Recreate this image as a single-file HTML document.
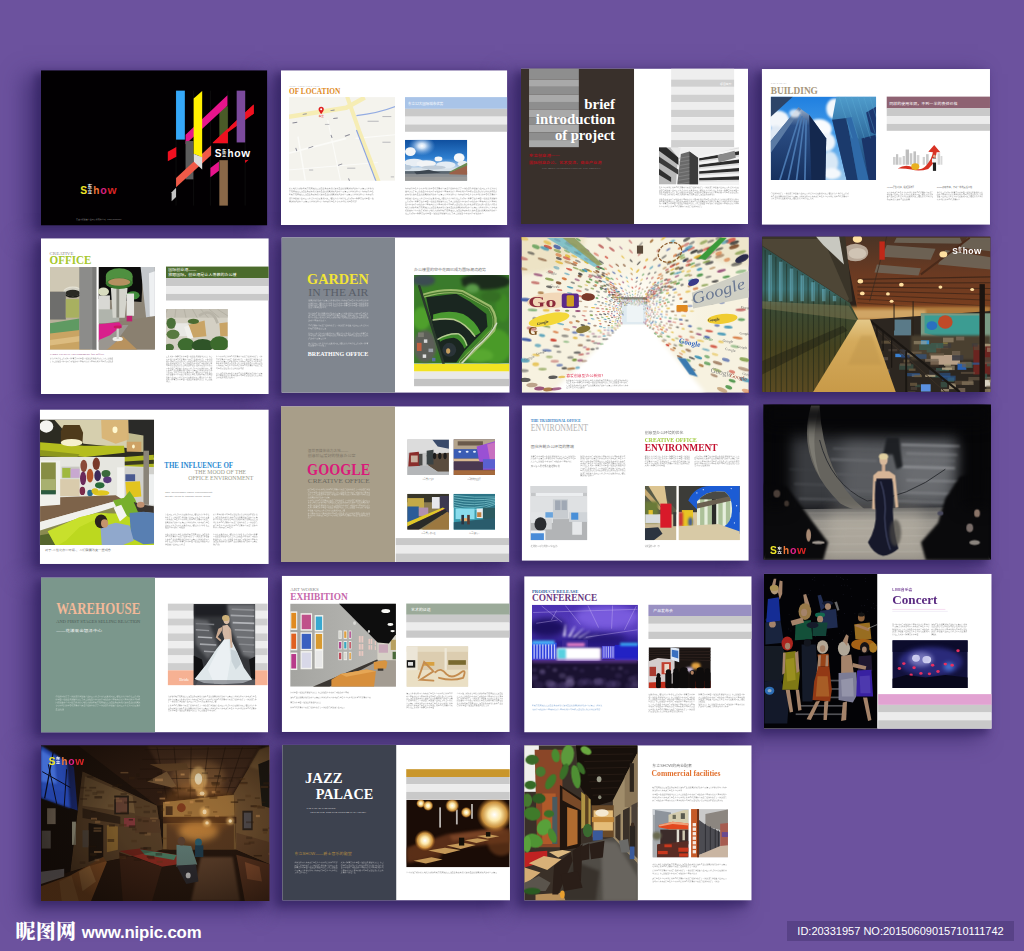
<!DOCTYPE html>
<html lang="zh"><head><meta charset="utf-8"><title>Show brochure</title>
<style>
html,body{margin:0;padding:0}
body{width:1024px;height:951px;overflow:hidden;background:#6c529e;position:relative;font-family:"Liberation Sans","Noto Sans CJK SC",sans-serif}
.sh{position:absolute;background:#3f2f6e;box-shadow:-15px 8px 20px 4px rgba(48,32,96,.55),-5px 4px 8px 2px rgba(40,24,84,.55)}
svg.t{position:absolute;display:block}
svg text{white-space:pre}
.s{font-family:"Liberation Serif","Noto Serif CJK SC",serif}
.b{font-weight:bold}
.c{font-family:"Liberation Sans","Noto Sans CJK SC",sans-serif}
#wm{position:absolute;left:15.5px;top:915.5px;color:#fff;font-weight:bold;white-space:nowrap}
#id{position:absolute;left:787px;top:921px;width:227px;height:20px;background:#584287;color:#fff;font-size:11px;line-height:20px;text-align:center;white-space:nowrap}
</style></head><body>
<div class="sh" style="left:42.0px;top:71.3px;width:224.3px;height:153.3px"></div>
<div class="sh" style="left:282.0px;top:71.3px;width:224.3px;height:152.8px"></div>
<div class="sh" style="left:522.0px;top:69.5px;width:225.1px;height:153.5px"></div>
<div class="sh" style="left:762.7px;top:70.0px;width:226.3px;height:153.8px"></div>
<div class="sh" style="left:42.0px;top:239.3px;width:225.8px;height:153.8px"></div>
<div class="sh" style="left:282.5px;top:238.3px;width:226.3px;height:153.5px"></div>
<div class="sh" style="left:522.7px;top:238.3px;width:225.1px;height:153.5px"></div>
<div class="sh" style="left:763.2px;top:237.5px;width:226.3px;height:153.5px"></div>
<div class="sh" style="left:40.8px;top:410.4px;width:227.0px;height:152.5px"></div>
<div class="sh" style="left:282.0px;top:407.3px;width:226.3px;height:153.8px"></div>
<div class="sh" style="left:522.7px;top:406.3px;width:225.1px;height:153.5px"></div>
<div class="sh" style="left:764.4px;top:405.5px;width:225.5px;height:153.0px"></div>
<div class="sh" style="left:42.0px;top:578.4px;width:225.1px;height:153.0px"></div>
<div class="sh" style="left:282.7px;top:576.7px;width:226.0px;height:154.2px"></div>
<div class="sh" style="left:525.2px;top:577.2px;width:225.5px;height:154.2px"></div>
<div class="sh" style="left:764.9px;top:574.8px;width:225.8px;height:153.0px"></div>
<div class="sh" style="left:42.0px;top:746.3px;width:226.3px;height:153.8px"></div>
<div class="sh" style="left:283.2px;top:745.8px;width:225.8px;height:153.8px"></div>
<div class="sh" style="left:525.2px;top:746.3px;width:225.5px;height:153.3px"></div>
<svg class="t" style="left:30px;top:60px" width="250" height="175" viewBox="0 0 1024 716.8">
<defs><clipPath id="clip1"><rect x="45" y="42" width="927" height="636"/></clipPath></defs>
<g clip-path="url(#clip1)">
<rect x="45" y="42" width="927" height="636" fill="#020002" /><g transform="translate(532.5,81.9) scale(0.5814)"><line x1="113" y1="75" x2="113" y2="885" stroke="#2c2c2c" stroke-width="2" /><line x1="237" y1="75" x2="237" y2="885" stroke="#2c2c2c" stroke-width="2" /><line x1="355" y1="75" x2="355" y2="885" stroke="#2c2c2c" stroke-width="2" /><line x1="478" y1="75" x2="478" y2="885" stroke="#2c2c2c" stroke-width="2" /><line x1="600" y1="75" x2="600" y2="885" stroke="#2c2c2c" stroke-width="2" /><rect x="418" y="185" width="60" height="260" fill="#4a5a28" /><polygon points="55,505 115,472 115,540 55,572" fill="#f01020" /><polygon points="370,447 660,172 660,238 370,448 370,447" fill="#f01020" /><polygon points="372,440 660,172 660,238 478,340 478,445 372,445" fill="#f01020" /><rect x="540" y="75" width="60" height="365" fill="#7b4a9c" /><polygon points="180,385 475,108 475,180 180,452" fill="#e8148c" /><rect x="180" y="430" width="55" height="270" fill="#5c5c5c" /><polygon points="113,690 360,462 360,530 113,755" fill="#f05a48" /><rect x="113" y="75" width="62" height="345" fill="#35a8f8" /><polygon points="237,130 297,78 297,545 237,520" fill="#fff000" /><polygon points="237,520 297,545 297,630 237,575" fill="#dcdcdc" /><polygon points="82,790 113,760 113,825 82,855" fill="#c4c4c4" /><rect x="418" y="565" width="60" height="320" fill="#8a6848" /><polygon points="355,620 415,575 415,640 355,685" fill="#e8148c" /><polygon points="598,565 625,562 600,585" fill="#e01020" /></g><text x="756.339" y="398.763" font-size="44.4125" class="c b" fill="#fff" textLength="27.6165" lengthAdjust="spacingAndGlyphs">S</text><text x="785.409" y="378.937" font-size="16.628" class="c b" fill="#fff" textLength="18.8955" lengthAdjust="spacingAndGlyphs">东</text><text x="785.409" y="397.164" font-size="16.628" class="c b" fill="#fff" textLength="18.8955" lengthAdjust="spacingAndGlyphs">立</text><text x="808.665" y="398.763" font-size="44.4125" class="c b" fill="#fff" textLength="24.7095" lengthAdjust="spacingAndGlyphs">h</text><text x="836.282" y="398.763" font-size="44.4125" class="c b" fill="#fff" textLength="26.163" lengthAdjust="spacingAndGlyphs">o</text><text x="865.351" y="398.763" font-size="44.4125" class="c b" fill="#fff" textLength="36.3375" lengthAdjust="spacingAndGlyphs">w</text><text x="206" y="547" font-size="46.3889" class="c b" fill="#f0e628" textLength="28.12" lengthAdjust="spacingAndGlyphs">S</text><text x="235.6" y="526.292" font-size="17.368" class="c b" fill="#fff" textLength="19.24" lengthAdjust="spacingAndGlyphs">东</text><text x="235.6" y="545.33" font-size="17.368" class="c b" fill="#fff" textLength="19.24" lengthAdjust="spacingAndGlyphs">立</text><text x="259.28" y="547" font-size="46.3889" class="c b" fill="#f07838" textLength="25.16" lengthAdjust="spacingAndGlyphs">h</text><text x="287.4" y="547" font-size="46.3889" class="c b" fill="#d42080" textLength="26.64" lengthAdjust="spacingAndGlyphs">o</text><text x="317" y="547" font-size="46.3889" class="c b" fill="#d82424" textLength="37" lengthAdjust="spacingAndGlyphs">w</text><text x="188" y="656" font-size="7" fill="#9a9a9a" class="c" text-anchor="start" textLength="186" lengthAdjust="spacingAndGlyphs" >东立国际创意产业园开发有限公司   0086-00000000</text>
</g></svg>
<svg class="t" style="left:270px;top:60px" width="250" height="175" viewBox="0 0 1024 716.8">
<defs><clipPath id="clip2"><rect x="45" y="42" width="927" height="634"/></clipPath></defs>
<g clip-path="url(#clip2)">
<rect x="45" y="42" width="927" height="634" fill="#ffffff" /><text x="78" y="112" font-size="11" fill="#9a9a9a" class="s" text-anchor="start" textLength="127" lengthAdjust="spacingAndGlyphs" >THE ADVANTAGE</text><text x="78" y="141" font-size="33.3333" fill="#e08a1e" class="s b" text-anchor="start" textLength="210" lengthAdjust="spacingAndGlyphs" >OF LOCATION</text><defs><clipPath id="cp1"><rect x="78" y="152" width="434" height="343"/></clipPath></defs><g clip-path="url(#cp1)"><rect x="78" y="152" width="434" height="343" fill="#f4f3ed" /><g transform="translate(61.4,131.1) scale(0.76)"><line x1="20" y1="330" x2="330" y2="250" stroke="#fbfbf8" stroke-width="10" /><line x1="70" y1="240" x2="110" y2="480" stroke="#fbfbf8" stroke-width="8" /><line x1="230" y1="150" x2="300" y2="480" stroke="#fbfbf8" stroke-width="6" /><line x1="380" y1="250" x2="600" y2="230" stroke="#fbfbf8" stroke-width="6" /><line x1="20" y1="420" x2="500" y2="380" stroke="#fbfbf8" stroke-width="5" /><path d="M15,135 L330,85 L430,30" stroke="#f6edb4" stroke-width="24" fill="none" stroke-linejoin="round"/><path d="M335,25 L400,210 L505,485" stroke="#f6edb4" stroke-width="22" fill="none" stroke-linejoin="round"/><path d="M385,127 Q500,115 595,78" stroke="#94ace2" stroke-width="7" fill="none"/><path d="M385,205 L492,485" stroke="#8aa2e0" stroke-width="6" fill="none"/><rect x="40" y="165" width="26" height="5" fill="#8a8a96" transform="rotate(-10 40 165)"/><rect x="125" y="300" width="28" height="5" fill="#8a8a96" transform="rotate(-20 125 300)"/><rect x="285" y="393" width="24" height="5" fill="#8a8a96" transform="rotate(-20 285 393)"/><rect x="322" y="236" width="28" height="5" fill="#8a8a96" transform="rotate(-20 322 236)"/><rect x="60" y="300" width="18" height="5" fill="#8a8a96" transform="rotate(70 60 300)"/><rect x="250" y="230" width="18" height="5" fill="#8a8a96" transform="rotate(70 250 230)"/><rect x="345" y="465" width="16" height="5" fill="#8a8a96" transform="rotate(70 345 465)"/><rect x="260" y="140" width="24" height="5" fill="#8a8a96" transform="rotate(-5 260 140)"/><rect x="95" y="118" width="22" height="5" fill="#8a8a96" transform="rotate(-8 95 118)"/><rect x="245" y="98" width="22" height="5" fill="#8a8a96" transform="rotate(-8 245 98)"/><rect x="525" y="130" width="48" height="5" fill="#b4b4b8"/><rect x="445" y="155" width="60" height="5" fill="#b4b4b8"/><rect x="525" y="268" width="44" height="5" fill="#b4b4b8"/><rect x="335" y="408" width="44" height="5" fill="#b4b4b8"/><rect x="130" y="418" width="22" height="5" fill="#b4b4b8"/><rect x="215" y="172" width="24" height="5" fill="#b4b4b8"/><rect x="570" y="455" width="18" height="5" fill="#b4b4b8"/><path d="M195,120 C183,104 181,98 181,93 a14,14 0 1 1 28,0 C209,98 207,104 195,120 Z" fill="#e02020"/><circle cx="195" cy="93" r="5.5" fill="#fff"/><text x="182" y="136" font-size="11" fill="#e02020" class="c" text-anchor="start" textLength="28" lengthAdjust="spacingAndGlyphs" >东立</text></g></g><rect x="553" y="152" width="419" height="48" fill="#a9c4e8" /><rect x="553" y="200" width="419" height="32" fill="#c9c9c9" /><rect x="553" y="232" width="419" height="32" fill="#ececec" /><rect x="553" y="264" width="419" height="30" fill="#c9c9c9" /><text x="565" y="184" font-size="14" fill="#ffffff" class="c" text-anchor="start" textLength="145" lengthAdjust="spacingAndGlyphs" >东立12大国际城市优势</text><defs><clipPath id="cp2"><rect x="553" y="327" width="255" height="168"/></clipPath><linearGradient id="lg3" x1="0" y1="0" x2="0" y2="1"><stop offset="0" stop-color="#0f4f9e"/><stop offset="0.45" stop-color="#2f7fd0"/><stop offset="0.62" stop-color="#9cc0e4"/><stop offset="0.7" stop-color="#d8e2ea"/></linearGradient><radialGradient id="rg4" cx="0.5" cy="0.5" r="0.5"><stop offset="0" stop-color="#ffffff"/><stop offset="0.25" stop-color="#eaf4ff" stop-opacity="0.9"/><stop offset="1" stop-color="#7ab0e8" stop-opacity="0"/></radialGradient><filter id="bl5" x="-100%" y="-100%" width="300%" height="300%" color-interpolation-filters="sRGB"><feGaussianBlur stdDeviation="3"/></filter></defs><g clip-path="url(#cp2)"><rect x="553" y="327" width="255" height="168" fill="url(#lg3)" /><ellipse cx="622" cy="352" rx="55" ry="40" fill="url(#rg4)" /><g filter="url(#bl5)"><ellipse cx="575" cy="375" rx="22" ry="18" fill="#f4f6f8" /><ellipse cx="590" cy="420" rx="40" ry="16" fill="#e8eef4" /><ellipse cx="640" cy="425" rx="40" ry="14" fill="#f2f4f6" /><ellipse cx="690" cy="405" rx="16" ry="10" fill="#f4f6f8" /><ellipse cx="720" cy="430" rx="40" ry="14" fill="#e4ecf4" /><ellipse cx="775" cy="400" rx="22" ry="18" fill="#f6f8fa" /><ellipse cx="790" cy="425" rx="22" ry="12" fill="#e8eef2" /><ellipse cx="560" cy="440" rx="20" ry="10" fill="#b8c8d8" /><ellipse cx="670" cy="440" rx="50" ry="8" fill="#c0ccd8" /></g><rect x="553" y="462" width="255" height="33" fill="#8b8f92" /><rect x="553" y="455" width="255" height="11" fill="#5a6670" /><polygon points="735,462 808,425 808,470 735,468" fill="#9a6048" /><polygon points="735,458 808,420 808,432 735,462" fill="#6a8a50" /><polygon points="590,458 650,450 700,462 600,468" fill="#3c4650" /><rect x="553" y="478" width="255" height="17" fill="#9a9a98" /></g><text x="78" y="529.848" font-size="6.88" fill="#5c5c5c" class="c" textLength="347" lengthAdjust="spacingAndGlyphs" opacity="0.72">核心地段交通便利配套完善周边汇聚商业金融文化资源为企业提供高效舒适的办公环境项目整体规</text><text x="78" y="542.348" font-size="6.88" fill="#5c5c5c" class="c" textLength="347" lengthAdjust="spacingAndGlyphs" opacity="0.72">套完善周边汇聚商业金融文化资源为企业提供高效舒适的办公环境项目整体规划以人为本融合绿色</text><text x="78" y="554.848" font-size="6.88" fill="#5c5c5c" class="c" textLength="347" lengthAdjust="spacingAndGlyphs" opacity="0.72">利配套完善周边汇聚商业金融文化资源为企业提供高效舒适的办公环境项目整体规划以人为本融合</text><text x="78" y="567.348" font-size="6.88" fill="#5c5c5c" class="c" textLength="347" lengthAdjust="spacingAndGlyphs" opacity="0.72">综合性创意产业园区开放式空间布局激发团队灵感促进交流协作让工作成为一种享受在这里每一位</text><text x="78" y="579.848" font-size="6.88" fill="#5c5c5c" class="c" textLength="277.6" lengthAdjust="spacingAndGlyphs" opacity="0.72">高效舒适的办公环境项目整体规划以人为本融合绿色生态与现代设计理念打造</text><text x="553" y="529.848" font-size="6.88" fill="#5c5c5c" class="c" textLength="378" lengthAdjust="spacingAndGlyphs" opacity="0.72">为本融合绿色生态与现代设计理念打造集办公展览会议休闲娱乐于一体的综合性创意产业园区开放式空间布</text><text x="553" y="542.348" font-size="6.88" fill="#5c5c5c" class="c" textLength="378" lengthAdjust="spacingAndGlyphs" opacity="0.72">能找到属于自己的舞台空中花园会呼吸的办公室将自然引入室内阳光空气绿植环绕让身心得到放松效率随之</text><text x="553" y="554.848" font-size="6.88" fill="#5c5c5c" class="c" textLength="378" lengthAdjust="spacingAndGlyphs" opacity="0.72">融文化资源为企业提供高效舒适的办公环境项目整体规划以人为本融合绿色生态与现代设计理念打造集办公</text><text x="553" y="567.348" font-size="6.88" fill="#5c5c5c" class="c" textLength="378" lengthAdjust="spacingAndGlyphs" opacity="0.72">性创意产业园区开放式空间布局激发团队灵感促进交流协作让工作成为一种享受在这里每一位创业者都能找</text><text x="553" y="579.848" font-size="6.88" fill="#5c5c5c" class="c" textLength="378" lengthAdjust="spacingAndGlyphs" opacity="0.72">工作成为一种享受在这里每一位创业者都能找到属于自己的舞台空中花园会呼吸的办公室将自然引入室内阳</text><text x="553" y="592.348" font-size="6.88" fill="#5c5c5c" class="c" textLength="378" lengthAdjust="spacingAndGlyphs" opacity="0.72">台空中花园会呼吸的办公室将自然引入室内阳光空气绿植环绕让身心得到放松效率随之提升国际潮流趋势引</text><text x="553" y="604.848" font-size="6.88" fill="#5c5c5c" class="c" textLength="378" lengthAdjust="spacingAndGlyphs" opacity="0.72">地段交通便利配套完善周边汇聚商业金融文化资源为企业提供高效舒适的办公环境项目整体规划以人为本融</text><text x="553" y="617.348" font-size="6.88" fill="#5c5c5c" class="c" textLength="378" lengthAdjust="spacingAndGlyphs" opacity="0.72">际创意办公空间位于城市核心地段交通便利配套完善周边汇聚商业金融文化资源为企业提供高效舒适的办公</text><text x="553" y="629.848" font-size="6.88" fill="#5c5c5c" class="c" textLength="321.3" lengthAdjust="spacingAndGlyphs" opacity="0.72">让工作成为一种享受在这里每一位创业者都能找到属于自己的舞台空中花园会呼吸的办公</text>
</g></svg>
<svg class="t" style="left:510px;top:60px" width="250" height="175" viewBox="0 0 1024 716.8">
<defs><clipPath id="clip3"><rect x="45" y="35" width="930" height="637"/></clipPath></defs>
<g clip-path="url(#clip3)">
<rect x="45" y="35" width="930" height="637" fill="#ffffff" /><rect x="45" y="35" width="463" height="637" fill="#39302b" /><rect x="78" y="35" width="204" height="45" fill="#8e8e8e" /><rect x="78" y="80" width="204" height="30" fill="#a9a9a9" /><rect x="78" y="110" width="204" height="32" fill="#8e8e8e" /><rect x="78" y="142" width="204" height="30" fill="#a9a9a9" /><rect x="78" y="172" width="204" height="32" fill="#8e8e8e" /><rect x="78" y="204" width="204" height="30" fill="#a9a9a9" /><rect x="78" y="234" width="204" height="32" fill="#8e8e8e" /><rect x="78" y="266" width="204" height="30" fill="#a9a9a9" /><rect x="78" y="296" width="204" height="32" fill="#8e8e8e" /><rect x="78" y="328" width="204" height="29" fill="#a9a9a9" /><text x="430" y="199" font-size="61" fill="#ffffff" class="s b" text-anchor="end" textLength="126" lengthAdjust="spacingAndGlyphs" >brief</text><text x="430" y="264" font-size="61" fill="#ffffff" class="s b" text-anchor="end" textLength="324" lengthAdjust="spacingAndGlyphs" >introduction</text><text x="430" y="329" font-size="61" fill="#ffffff" class="s b" text-anchor="end" textLength="246" lengthAdjust="spacingAndGlyphs" >of project</text><text x="78" y="399" font-size="15" fill="#a8141e" class="c b" text-anchor="start" textLength="125" lengthAdjust="spacingAndGlyphs" >东立创意港——</text><text x="78" y="424" font-size="15" fill="#a8141e" class="c b" text-anchor="start" textLength="297" lengthAdjust="spacingAndGlyphs" >国际创意办公、艺术交流、商业产业港</text><text x="130" y="446" font-size="7.5" fill="#8a8a8a" class="s" text-anchor="start" textLength="242" lengthAdjust="spacingAndGlyphs" >THE BRIEF INTRODUCTION OF THE PROJECT</text><rect x="660" y="35" width="258" height="45" fill="#eeeeee" /><rect x="660" y="80" width="258" height="30" fill="#d0d0d0" /><rect x="660" y="110" width="258" height="32" fill="#eeeeee" /><rect x="660" y="142" width="258" height="30" fill="#d0d0d0" /><rect x="660" y="172" width="258" height="32" fill="#eeeeee" /><rect x="660" y="204" width="258" height="30" fill="#d0d0d0" /><rect x="660" y="234" width="258" height="32" fill="#eeeeee" /><rect x="660" y="266" width="258" height="30" fill="#d0d0d0" /><rect x="660" y="296" width="258" height="32" fill="#eeeeee" /><rect x="660" y="328" width="258" height="29" fill="#d0d0d0" /><text x="860" y="101" font-size="10" fill="#ffffff" class="c" text-anchor="start" textLength="48" lengthAdjust="spacingAndGlyphs" >项目简介</text><defs><clipPath id="cp6"><rect x="610" y="357" width="328" height="153"/></clipPath></defs><g clip-path="url(#cp6)"><rect x="610" y="357" width="328" height="153" fill="#f0f0f0" /><polygon points="610,357 690,357 680,510 610,510" fill="#b8b8b8" /><polygon points="610,357 640,357 690,400 690,430 610,372" fill="#2a2a2a" /><polygon points="610,395 690,450 690,470 610,420" fill="#3a3a3a" /><polygon points="610,445 660,480 660,500 610,470" fill="#303030" /><polygon points="655,357 700,357 690,400" fill="#e8e8e8" /><polygon points="700,385 735,375 770,400 770,510 685,510" fill="#6a6a6a" /><polygon points="735,375 770,400 770,510 735,510" fill="#3c3c3c" /><line x1="690" y1="403" x2="735" y2="395" stroke="#9a9a9a" stroke-width="2" /><line x1="690" y1="418" x2="735" y2="410" stroke="#9a9a9a" stroke-width="2" /><line x1="690" y1="433" x2="735" y2="425" stroke="#9a9a9a" stroke-width="2" /><line x1="690" y1="448" x2="735" y2="440" stroke="#9a9a9a" stroke-width="2" /><line x1="690" y1="463" x2="735" y2="455" stroke="#9a9a9a" stroke-width="2" /><line x1="690" y1="478" x2="735" y2="470" stroke="#9a9a9a" stroke-width="2" /><line x1="690" y1="493" x2="735" y2="485" stroke="#9a9a9a" stroke-width="2" /><line x1="690" y1="508" x2="735" y2="500" stroke="#9a9a9a" stroke-width="2" /><polygon points="770,400 938,357 938,510 770,510" fill="#dcdcdc" /><polygon points="775,402 938,374 938,388 775,412" fill="#2c2c2c" /><polygon points="775,392 938,362 938,372 775,401" fill="#f4f4f4" /><polygon points="775,429 938,408 938,422 775,439" fill="#2c2c2c" /><polygon points="775,419 938,396 938,406 775,428" fill="#f4f4f4" /><polygon points="775,456 938,442 938,456 775,466" fill="#2c2c2c" /><polygon points="775,446 938,430 938,440 775,455" fill="#f4f4f4" /><polygon points="775,483 938,476 938,490 775,493" fill="#2c2c2c" /><polygon points="775,473 938,464 938,474 775,482" fill="#f4f4f4" /><polygon points="775,510 938,510 938,524 775,520" fill="#2c2c2c" /><polygon points="775,500 938,498 938,508 775,509" fill="#f4f4f4" /><polygon points="850,390 920,372 925,400 855,420" fill="#8a8a8a" /></g><text x="610" y="525.482" font-size="6.45" fill="#5c5c5c" class="c" textLength="328" lengthAdjust="spacingAndGlyphs" opacity="0.72">色生态与现代设计理念打造集办公展览会议休闲娱乐于一体的综合性创意产业园区开放式空间布局</text><text x="610" y="535.082" font-size="6.45" fill="#5c5c5c" class="c" textLength="328" lengthAdjust="spacingAndGlyphs" opacity="0.72">的综合性创意产业园区开放式空间布局激发团队灵感促进交流协作让工作成为一种享受在这里每一</text><text x="610" y="544.683" font-size="6.45" fill="#5c5c5c" class="c" textLength="328" lengthAdjust="spacingAndGlyphs" opacity="0.72">创业者都能找到属于自己的舞台空中花园会呼吸的办公室将自然引入室内阳光空气绿植环绕让身心</text><text x="610" y="554.282" font-size="6.45" fill="#5c5c5c" class="c" textLength="229.6" lengthAdjust="spacingAndGlyphs" opacity="0.72">公空间位于城市核心地段交通便利配套完善周边汇聚商业金融文化资</text><text x="610" y="571.482" font-size="6.45" fill="#5c5c5c" class="c" textLength="328" lengthAdjust="spacingAndGlyphs" opacity="0.72">的舞台空中花园会呼吸的办公室将自然引入室内阳光空气绿植环绕让身心得到放松效率随之提升国</text><text x="610" y="581.082" font-size="6.45" fill="#5c5c5c" class="c" textLength="328" lengthAdjust="spacingAndGlyphs" opacity="0.72">便利配套完善周边汇聚商业金融文化资源为企业提供高效舒适的办公环境项目整体规划以人为本融</text><text x="610" y="590.683" font-size="6.45" fill="#5c5c5c" class="c" textLength="328" lengthAdjust="spacingAndGlyphs" opacity="0.72">为一种享受在这里每一位创业者都能找到属于自己的舞台空中花园会呼吸的办公室将自然引入室内</text><text x="610" y="600.282" font-size="6.45" fill="#5c5c5c" class="c" textLength="180.4" lengthAdjust="spacingAndGlyphs" opacity="0.72">生态与现代设计理念打造集办公展览会议休闲娱乐于</text>
</g></svg>
<svg class="t" style="left:750px;top:60px" width="250" height="175" viewBox="0 0 1024 716.8">
<defs><clipPath id="clip4"><rect x="48" y="37" width="935" height="638"/></clipPath></defs>
<g clip-path="url(#clip4)">
<rect x="48" y="37" width="935" height="638" fill="#ffffff" /><text x="85" y="100" font-size="11" fill="#b0b0b0" class="s" text-anchor="start" textLength="66" lengthAdjust="spacingAndGlyphs" >OFFICE</text><text x="85" y="139" font-size="43.9394" fill="#a5957a" class="s b" text-anchor="start" textLength="193" lengthAdjust="spacingAndGlyphs" >BUILDING</text><defs><clipPath id="cp7"><rect x="85" y="150" width="432" height="342"/></clipPath><linearGradient id="lg8" x1="0" y1="0" x2="0" y2="1"><stop offset="0" stop-color="#1f7fe0"/><stop offset="0.5" stop-color="#4aa0ea"/><stop offset="1" stop-color="#9ccaf0"/></linearGradient><filter id="bl9" x="-100%" y="-100%" width="300%" height="300%" color-interpolation-filters="sRGB"><feGaussianBlur stdDeviation="5"/></filter><linearGradient id="lg10" x1="0" y1="0" x2="0" y2="1"><stop offset="0" stop-color="#9fb4cc"/><stop offset="0.25" stop-color="#2c4f86"/><stop offset="1" stop-color="#16305e"/></linearGradient><linearGradient id="lg11" x1="0" y1="0" x2="0" y2="1"><stop offset="0" stop-color="#4f9ccc"/><stop offset="0.5" stop-color="#2f6a9c"/><stop offset="1" stop-color="#1c3f74"/></linearGradient></defs><g clip-path="url(#cp7)"><rect x="85" y="150" width="432" height="342" fill="url(#lg8)" /><g transform="translate(61.4,131.1) scale(0.76)"><g filter="url(#bl9)"><ellipse cx="70" cy="150" rx="60" ry="50" fill="#f2f6fa" /><ellipse cx="290" cy="200" rx="70" ry="55" fill="#fafcfe" /><ellipse cx="330" cy="270" rx="50" ry="50" fill="#eef4fa" /><ellipse cx="375" cy="90" rx="45" ry="55" fill="#f4f8fc" /><ellipse cx="350" cy="380" rx="45" ry="60" fill="#d8e8f6" /><ellipse cx="360" cy="440" rx="50" ry="30" fill="#f4f8fc" /><ellipse cx="60" cy="230" rx="40" ry="50" fill="#dfe9f4" /></g><polygon points="30,25 150,25 30,135" fill="#2c4468" /><polygon points="180,82 238,122 330,250 325,475 30,475 30,265" fill="url(#lg10)" /><polygon points="238,122 330,250 325,475 250,475" fill="#14284e" /><line x1="80" y1="475" x2="190" y2="120" stroke="#4a78b0" stroke-width="9" /><line x1="125" y1="475" x2="200" y2="130" stroke="#4a78b0" stroke-width="9" /><line x1="170" y1="475" x2="212" y2="140" stroke="#4a78b0" stroke-width="9" /><line x1="215" y1="475" x2="222" y2="150" stroke="#4a78b0" stroke-width="9" /><polygon points="30,265 180,82 195,92 30,330" fill="#5a7aa4" /><ellipse cx="160" cy="115" rx="30" ry="22" fill="#ffffff" opacity="0.75" filter="url(#bl9)"/><polygon points="385,25 598,25 598,475 440,475 362,150" fill="url(#lg11)" /><polygon points="362,150 440,140 500,475 440,475" fill="#1b3a6c" /><polygon points="440,140 470,135 560,475 500,475" fill="#2f6aa8" /><polygon points="520,250 598,230 598,475 560,475" fill="#1a3468" /><polygon points="545,110 598,80 598,230 570,215" fill="#1d3870" /><line x1="400" y1="25" x2="470" y2="250" stroke="#5fb0d8" stroke-width="3" opacity="0.6"/><line x1="433" y1="25" x2="503" y2="250" stroke="#5fb0d8" stroke-width="3" opacity="0.6"/><line x1="466" y1="25" x2="536" y2="250" stroke="#5fb0d8" stroke-width="3" opacity="0.6"/><line x1="499" y1="25" x2="569" y2="250" stroke="#5fb0d8" stroke-width="3" opacity="0.6"/><line x1="532" y1="25" x2="602" y2="250" stroke="#5fb0d8" stroke-width="3" opacity="0.6"/><line x1="565" y1="25" x2="635" y2="250" stroke="#5fb0d8" stroke-width="3" opacity="0.6"/></g></g><rect x="560" y="150" width="423" height="48" fill="#8e6272" /><rect x="560" y="198" width="423" height="32" fill="#c9c9c9" /><rect x="560" y="230" width="423" height="32" fill="#ececec" /><rect x="560" y="262" width="423" height="28" fill="#c9c9c9" /><text x="570" y="183" font-size="14" fill="#ffffff" class="c" text-anchor="start" textLength="280" lengthAdjust="spacingAndGlyphs" >同样的使用年限，不到一半的责任价格</text><g transform="translate(61.4,131.1) scale(0.76)"><rect x="690" y="350" width="14" height="42" fill="#d0d0d0" /><rect x="706" y="335" width="12" height="57" fill="#c4c4c4" /><rect x="720" y="352" width="16" height="40" fill="#d8d8d8" /><rect x="742" y="345" width="12" height="47" fill="#cfcfcf" /><rect x="758" y="310" width="18" height="82" fill="#bdbdbd" /><rect x="780" y="330" width="14" height="62" fill="#c8c8c8" /><rect x="800" y="320" width="14" height="72" fill="#c0c0c0" /><rect x="818" y="340" width="14" height="52" fill="#d4d4d4" /><rect x="850" y="350" width="12" height="42" fill="#d0d0d0" /><rect x="868" y="335" width="14" height="57" fill="#c8c8c8" /><rect x="930" y="330" width="14" height="62" fill="#d0d0d0" /><rect x="946" y="345" width="10" height="47" fill="#d8d8d8" /><path d="M715,412 Q760,385 800,408 T870,395 Q900,360 905,325 L880,322 L912,285 L945,325 L925,325 Q920,380 880,415 Q830,430 790,418 Q750,410 715,412 Z" fill="#d83224"/><ellipse cx="810" cy="402" rx="22" ry="18" fill="#e8b020" /><rect x="905" y="355" width="17" height="70" fill="#1e1e1e" /><ellipse cx="913" cy="346" rx="7" ry="8" fill="#d8b090" /><rect x="900" y="358" width="27" height="22" fill="#f4f4f4" /></g><text x="85" y="550.482" font-size="6.45" fill="#5c5c5c" class="c" textLength="320" lengthAdjust="spacingAndGlyphs" opacity="0.72">会议休闲娱乐于一体的综合性创意产业园区开放式空间布局激发团队灵感促进交流协作让工作成</text><text x="85" y="560.482" font-size="6.45" fill="#5c5c5c" class="c" textLength="320" lengthAdjust="spacingAndGlyphs" opacity="0.72">为企业提供高效舒适的办公环境项目整体规划以人为本融合绿色生态与现代设计理念打造集办公</text><text x="85" y="570.482" font-size="6.45" fill="#5c5c5c" class="c" textLength="176" lengthAdjust="spacingAndGlyphs" opacity="0.72">开放式空间布局激发团队灵感促进交流协作让工作成</text><text x="560" y="524" font-size="8" fill="#666" class="c" text-anchor="start" textLength="112" lengthAdjust="spacingAndGlyphs" >401-801层性价比高，投资回报丰厚</text><text x="765" y="524" font-size="8" fill="#666" class="c" text-anchor="start" textLength="145" lengthAdjust="spacingAndGlyphs" >100%使用率高，不到一半的责任价格</text><text x="560" y="543.482" font-size="6.45" fill="#5c5c5c" class="c" textLength="190" lengthAdjust="spacingAndGlyphs" opacity="0.72">以人为本融合绿色生态与现代设计理念打造集办公展览会</text><text x="560" y="553.082" font-size="6.45" fill="#5c5c5c" class="c" textLength="190" lengthAdjust="spacingAndGlyphs" opacity="0.72">性创意产业园区开放式空间布局激发团队灵感促进交流协</text><text x="560" y="562.683" font-size="6.45" fill="#5c5c5c" class="c" textLength="190" lengthAdjust="spacingAndGlyphs" opacity="0.72">意产业园区开放式空间布局激发团队灵感促进交流协作让</text><text x="560" y="572.282" font-size="6.45" fill="#5c5c5c" class="c" textLength="95" lengthAdjust="spacingAndGlyphs" opacity="0.72">金融文化资源为企业提供高</text><text x="765" y="543.482" font-size="6.45" fill="#5c5c5c" class="c" textLength="190" lengthAdjust="spacingAndGlyphs" opacity="0.72">协作让工作成为一种享受在这里每一位创业者都能找到属</text><text x="765" y="553.082" font-size="6.45" fill="#5c5c5c" class="c" textLength="190" lengthAdjust="spacingAndGlyphs" opacity="0.72">的办公室将自然引入室内阳光空气绿植环绕让身心得到放</text><text x="765" y="562.683" font-size="6.45" fill="#5c5c5c" class="c" textLength="190" lengthAdjust="spacingAndGlyphs" opacity="0.72">创意产业园区开放式空间布局激发团队灵感促进交流协作</text><text x="765" y="572.282" font-size="6.45" fill="#5c5c5c" class="c" textLength="95" lengthAdjust="spacingAndGlyphs" opacity="0.72">与现代设计理念打造集办公</text>
</g></svg>
<svg class="t" style="left:30px;top:228px" width="250" height="175" viewBox="0 0 1024 716.8">
<defs><clipPath id="clip5"><rect x="45" y="42" width="933" height="638"/></clipPath></defs>
<g clip-path="url(#clip5)">
<rect x="45" y="42" width="933" height="638" fill="#ffffff" /><text x="80" y="109" font-size="14" fill="#8a8a8a" class="s" text-anchor="start" textLength="98" lengthAdjust="spacingAndGlyphs" >CREATIVE</text><text x="80" y="146" font-size="48.4848" fill="#a6c82c" class="s b" text-anchor="start" textLength="172" lengthAdjust="spacingAndGlyphs" >OFFICE</text><defs><clipPath id="cp12"><rect x="82" y="160" width="430" height="338"/></clipPath><filter id="bl13" x="-100%" y="-100%" width="300%" height="300%" color-interpolation-filters="sRGB"><feGaussianBlur stdDeviation="4"/></filter></defs><g clip-path="url(#cp12)"><g transform="translate(61.4,139.3) scale(0.76)"><rect x="25" y="25" width="255" height="450" fill="#b8b09a" /><rect x="25" y="25" width="160" height="135" fill="#cfc8b4" /><ellipse cx="150" cy="165" rx="50" ry="28" fill="#1a1a18" /><ellipse cx="150" cy="158" rx="50" ry="26" fill="#e8e6d8" opacity=".9"/><ellipse cx="150" cy="168" rx="40" ry="18" fill="#2a2a24" /><rect x="25" y="160" width="87" height="150" fill="#6e6e6c" /><rect x="112" y="200" width="73" height="100" fill="#a8b060" /><polygon points="25,330 185,305 185,380 25,400" fill="#5f9a62" /><polygon points="25,385 200,365 245,420 245,475 25,475" fill="#c9a463" /><polygon points="25,420 215,395 245,420 25,450" fill="#dcbc80" /><rect x="185" y="25" width="93" height="450" fill="#8c8c8a" /><rect x="255" y="25" width="23" height="450" fill="#7a7a78" /><rect x="278" y="25" width="12" height="450" fill="#ffffff" /><rect x="290" y="25" width="302" height="450" fill="#8c8476" /><polygon points="290,25 530,25 520,215 290,200" fill="#0c0c0c" /><polygon points="515,25 592,25 592,420 545,300" fill="#c4c8cc" /><polygon points="560,60 592,50 592,330 565,290" fill="#eef0f2" /><rect x="290" y="180" width="60" height="120" fill="#d8d8d4" /><rect x="290" y="255" width="110" height="75" fill="#b0b4ac" /><polygon points="355,140 445,140 430,300 365,300" fill="#d4d4cc" /><rect x="385" y="140" width="15" height="160" fill="#8a8a80" /><ellipse cx="400" cy="75" rx="72" ry="42" fill="#4f9040" /><rect x="328" y="75" width="144" height="40" fill="#4f9040" /><ellipse cx="400" cy="115" rx="72" ry="30" fill="#3c7a30" /><ellipse cx="400" cy="108" rx="60" ry="20" fill="#b49060" /><ellipse cx="475" cy="180" rx="35" ry="22" fill="#3f8a3a" /><ellipse cx="315" cy="160" rx="30" ry="22" fill="#d8dcc0" /><rect x="440" y="170" width="40" height="120" fill="#e4e4e0" /><polygon points="330,330 600,290 592,475 290,475" fill="#8a8070" /><polygon points="290,335 400,325 420,350 330,420 290,430" fill="#d81f8c" /><polygon points="290,420 350,395 420,340 450,340 350,475 290,475" fill="#9a9690" /><polygon points="330,475 420,400 500,475" fill="#b8925e" /><ellipse cx="392" cy="415" rx="28" ry="12" fill="#eeeeea" /><rect x="386" y="355" width="12" height="60" fill="#d0d0cc" /><ellipse cx="392" cy="350" rx="22" ry="8" fill="#c81860" /><rect x="440" y="290" width="30" height="30" fill="#c02070" /></g></g><rect x="557" y="158" width="421" height="47" fill="#4b6b2c" /><rect x="557" y="205" width="421" height="33" fill="#c9c9c9" /><rect x="557" y="238" width="421" height="32" fill="#ececec" /><rect x="557" y="270" width="421" height="27" fill="#c9c9c9" /><text x="566" y="177" font-size="13" fill="#fff" class="c" text-anchor="start" textLength="115" lengthAdjust="spacingAndGlyphs" >国际创业港——</text><text x="566" y="197" font-size="13" fill="#fff" class="c" text-anchor="start" textLength="280" lengthAdjust="spacingAndGlyphs" >放眼国际，创业港是让人羡慕的办公楼</text><defs><clipPath id="cp14"><rect x="557" y="332" width="253" height="168"/></clipPath></defs><g clip-path="url(#cp14)"><g transform="translate(61.4,139.3) scale(0.76)"><rect x="650" y="250" width="340" height="230" fill="#d4d0c4" /><rect x="650" y="250" width="340" height="50" fill="#c4c0b4" /><line x1="660" y1="255" x2="640" y2="300" stroke="#a8a498" stroke-width="3" /><line x1="705" y1="255" x2="700" y2="300" stroke="#a8a498" stroke-width="3" /><line x1="750" y1="255" x2="760" y2="300" stroke="#a8a498" stroke-width="3" /><line x1="795" y1="255" x2="820" y2="300" stroke="#a8a498" stroke-width="3" /><line x1="840" y1="255" x2="880" y2="300" stroke="#a8a498" stroke-width="3" /><line x1="885" y1="255" x2="940" y2="300" stroke="#a8a498" stroke-width="3" /><line x1="930" y1="255" x2="1000" y2="300" stroke="#a8a498" stroke-width="3" /><path d="M830,290 Q900,240 930,330" stroke="#b8b4a8" stroke-width="14" fill="none"/><polygon points="770,340 860,315 870,400 775,410" fill="#c9a466" /><polygon points="940,330 985,325 985,400 945,400" fill="#c9a466" /><rect x="700" y="330" width="70" height="70" fill="#e8e8e4" /><polygon points="750,350 775,340 800,410 770,415" fill="#f0f0ec" /><g filter="url(#bl13)"><ellipse cx="680" cy="330" rx="25" ry="30" fill="#4a7038" /><ellipse cx="690" cy="390" rx="35" ry="25" fill="#587a40" /><ellipse cx="800" cy="320" rx="30" ry="14" fill="#4a6a30" /><ellipse cx="760" cy="445" rx="45" ry="35" fill="#3e6c30" /><ellipse cx="850" cy="450" rx="60" ry="35" fill="#2f5428" /><ellipse cx="940" cy="440" rx="50" ry="40" fill="#3c6a2c" /><ellipse cx="670" cy="460" rx="25" ry="20" fill="#4a7038" /></g></g></g><text x="82" y="521" font-size="11" fill="#a05a8a" class="s" text-anchor="start" textLength="223" lengthAdjust="spacingAndGlyphs" >Good creative environment for office</text><text x="82" y="537.482" font-size="6.45" fill="#5c5c5c" class="c" textLength="260" lengthAdjust="spacingAndGlyphs" opacity="0.72">进交流协作让工作成为一种享受在这里每一位创业者都能找到属于自己的舞台</text><text x="82" y="548.482" font-size="6.45" fill="#5c5c5c" class="c" textLength="260" lengthAdjust="spacingAndGlyphs" opacity="0.72">于自己的舞台空中花园会呼吸的办公室将自然引入室内阳光空气绿植环绕让身</text><text x="557" y="529.482" font-size="6.45" fill="#5c5c5c" class="c" textLength="190" lengthAdjust="spacingAndGlyphs" opacity="0.72">工作成为一种享受在这里每一位创业者都能找到属于自己</text><text x="557" y="538.782" font-size="6.45" fill="#5c5c5c" class="c" textLength="190" lengthAdjust="spacingAndGlyphs" opacity="0.72">与现代设计理念打造集办公展览会议休闲娱乐于一体的综</text><text x="557" y="548.082" font-size="6.45" fill="#5c5c5c" class="c" textLength="190" lengthAdjust="spacingAndGlyphs" opacity="0.72">光空气绿植环绕让身心得到放松效率随之提升国际潮流趋</text><text x="557" y="557.382" font-size="6.45" fill="#5c5c5c" class="c" textLength="190" lengthAdjust="spacingAndGlyphs" opacity="0.72">创业者都能找到属于自己的舞台空中花园会呼吸的办公室</text><text x="557" y="566.683" font-size="6.45" fill="#5c5c5c" class="c" textLength="190" lengthAdjust="spacingAndGlyphs" opacity="0.72">气绿植环绕让身心得到放松效率随之提升国际潮流趋势引</text><text x="557" y="575.982" font-size="6.45" fill="#5c5c5c" class="c" textLength="190" lengthAdjust="spacingAndGlyphs" opacity="0.72">一体的综合性创意产业园区开放式空间布局激发团队灵感</text><text x="557" y="585.282" font-size="6.45" fill="#5c5c5c" class="c" textLength="190" lengthAdjust="spacingAndGlyphs" opacity="0.72">资源为企业提供高效舒适的办公环境项目整体规划以人为</text><text x="557" y="594.582" font-size="6.45" fill="#5c5c5c" class="c" textLength="190" lengthAdjust="spacingAndGlyphs" opacity="0.72">产业园区开放式空间布局激发团队灵感促进交流协作让工</text><text x="557" y="603.882" font-size="6.45" fill="#5c5c5c" class="c" textLength="190" lengthAdjust="spacingAndGlyphs" opacity="0.72">国际创意办公空间位于城市核心地段交通便利配套完善周</text><text x="557" y="613.183" font-size="6.45" fill="#5c5c5c" class="c" textLength="190" lengthAdjust="spacingAndGlyphs" opacity="0.72">创意产业园区开放式空间布局激发团队灵感促进交流协作</text><text x="557" y="622.482" font-size="6.45" fill="#5c5c5c" class="c" textLength="190" lengthAdjust="spacingAndGlyphs" opacity="0.72">成为一种享受在这里每一位创业者都能找到属于自己的舞</text><text x="557" y="631.782" font-size="6.45" fill="#5c5c5c" class="c" textLength="19" lengthAdjust="spacingAndGlyphs" opacity="0.72">代设</text><text x="762" y="529.482" font-size="6.45" fill="#5c5c5c" class="c" textLength="190" lengthAdjust="spacingAndGlyphs" opacity="0.72">生态与现代设计理念打造集办公展览会议休闲娱乐于一体</text><text x="762" y="538.782" font-size="6.45" fill="#5c5c5c" class="c" textLength="190" lengthAdjust="spacingAndGlyphs" opacity="0.72">念打造集办公展览会议休闲娱乐于一体的综合性创意产业</text><text x="762" y="548.082" font-size="6.45" fill="#5c5c5c" class="c" textLength="190" lengthAdjust="spacingAndGlyphs" opacity="0.72">的办公环境项目整体规划以人为本融合绿色生态与现代设</text><text x="762" y="557.382" font-size="6.45" fill="#5c5c5c" class="c" textLength="190" lengthAdjust="spacingAndGlyphs" opacity="0.72">内阳光空气绿植环绕让身心得到放松效率随之提升国际潮</text><text x="762" y="566.683" font-size="6.45" fill="#5c5c5c" class="c" textLength="190" lengthAdjust="spacingAndGlyphs" opacity="0.72">人为本融合绿色生态与现代设计理念打造集办公展览会议</text><text x="762" y="575.982" font-size="6.45" fill="#5c5c5c" class="c" textLength="114" lengthAdjust="spacingAndGlyphs" opacity="0.72">气绿植环绕让身心得到放松效率随</text><text x="762" y="597.482" font-size="6.45" fill="#5c5c5c" class="c" textLength="190" lengthAdjust="spacingAndGlyphs" opacity="0.72">边汇聚商业金融文化资源为企业提供高效舒适的办公环境</text><text x="762" y="606.782" font-size="6.45" fill="#5c5c5c" class="c" textLength="190" lengthAdjust="spacingAndGlyphs" opacity="0.72">办公室将自然引入室内阳光空气绿植环绕让身心得到放松</text><text x="762" y="616.082" font-size="6.45" fill="#5c5c5c" class="c" textLength="76" lengthAdjust="spacingAndGlyphs" opacity="0.72">到放松效率随之提升国</text>
</g></svg>
<svg class="t" style="left:270px;top:228px" width="250" height="175" viewBox="0 0 1024 716.8">
<defs><clipPath id="clip6"><rect x="47" y="38" width="935" height="637"/></clipPath></defs>
<g clip-path="url(#clip6)">
<rect x="47" y="38" width="935" height="637" fill="#ffffff" /><rect x="47" y="38" width="465" height="637" fill="#80868f" /><text x="152" y="230" font-size="60.6061" fill="#f2e436" class="s b" text-anchor="start" textLength="253" lengthAdjust="spacingAndGlyphs" >GARDEN</text><text x="157" y="277" font-size="40" fill="#595e68" class="s" text-anchor="start" textLength="246" lengthAdjust="spacingAndGlyphs" >IN THE AIR</text><text x="157" y="300.483" font-size="6.45" fill="#f0f0f0" class="c" textLength="246" lengthAdjust="spacingAndGlyphs" opacity="0.6">供高效舒适的办公环境项目整体规划以人为本融合绿色生态与现代设计理</text><text x="157" y="310.083" font-size="6.45" fill="#f0f0f0" class="c" textLength="246" lengthAdjust="spacingAndGlyphs" opacity="0.6">局激发团队灵感促进交流协作让工作成为一种享受在这里每一位创业者都</text><text x="157" y="319.683" font-size="6.45" fill="#f0f0f0" class="c" textLength="246" lengthAdjust="spacingAndGlyphs" opacity="0.6">局激发团队灵感促进交流协作让工作成为一种享受在这里每一位创业者都</text><text x="157" y="329.283" font-size="6.45" fill="#f0f0f0" class="c" textLength="73.8" lengthAdjust="spacingAndGlyphs" opacity="0.6">然引入室内阳光空气</text><text x="157" y="350.483" font-size="6.45" fill="#f0f0f0" class="c" textLength="246" lengthAdjust="spacingAndGlyphs" opacity="0.6">化资源为企业提供高效舒适的办公环境项目整体规划以人为本融合绿色生</text><text x="157" y="360.083" font-size="6.45" fill="#f0f0f0" class="c" textLength="246" lengthAdjust="spacingAndGlyphs" opacity="0.6">融合绿色生态与现代设计理念打造集办公展览会议休闲娱乐于一体的综合</text><text x="157" y="369.683" font-size="6.45" fill="#f0f0f0" class="c" textLength="246" lengthAdjust="spacingAndGlyphs" opacity="0.6">办公空间位于城市核心地段交通便利配套完善周边汇聚商业金融文化资源</text><text x="157" y="379.283" font-size="6.45" fill="#f0f0f0" class="c" textLength="73.8" lengthAdjust="spacingAndGlyphs" opacity="0.6">的办公室将自然引入</text><text x="157" y="402.483" font-size="6.45" fill="#f0f0f0" class="c" textLength="246" lengthAdjust="spacingAndGlyphs" opacity="0.6">念打造集办公展览会议休闲娱乐于一体的综合性创意产业园区开放式空间</text><text x="157" y="412.083" font-size="6.45" fill="#f0f0f0" class="c" textLength="73.8" lengthAdjust="spacingAndGlyphs" opacity="0.6">利配套完善周边汇聚</text><text x="157" y="433.483" font-size="6.45" fill="#f0f0f0" class="c" textLength="246" lengthAdjust="spacingAndGlyphs" opacity="0.6">业园区开放式空间布局激发团队灵感促进交流协作让工作成为一种享受在</text><text x="157" y="443.083" font-size="6.45" fill="#f0f0f0" class="c" textLength="246" lengthAdjust="spacingAndGlyphs" opacity="0.6">空中花园会呼吸的办公室将自然引入室内阳光空气绿植环绕让身心得到放</text><text x="157" y="452.683" font-size="6.45" fill="#f0f0f0" class="c" textLength="73.8" lengthAdjust="spacingAndGlyphs" opacity="0.6">适的办公环境项目整</text><text x="157" y="473.483" font-size="6.45" fill="#f0f0f0" class="c" textLength="246" lengthAdjust="spacingAndGlyphs" opacity="0.6">意产业园区开放式空间布局激发团队灵感促进交流协作让工作成为一种享</text><text x="157" y="483.083" font-size="6.45" fill="#f0f0f0" class="c" textLength="73.8" lengthAdjust="spacingAndGlyphs" opacity="0.6">际创意办公空间位于</text><text x="155" y="526" font-size="24.2424" fill="#ffffff" class="s b" text-anchor="start" textLength="248" lengthAdjust="spacingAndGlyphs" >BREATHING OFFICE</text><text x="590" y="177" font-size="15" fill="#777" class="c" text-anchor="start" textLength="295" lengthAdjust="spacingAndGlyphs" >办公楼里的空中花园已成为国际潮流趋势</text><defs><clipPath id="cp15"><rect x="590" y="192" width="390" height="364"/></clipPath><filter id="bl16" x="-100%" y="-100%" width="300%" height="300%" color-interpolation-filters="sRGB"><feGaussianBlur stdDeviation="14"/></filter><filter id="bl17" x="-100%" y="-100%" width="300%" height="300%" color-interpolation-filters="sRGB"><feGaussianBlur stdDeviation="5"/></filter></defs><g clip-path="url(#cp15)"><g transform="translate(573.4,172) scale(0.4737)"><rect x="30" y="40" width="830" height="770" fill="#3a7c28" /><g filter="url(#bl16)"><ellipse cx="120" cy="90" rx="100" ry="50" fill="#3c4c52" /><ellipse cx="650" cy="100" rx="220" ry="70" fill="#1c2c1c" /><ellipse cx="330" cy="110" rx="120" ry="60" fill="#3a7a2c" /><ellipse cx="540" cy="160" rx="60" ry="40" fill="#5a9a48" /><ellipse cx="100" cy="420" rx="80" ry="100" fill="#4fa02c" /><ellipse cx="740" cy="660" rx="140" ry="150" fill="#4a9a28" /><ellipse cx="800" cy="330" rx="60" ry="120" fill="#3f8a26" /><ellipse cx="130" cy="660" rx="100" ry="140" fill="#5c5e58" /><ellipse cx="600" cy="740" rx="120" ry="60" fill="#58a830" /><ellipse cx="700" cy="230" rx="90" ry="50" fill="#356e24" /></g><polygon points="140,235 400,205 520,275 660,380 670,490 590,575 470,700 400,800 290,800 200,500 160,330" fill="#1a2620" filter="url(#bl17)"/><path d="M200,385 Q330,340 460,380 Q560,430 610,540 Q560,580 540,560 Q480,460 380,425 Q280,410 200,430 Z" fill="#4a9a30" filter="url(#bl17)"/><path d="M250,590 Q330,540 420,550 Q480,580 500,650 L470,680 Q440,600 380,585 Q300,590 260,620 Z" fill="#3f8a2c" filter="url(#bl17)"/><ellipse cx="340" cy="690" rx="60" ry="60" fill="#2a3438" filter="url(#bl17)"/><ellipse cx="330" cy="700" rx="18" ry="24" fill="#c8a060" filter="url(#bl17)"/><g fill="none" stroke-linecap="round" filter="url(#bl17)"><path d="M120,220 Q300,165 450,190 Q560,250 690,320 Q760,420 720,520 Q620,630 440,800" stroke="#9cba6c" stroke-width="36"/><path d="M125,222 Q300,170 450,196 Q560,256 684,326 Q750,420 712,516 Q612,626 436,796" stroke="#4c7a30" stroke-width="12"/><path d="M750,460 Q700,560 560,680 L450,805" stroke="#d0d8c8" stroke-width="12"/><path d="M200,432 Q300,415 380,428 Q480,460 560,572" stroke="#b4c88c" stroke-width="14"/><path d="M240,600 Q330,545 420,552 Q470,580 490,650" stroke="#b8cc94" stroke-width="12"/><path d="M80,140 L290,810" stroke="#2a3a2c" stroke-width="22"/></g><rect x="60" y="630" width="40" height="70" fill="#c06040" filter="url(#bl17)"/><rect x="120" y="600" width="30" height="30" fill="#d8d8d8" filter="url(#bl17)"/><rect x="160" y="680" width="40" height="30" fill="#9aa0a8" filter="url(#bl17)"/><rect x="110" y="730" width="30" height="30" fill="#e0e0e0" filter="url(#bl17)"/><rect x="190" y="760" width="30" height="30" fill="#5a70a0" filter="url(#bl17)"/><rect x="70" y="540" width="50" height="40" fill="#7a7a70" filter="url(#bl17)"/></g></g><rect x="590" y="557" width="390" height="31" fill="#f2e322" /><rect x="590" y="588" width="390" height="30" fill="#e9e9e9" /><rect x="590" y="618" width="390" height="30" fill="#c3c3c3" />
</g></svg>
<svg class="t" style="left:510px;top:228px" width="250" height="175" viewBox="0 0 1024 716.8">
<defs><clipPath id="clip7"><rect x="48" y="38" width="930" height="637"/></clipPath></defs>
<g clip-path="url(#clip7)">
<rect x="48" y="38" width="930" height="637" fill="#f7f2e0" /><defs><radialGradient id="rg18" cx="0.5" cy="0.5" r="0.5"><stop offset="0" stop-color="#ffffff"/><stop offset="0.5" stop-color="#fffdf4" stop-opacity="0.8"/><stop offset="1" stop-color="#f7f2e0" stop-opacity="0"/></radialGradient><filter id="bl19" x="-100%" y="-100%" width="300%" height="300%" color-interpolation-filters="sRGB"><feGaussianBlur stdDeviation="1.2"/></filter><filter id="bl20" x="-100%" y="-100%" width="300%" height="300%" color-interpolation-filters="sRGB"><feGaussianBlur stdDeviation="8"/></filter></defs><ellipse cx="48" cy="38" rx="260" ry="150" fill="#eadfbe" filter="url(#bl20)" opacity=".8"/><ellipse cx="978" cy="38" rx="220" ry="120" fill="#ece3c6" filter="url(#bl20)" opacity=".8"/><ellipse cx="505" cy="345" rx="330" ry="250" fill="url(#rg18)" /><polygon points="455,395 560,395 800,675 170,675" fill="#ffffff" filter="url(#bl20)"/><rect x="458" y="290" width="97" height="105" fill="#dfeaf0" filter="url(#bl19)"/><rect x="478" y="300" width="67" height="85" fill="#eef4f6" /><rect x="455" y="283" width="105" height="10" fill="#8a8a80" filter="url(#bl19)"/><g filter="url(#bl19)"><ellipse cx="459" cy="281" rx="3.7" ry="1.9" fill="#2a4aa0" opacity="0.82" transform="rotate(30 459 281)"/><ellipse cx="452" cy="270" rx="5.7" ry="1.7" fill="#2a4aa0" opacity="0.65" transform="rotate(30 452 270)"/><ellipse cx="445" cy="260" rx="5.0" ry="2.4" fill="#2a4aa0" opacity="0.88" transform="rotate(30 445 260)"/><ellipse cx="435" cy="246" rx="4.6" ry="2.4" fill="#7a4a2a" opacity="0.89" transform="rotate(30 435 246)"/><ellipse cx="422" cy="228" rx="6.0" ry="2.2" fill="#2a4aa0" opacity="0.71" transform="rotate(30 422 228)"/><ellipse cx="407" cy="207" rx="6.0" ry="3.0" fill="#3a8a3a" opacity="0.62" transform="rotate(30 407 207)"/><ellipse cx="395" cy="190" rx="6.4" ry="2.8" fill="#d06020" opacity="0.69" transform="rotate(30 395 190)"/><ellipse cx="378" cy="166" rx="11.5" ry="3.4" fill="#3a8a3a" opacity="0.81" transform="rotate(30 378 166)"/><ellipse cx="360" cy="141" rx="10.9" ry="4.1" fill="#555" opacity="0.78" transform="rotate(30 360 141)"/><ellipse cx="451" cy="274" rx="4.7" ry="2.0" fill="#7a4a2a" opacity="0.78" transform="rotate(29 451 274)"/><ellipse cx="442" cy="262" rx="5.7" ry="2.1" fill="#6a8a2a" opacity="0.62" transform="rotate(29 442 262)"/><ellipse cx="434" cy="252" rx="5.6" ry="2.0" fill="#2a4aa0" opacity="0.67" transform="rotate(29 434 252)"/><ellipse cx="424" cy="238" rx="7.0" ry="2.4" fill="#b04040" opacity="0.67" transform="rotate(29 424 238)"/><ellipse cx="412" cy="222" rx="6.3" ry="2.3" fill="#8a3a6a" opacity="0.84" transform="rotate(29 412 222)"/><ellipse cx="398" cy="203" rx="7.3" ry="3.6" fill="#3a8a3a" opacity="0.52" transform="rotate(29 398 203)"/><ellipse cx="383" cy="184" rx="7.5" ry="3.4" fill="#333" opacity="0.53" transform="rotate(29 383 184)"/><ellipse cx="367" cy="162" rx="9.9" ry="3.9" fill="#555" opacity="0.88" transform="rotate(29 367 162)"/><ellipse cx="313" cy="91" rx="14.2" ry="5.0" fill="#8a3a6a" opacity="0.63" transform="rotate(29 313 91)"/><ellipse cx="280" cy="48" rx="11.2" ry="4.3" fill="#3a8a3a" opacity="0.65" transform="rotate(29 280 48)"/><ellipse cx="455" cy="284" rx="3.5" ry="1.6" fill="#8a3a6a" opacity="0.52" transform="rotate(28 455 284)"/><ellipse cx="439" cy="264" rx="4.8" ry="1.8" fill="#6a8a2a" opacity="0.60" transform="rotate(28 439 264)"/><ellipse cx="427" cy="249" rx="5.0" ry="1.9" fill="#a06a30" opacity="0.61" transform="rotate(28 427 249)"/><ellipse cx="412" cy="231" rx="7.7" ry="2.4" fill="#d06020" opacity="0.84" transform="rotate(28 412 231)"/><ellipse cx="399" cy="215" rx="7.0" ry="2.5" fill="#4a4a4a" opacity="0.55" transform="rotate(28 399 215)"/><ellipse cx="382" cy="194" rx="9.1" ry="3.5" fill="#4a4a4a" opacity="0.89" transform="rotate(28 382 194)"/><ellipse cx="359" cy="166" rx="11.5" ry="4.2" fill="#3a8a3a" opacity="0.54" transform="rotate(28 359 166)"/><ellipse cx="333" cy="134" rx="14.3" ry="4.9" fill="#2a8ab0" opacity="0.57" transform="rotate(28 333 134)"/><ellipse cx="299" cy="92" rx="12.8" ry="6.1" fill="#555" opacity="0.88" transform="rotate(28 299 92)"/><ellipse cx="452" cy="285" rx="3.7" ry="1.7" fill="#6a8a2a" opacity="0.79" transform="rotate(27 452 285)"/><ellipse cx="445" cy="277" rx="5.3" ry="1.8" fill="#4a4a4a" opacity="0.88" transform="rotate(27 445 277)"/><ellipse cx="436" cy="267" rx="5.8" ry="1.8" fill="#c83020" opacity="0.53" transform="rotate(27 436 267)"/><ellipse cx="427" cy="256" rx="6.8" ry="2.6" fill="#c83020" opacity="0.73" transform="rotate(27 427 256)"/><ellipse cx="415" cy="242" rx="7.8" ry="2.2" fill="#a06a30" opacity="0.51" transform="rotate(27 415 242)"/><ellipse cx="377" cy="199" rx="7.2" ry="2.9" fill="#e0b020" opacity="0.68" transform="rotate(27 377 199)"/><ellipse cx="358" cy="178" rx="9.7" ry="4.2" fill="#7a4a2a" opacity="0.86" transform="rotate(27 358 178)"/><ellipse cx="312" cy="127" rx="9.6" ry="4.6" fill="#b04040" opacity="0.65" transform="rotate(27 312 127)"/><ellipse cx="289" cy="100" rx="15.4" ry="4.2" fill="#2a8ab0" opacity="0.73" transform="rotate(27 289 100)"/><ellipse cx="262" cy="70" rx="16.2" ry="5.6" fill="#2a8ab0" opacity="0.80" transform="rotate(27 262 70)"/><ellipse cx="448" cy="286" rx="3.9" ry="1.7" fill="#a06a30" opacity="0.69" transform="rotate(25 448 286)"/><ellipse cx="428" cy="264" rx="5.4" ry="2.1" fill="#8a3a6a" opacity="0.65" transform="rotate(25 428 264)"/><ellipse cx="417" cy="253" rx="4.8" ry="2.6" fill="#4a4a4a" opacity="0.51" transform="rotate(25 417 253)"/><ellipse cx="385" cy="220" rx="9.5" ry="2.9" fill="#2a8ab0" opacity="0.52" transform="rotate(25 385 220)"/><ellipse cx="368" cy="203" rx="9.5" ry="4.1" fill="#8a3a6a" opacity="0.60" transform="rotate(25 368 203)"/><ellipse cx="349" cy="182" rx="10.7" ry="2.8" fill="#a06a30" opacity="0.66" transform="rotate(25 349 182)"/><ellipse cx="300" cy="132" rx="14.6" ry="3.6" fill="#e0b020" opacity="0.47" transform="rotate(25 300 132)"/><ellipse cx="271" cy="101" rx="10.8" ry="4.9" fill="#d06020" opacity="0.82" transform="rotate(25 271 101)"/><ellipse cx="240" cy="69" rx="18.9" ry="5.9" fill="#6a8a2a" opacity="0.60" transform="rotate(25 240 69)"/><ellipse cx="464" cy="306" rx="3.0" ry="1.4" fill="#333" opacity="0.84" transform="rotate(24 464 306)"/><ellipse cx="447" cy="290" rx="3.5" ry="1.9" fill="#2a4aa0" opacity="0.89" transform="rotate(24 447 290)"/><ellipse cx="440" cy="283" rx="5.6" ry="2.0" fill="#a06a30" opacity="0.79" transform="rotate(24 440 283)"/><ellipse cx="429" cy="273" rx="4.5" ry="2.0" fill="#7a4a2a" opacity="0.90" transform="rotate(24 429 273)"/><ellipse cx="390" cy="236" rx="6.5" ry="2.5" fill="#3a8a3a" opacity="0.60" transform="rotate(24 390 236)"/><ellipse cx="370" cy="217" rx="8.8" ry="3.0" fill="#555" opacity="0.89" transform="rotate(24 370 217)"/><ellipse cx="354" cy="201" rx="9.6" ry="4.1" fill="#8a3a6a" opacity="0.52" transform="rotate(24 354 201)"/><ellipse cx="325" cy="175" rx="12.5" ry="4.3" fill="#e0b020" opacity="0.72" transform="rotate(24 325 175)"/><ellipse cx="263" cy="116" rx="13.8" ry="4.4" fill="#e0b020" opacity="0.55" transform="rotate(24 263 116)"/><ellipse cx="228" cy="82" rx="11.6" ry="5.1" fill="#d06020" opacity="0.54" transform="rotate(24 228 82)"/><ellipse cx="194" cy="50" rx="14.6" ry="4.9" fill="#8a3a6a" opacity="0.71" transform="rotate(24 194 50)"/><ellipse cx="451" cy="299" rx="4.6" ry="1.5" fill="#6a8a2a" opacity="0.80" transform="rotate(22 451 299)"/><ellipse cx="441" cy="290" rx="4.9" ry="1.8" fill="#e0b020" opacity="0.78" transform="rotate(22 441 290)"/><ellipse cx="433" cy="283" rx="5.6" ry="2.3" fill="#d06020" opacity="0.64" transform="rotate(22 433 283)"/><ellipse cx="421" cy="273" rx="6.5" ry="2.4" fill="#333" opacity="0.83" transform="rotate(22 421 273)"/><ellipse cx="406" cy="260" rx="6.4" ry="2.8" fill="#d06020" opacity="0.88" transform="rotate(22 406 260)"/><ellipse cx="393" cy="249" rx="5.2" ry="2.8" fill="#2a4aa0" opacity="0.62" transform="rotate(22 393 249)"/><ellipse cx="379" cy="238" rx="5.6" ry="2.9" fill="#3a8a3a" opacity="0.67" transform="rotate(22 379 238)"/><ellipse cx="356" cy="218" rx="9.6" ry="3.3" fill="#a06a30" opacity="0.49" transform="rotate(22 356 218)"/><ellipse cx="330" cy="195" rx="9.6" ry="4.3" fill="#b04040" opacity="0.57" transform="rotate(22 330 195)"/><ellipse cx="306" cy="174" rx="12.3" ry="5.1" fill="#2a8ab0" opacity="0.83" transform="rotate(22 306 174)"/><ellipse cx="267" cy="142" rx="11.2" ry="3.7" fill="#d06020" opacity="0.74" transform="rotate(22 267 142)"/><ellipse cx="236" cy="115" rx="12.2" ry="6.0" fill="#e0b020" opacity="0.73" transform="rotate(22 236 115)"/><ellipse cx="193" cy="78" rx="16.1" ry="7.6" fill="#2a4aa0" opacity="0.76" transform="rotate(22 193 78)"/><ellipse cx="456" cy="308" rx="3.4" ry="1.4" fill="#3a8a3a" opacity="0.48" transform="rotate(21 456 308)"/><ellipse cx="447" cy="301" rx="3.7" ry="1.6" fill="#333" opacity="0.82" transform="rotate(21 447 301)"/><ellipse cx="436" cy="293" rx="5.0" ry="1.7" fill="#2a8ab0" opacity="0.63" transform="rotate(21 436 293)"/><ellipse cx="423" cy="282" rx="5.6" ry="2.0" fill="#6a8a2a" opacity="0.51" transform="rotate(21 423 282)"/><ellipse cx="411" cy="273" rx="6.7" ry="1.8" fill="#4a4a4a" opacity="0.60" transform="rotate(21 411 273)"/><ellipse cx="393" cy="259" rx="5.6" ry="2.1" fill="#6a8a2a" opacity="0.58" transform="rotate(21 393 259)"/><ellipse cx="375" cy="246" rx="9.2" ry="3.0" fill="#555" opacity="0.87" transform="rotate(21 375 246)"/><ellipse cx="330" cy="211" rx="8.2" ry="3.6" fill="#3a8a3a" opacity="0.80" transform="rotate(21 330 211)"/><ellipse cx="269" cy="165" rx="13.6" ry="3.6" fill="#6a8a2a" opacity="0.63" transform="rotate(21 269 165)"/><ellipse cx="238" cy="141" rx="16.4" ry="5.1" fill="#a06a30" opacity="0.51" transform="rotate(21 238 141)"/><ellipse cx="199" cy="111" rx="13.5" ry="6.5" fill="#d06020" opacity="0.57" transform="rotate(21 199 111)"/><ellipse cx="155" cy="78" rx="17.9" ry="6.1" fill="#c83020" opacity="0.74" transform="rotate(21 155 78)"/><ellipse cx="456" cy="312" rx="3.5" ry="1.4" fill="#4a4a4a" opacity="0.65" transform="rotate(19 456 312)"/><ellipse cx="450" cy="308" rx="3.3" ry="1.5" fill="#2a4aa0" opacity="0.59" transform="rotate(19 450 308)"/><ellipse cx="440" cy="301" rx="3.8" ry="1.5" fill="#b04040" opacity="0.64" transform="rotate(19 440 301)"/><ellipse cx="429" cy="294" rx="4.5" ry="1.8" fill="#7a4a2a" opacity="0.67" transform="rotate(19 429 294)"/><ellipse cx="418" cy="286" rx="5.7" ry="2.1" fill="#4a4a4a" opacity="0.84" transform="rotate(19 418 286)"/><ellipse cx="405" cy="278" rx="5.1" ry="2.2" fill="#2a8ab0" opacity="0.64" transform="rotate(19 405 278)"/><ellipse cx="346" cy="238" rx="8.2" ry="3.2" fill="#4a4a4a" opacity="0.50" transform="rotate(19 346 238)"/><ellipse cx="320" cy="221" rx="10.4" ry="4.4" fill="#6a8a2a" opacity="0.77" transform="rotate(19 320 221)"/><ellipse cx="285" cy="197" rx="8.5" ry="4.8" fill="#7a4a2a" opacity="0.80" transform="rotate(19 285 197)"/><ellipse cx="242" cy="169" rx="13.9" ry="4.4" fill="#c83020" opacity="0.73" transform="rotate(19 242 169)"/><ellipse cx="201" cy="141" rx="16.8" ry="4.4" fill="#e0b020" opacity="0.69" transform="rotate(19 201 141)"/><ellipse cx="106" cy="77" rx="16.7" ry="8.3" fill="#3a8a3a" opacity="0.66" transform="rotate(19 106 77)"/><ellipse cx="50" cy="40" rx="26.9" ry="8.7" fill="#e0b020" opacity="0.47" transform="rotate(19 50 40)"/><ellipse cx="455" cy="316" rx="3.0" ry="1.4" fill="#8a3a6a" opacity="0.87" transform="rotate(17 455 316)"/><ellipse cx="449" cy="313" rx="3.6" ry="1.6" fill="#d06020" opacity="0.63" transform="rotate(17 449 313)"/><ellipse cx="441" cy="308" rx="4.7" ry="1.5" fill="#2a8ab0" opacity="0.89" transform="rotate(17 441 308)"/><ellipse cx="429" cy="301" rx="4.1" ry="1.7" fill="#4a4a4a" opacity="0.85" transform="rotate(17 429 301)"/><ellipse cx="416" cy="294" rx="5.4" ry="2.4" fill="#2a8ab0" opacity="0.64" transform="rotate(17 416 294)"/><ellipse cx="399" cy="283" rx="4.9" ry="2.2" fill="#3a8a3a" opacity="0.46" transform="rotate(17 399 283)"/><ellipse cx="360" cy="261" rx="9.4" ry="3.5" fill="#555" opacity="0.54" transform="rotate(17 360 261)"/><ellipse cx="337" cy="248" rx="8.3" ry="3.0" fill="#6a8a2a" opacity="0.62" transform="rotate(17 337 248)"/><ellipse cx="312" cy="234" rx="7.8" ry="2.8" fill="#e0b020" opacity="0.49" transform="rotate(17 312 234)"/><ellipse cx="275" cy="212" rx="11.4" ry="4.7" fill="#8a3a6a" opacity="0.61" transform="rotate(17 275 212)"/><ellipse cx="233" cy="188" rx="12.3" ry="3.7" fill="#2a8ab0" opacity="0.54" transform="rotate(17 233 188)"/><ellipse cx="190" cy="163" rx="13.1" ry="6.1" fill="#2a8ab0" opacity="0.46" transform="rotate(17 190 163)"/><ellipse cx="132" cy="129" rx="19.6" ry="4.8" fill="#7a4a2a" opacity="0.66" transform="rotate(17 132 129)"/><ellipse cx="86" cy="103" rx="15.5" ry="5.4" fill="#333" opacity="0.60" transform="rotate(17 86 103)"/><ellipse cx="455" cy="321" rx="3.2" ry="1.6" fill="#555" opacity="0.87" transform="rotate(14 455 321)"/><ellipse cx="447" cy="317" rx="4.0" ry="1.7" fill="#2a4aa0" opacity="0.46" transform="rotate(14 447 317)"/><ellipse cx="425" cy="306" rx="4.0" ry="1.9" fill="#7a4a2a" opacity="0.81" transform="rotate(14 425 306)"/><ellipse cx="410" cy="299" rx="5.9" ry="2.2" fill="#555" opacity="0.84" transform="rotate(14 410 299)"/><ellipse cx="393" cy="290" rx="6.3" ry="2.4" fill="#8a3a6a" opacity="0.79" transform="rotate(14 393 290)"/><ellipse cx="379" cy="284" rx="5.1" ry="2.6" fill="#555" opacity="0.52" transform="rotate(14 379 284)"/><ellipse cx="362" cy="276" rx="5.6" ry="3.0" fill="#3a8a3a" opacity="0.49" transform="rotate(14 362 276)"/><ellipse cx="314" cy="252" rx="9.3" ry="4.0" fill="#4a4a4a" opacity="0.50" transform="rotate(14 314 252)"/><ellipse cx="286" cy="239" rx="10.6" ry="3.7" fill="#6a8a2a" opacity="0.57" transform="rotate(14 286 239)"/><ellipse cx="257" cy="224" rx="9.7" ry="3.9" fill="#333" opacity="0.53" transform="rotate(14 257 224)"/><ellipse cx="222" cy="208" rx="11.0" ry="4.9" fill="#d06020" opacity="0.81" transform="rotate(14 222 208)"/><ellipse cx="166" cy="180" rx="11.6" ry="5.6" fill="#b04040" opacity="0.55" transform="rotate(14 166 180)"/><ellipse cx="50" cy="124" rx="24.6" ry="6.8" fill="#b04040" opacity="0.53" transform="rotate(14 50 124)"/><ellipse cx="455" cy="325" rx="2.8" ry="1.5" fill="#6a8a2a" opacity="0.73" transform="rotate(12 455 325)"/><ellipse cx="447" cy="322" rx="3.2" ry="1.4" fill="#e0b020" opacity="0.47" transform="rotate(12 447 322)"/><ellipse cx="436" cy="318" rx="4.7" ry="1.9" fill="#8a3a6a" opacity="0.76" transform="rotate(12 436 318)"/><ellipse cx="426" cy="314" rx="4.0" ry="2.0" fill="#a06a30" opacity="0.67" transform="rotate(12 426 314)"/><ellipse cx="412" cy="308" rx="5.5" ry="1.8" fill="#a06a30" opacity="0.49" transform="rotate(12 412 308)"/><ellipse cx="395" cy="302" rx="5.5" ry="2.1" fill="#e0b020" opacity="0.64" transform="rotate(12 395 302)"/><ellipse cx="356" cy="287" rx="6.1" ry="3.1" fill="#3a8a3a" opacity="0.87" transform="rotate(12 356 287)"/><ellipse cx="336" cy="279" rx="6.4" ry="2.5" fill="#333" opacity="0.85" transform="rotate(12 336 279)"/><ellipse cx="314" cy="270" rx="6.6" ry="3.5" fill="#d06020" opacity="0.81" transform="rotate(12 314 270)"/><ellipse cx="282" cy="257" rx="12.4" ry="4.3" fill="#c83020" opacity="0.52" transform="rotate(12 282 257)"/><ellipse cx="246" cy="243" rx="14.2" ry="3.5" fill="#2a8ab0" opacity="0.79" transform="rotate(12 246 243)"/><ellipse cx="199" cy="225" rx="11.8" ry="5.9" fill="#7a4a2a" opacity="0.89" transform="rotate(12 199 225)"/><ellipse cx="161" cy="210" rx="18.4" ry="5.2" fill="#6a8a2a" opacity="0.73" transform="rotate(12 161 210)"/><ellipse cx="115" cy="192" rx="19.3" ry="5.3" fill="#8a3a6a" opacity="0.73" transform="rotate(12 115 192)"/><ellipse cx="53" cy="167" rx="19.6" ry="5.3" fill="#a06a30" opacity="0.52" transform="rotate(12 53 167)"/><ellipse cx="451" cy="329" rx="3.9" ry="1.4" fill="#a06a30" opacity="0.83" transform="rotate(9 451 329)"/><ellipse cx="441" cy="326" rx="3.6" ry="1.6" fill="#2a8ab0" opacity="0.70" transform="rotate(9 441 326)"/><ellipse cx="432" cy="323" rx="4.1" ry="1.8" fill="#8a3a6a" opacity="0.63" transform="rotate(9 432 323)"/><ellipse cx="420" cy="320" rx="4.0" ry="1.6" fill="#2a8ab0" opacity="0.66" transform="rotate(9 420 320)"/><ellipse cx="406" cy="315" rx="6.0" ry="2.4" fill="#4a4a4a" opacity="0.66" transform="rotate(9 406 315)"/><ellipse cx="393" cy="311" rx="5.5" ry="1.9" fill="#2a8ab0" opacity="0.68" transform="rotate(9 393 311)"/><ellipse cx="379" cy="307" rx="5.1" ry="2.9" fill="#555" opacity="0.80" transform="rotate(9 379 307)"/><ellipse cx="363" cy="302" rx="6.8" ry="2.5" fill="#4a4a4a" opacity="0.51" transform="rotate(9 363 302)"/><ellipse cx="286" cy="279" rx="8.9" ry="4.2" fill="#c83020" opacity="0.60" transform="rotate(9 286 279)"/><ellipse cx="244" cy="267" rx="11.0" ry="3.8" fill="#2a8ab0" opacity="0.54" transform="rotate(9 244 267)"/><ellipse cx="203" cy="254" rx="11.5" ry="3.7" fill="#c83020" opacity="0.63" transform="rotate(9 203 254)"/><ellipse cx="160" cy="241" rx="13.0" ry="5.1" fill="#4a4a4a" opacity="0.80" transform="rotate(9 160 241)"/><ellipse cx="104" cy="224" rx="17.8" ry="5.7" fill="#b04040" opacity="0.65" transform="rotate(9 104 224)"/><ellipse cx="452" cy="334" rx="3.1" ry="1.5" fill="#b04040" opacity="0.63" transform="rotate(6 452 334)"/><ellipse cx="444" cy="332" rx="4.4" ry="1.6" fill="#555" opacity="0.60" transform="rotate(6 444 332)"/><ellipse cx="436" cy="331" rx="4.2" ry="1.9" fill="#e0b020" opacity="0.82" transform="rotate(6 436 331)"/><ellipse cx="424" cy="328" rx="5.4" ry="1.9" fill="#d06020" opacity="0.85" transform="rotate(6 424 328)"/><ellipse cx="409" cy="325" rx="4.4" ry="1.9" fill="#d06020" opacity="0.64" transform="rotate(6 409 325)"/><ellipse cx="391" cy="321" rx="4.7" ry="2.0" fill="#d06020" opacity="0.47" transform="rotate(6 391 321)"/><ellipse cx="372" cy="317" rx="5.8" ry="2.5" fill="#a06a30" opacity="0.55" transform="rotate(6 372 317)"/><ellipse cx="350" cy="313" rx="6.1" ry="3.0" fill="#2a8ab0" opacity="0.52" transform="rotate(6 350 313)"/><ellipse cx="287" cy="300" rx="9.0" ry="3.2" fill="#7a4a2a" opacity="0.48" transform="rotate(6 287 300)"/><ellipse cx="246" cy="291" rx="11.6" ry="4.4" fill="#333" opacity="0.87" transform="rotate(6 246 291)"/><ellipse cx="209" cy="284" rx="15.1" ry="3.6" fill="#a06a30" opacity="0.46" transform="rotate(6 209 284)"/><ellipse cx="126" cy="266" rx="12.7" ry="6.1" fill="#a06a30" opacity="0.74" transform="rotate(6 126 266)"/><ellipse cx="454" cy="339" rx="2.8" ry="1.6" fill="#6a8a2a" opacity="0.86" transform="rotate(4 454 339)"/><ellipse cx="445" cy="338" rx="3.2" ry="1.8" fill="#e0b020" opacity="0.55" transform="rotate(4 445 338)"/><ellipse cx="437" cy="337" rx="4.4" ry="1.8" fill="#b04040" opacity="0.57" transform="rotate(4 437 337)"/><ellipse cx="425" cy="336" rx="4.7" ry="1.9" fill="#a06a30" opacity="0.89" transform="rotate(4 425 336)"/><ellipse cx="409" cy="334" rx="5.8" ry="1.7" fill="#a06a30" opacity="0.46" transform="rotate(4 409 334)"/><ellipse cx="396" cy="332" rx="6.0" ry="2.6" fill="#6a8a2a" opacity="0.86" transform="rotate(4 396 332)"/><ellipse cx="379" cy="331" rx="6.3" ry="2.3" fill="#b04040" opacity="0.73" transform="rotate(4 379 331)"/><ellipse cx="358" cy="328" rx="8.4" ry="2.6" fill="#b04040" opacity="0.69" transform="rotate(4 358 328)"/><ellipse cx="340" cy="326" rx="9.2" ry="2.6" fill="#e0b020" opacity="0.81" transform="rotate(4 340 326)"/><ellipse cx="312" cy="323" rx="8.8" ry="2.8" fill="#7a4a2a" opacity="0.46" transform="rotate(4 312 323)"/><ellipse cx="275" cy="318" rx="9.0" ry="3.1" fill="#7a4a2a" opacity="0.46" transform="rotate(4 275 318)"/><ellipse cx="235" cy="314" rx="8.4" ry="3.4" fill="#7a4a2a" opacity="0.48" transform="rotate(4 235 314)"/><ellipse cx="135" cy="302" rx="18.6" ry="4.5" fill="#3a8a3a" opacity="0.54" transform="rotate(4 135 302)"/><ellipse cx="63" cy="294" rx="21.6" ry="7.4" fill="#2a4aa0" opacity="0.82" transform="rotate(4 63 294)"/><ellipse cx="463" cy="344" rx="2.6" ry="1.4" fill="#3a8a3a" opacity="0.58" transform="rotate(1 463 344)"/><ellipse cx="457" cy="344" rx="3.1" ry="1.5" fill="#7a4a2a" opacity="0.77" transform="rotate(1 457 344)"/><ellipse cx="449" cy="344" rx="4.1" ry="1.5" fill="#b04040" opacity="0.58" transform="rotate(1 449 344)"/><ellipse cx="439" cy="344" rx="3.2" ry="1.6" fill="#2a4aa0" opacity="0.61" transform="rotate(1 439 344)"/><ellipse cx="429" cy="343" rx="3.7" ry="2.0" fill="#2a4aa0" opacity="0.71" transform="rotate(1 429 343)"/><ellipse cx="417" cy="343" rx="4.7" ry="1.8" fill="#4a4a4a" opacity="0.89" transform="rotate(1 417 343)"/><ellipse cx="403" cy="343" rx="5.2" ry="2.3" fill="#c83020" opacity="0.89" transform="rotate(1 403 343)"/><ellipse cx="383" cy="342" rx="5.9" ry="2.4" fill="#c83020" opacity="0.58" transform="rotate(1 383 342)"/><ellipse cx="361" cy="342" rx="6.7" ry="2.2" fill="#d06020" opacity="0.80" transform="rotate(1 361 342)"/><ellipse cx="332" cy="341" rx="7.9" ry="2.5" fill="#555" opacity="0.61" transform="rotate(1 332 341)"/><ellipse cx="306" cy="340" rx="10.4" ry="2.7" fill="#d06020" opacity="0.46" transform="rotate(1 306 340)"/><ellipse cx="278" cy="340" rx="11.7" ry="3.7" fill="#8a3a6a" opacity="0.89" transform="rotate(1 278 340)"/><ellipse cx="234" cy="339" rx="8.9" ry="4.5" fill="#6a8a2a" opacity="0.79" transform="rotate(1 234 339)"/><ellipse cx="194" cy="338" rx="11.4" ry="4.0" fill="#b04040" opacity="0.65" transform="rotate(1 194 338)"/><ellipse cx="148" cy="337" rx="14.0" ry="5.9" fill="#e0b020" opacity="0.71" transform="rotate(1 148 337)"/><ellipse cx="92" cy="336" rx="19.9" ry="5.3" fill="#3a8a3a" opacity="0.57" transform="rotate(1 92 336)"/><ellipse cx="455" cy="348" rx="3.5" ry="1.6" fill="#6a8a2a" opacity="0.60" transform="rotate(196 455 348)"/><ellipse cx="449" cy="349" rx="3.3" ry="1.3" fill="#6a8a2a" opacity="0.90" transform="rotate(196 449 349)"/><ellipse cx="439" cy="350" rx="3.4" ry="1.4" fill="#c83020" opacity="0.81" transform="rotate(196 439 350)"/><ellipse cx="417" cy="351" rx="3.7" ry="2.1" fill="#8a3a6a" opacity="0.76" transform="rotate(196 417 351)"/><ellipse cx="402" cy="352" rx="5.1" ry="1.8" fill="#333" opacity="0.78" transform="rotate(196 402 352)"/><ellipse cx="388" cy="353" rx="6.7" ry="2.5" fill="#333" opacity="0.79" transform="rotate(196 388 353)"/><ellipse cx="371" cy="354" rx="7.0" ry="2.9" fill="#4a4a4a" opacity="0.74" transform="rotate(196 371 354)"/><ellipse cx="353" cy="356" rx="5.9" ry="2.3" fill="#8a3a6a" opacity="0.59" transform="rotate(196 353 356)"/><ellipse cx="333" cy="357" rx="7.4" ry="3.4" fill="#6a8a2a" opacity="0.77" transform="rotate(196 333 357)"/><ellipse cx="301" cy="359" rx="8.8" ry="2.6" fill="#b04040" opacity="0.63" transform="rotate(196 301 359)"/><ellipse cx="262" cy="362" rx="8.5" ry="4.2" fill="#4a4a4a" opacity="0.45" transform="rotate(196 262 362)"/><ellipse cx="215" cy="365" rx="9.3" ry="4.0" fill="#3a8a3a" opacity="0.52" transform="rotate(196 215 365)"/><ellipse cx="158" cy="369" rx="14.1" ry="4.2" fill="#333" opacity="0.66" transform="rotate(196 158 369)"/><ellipse cx="103" cy="373" rx="11.5" ry="6.9" fill="#555" opacity="0.68" transform="rotate(196 103 373)"/><ellipse cx="461" cy="352" rx="3.3" ry="1.3" fill="#4a4a4a" opacity="0.87" transform="rotate(193 461 352)"/><ellipse cx="454" cy="353" rx="3.5" ry="1.3" fill="#8a3a6a" opacity="0.63" transform="rotate(193 454 353)"/><ellipse cx="446" cy="355" rx="3.5" ry="1.6" fill="#555" opacity="0.71" transform="rotate(193 446 355)"/><ellipse cx="426" cy="358" rx="3.7" ry="2.1" fill="#2a4aa0" opacity="0.81" transform="rotate(193 426 358)"/><ellipse cx="414" cy="360" rx="4.9" ry="1.8" fill="#c83020" opacity="0.61" transform="rotate(193 414 360)"/><ellipse cx="397" cy="363" rx="6.2" ry="2.1" fill="#e0b020" opacity="0.79" transform="rotate(193 397 363)"/><ellipse cx="378" cy="366" rx="6.0" ry="2.7" fill="#3a8a3a" opacity="0.57" transform="rotate(193 378 366)"/><ellipse cx="360" cy="369" rx="6.5" ry="2.3" fill="#7a4a2a" opacity="0.81" transform="rotate(193 360 369)"/><ellipse cx="338" cy="372" rx="8.2" ry="2.7" fill="#2a8ab0" opacity="0.64" transform="rotate(193 338 372)"/><ellipse cx="309" cy="377" rx="8.0" ry="4.0" fill="#b04040" opacity="0.62" transform="rotate(193 309 377)"/><ellipse cx="277" cy="382" rx="8.9" ry="4.6" fill="#a06a30" opacity="0.82" transform="rotate(193 277 382)"/><ellipse cx="249" cy="387" rx="7.9" ry="5.0" fill="#d06020" opacity="0.58" transform="rotate(193 249 387)"/><ellipse cx="207" cy="393" rx="14.8" ry="3.9" fill="#2a8ab0" opacity="0.61" transform="rotate(193 207 393)"/><ellipse cx="149" cy="403" rx="16.8" ry="4.5" fill="#6a8a2a" opacity="0.72" transform="rotate(193 149 403)"/><ellipse cx="88" cy="413" rx="20.5" ry="7.2" fill="#b04040" opacity="0.58" transform="rotate(193 88 413)"/><ellipse cx="463" cy="356" rx="3.4" ry="1.4" fill="#2a4aa0" opacity="0.70" transform="rotate(190 463 356)"/><ellipse cx="448" cy="359" rx="3.3" ry="1.4" fill="#333" opacity="0.84" transform="rotate(190 448 359)"/><ellipse cx="438" cy="362" rx="3.9" ry="1.7" fill="#d06020" opacity="0.58" transform="rotate(190 438 362)"/><ellipse cx="428" cy="365" rx="5.3" ry="1.9" fill="#c83020" opacity="0.74" transform="rotate(190 428 365)"/><ellipse cx="418" cy="367" rx="4.9" ry="2.0" fill="#555" opacity="0.81" transform="rotate(190 418 367)"/><ellipse cx="404" cy="371" rx="5.8" ry="1.8" fill="#3a8a3a" opacity="0.77" transform="rotate(190 404 371)"/><ellipse cx="389" cy="374" rx="6.8" ry="2.2" fill="#2a8ab0" opacity="0.80" transform="rotate(190 389 374)"/><ellipse cx="367" cy="380" rx="5.9" ry="2.4" fill="#e0b020" opacity="0.70" transform="rotate(190 367 380)"/><ellipse cx="324" cy="391" rx="6.9" ry="3.2" fill="#2a4aa0" opacity="0.60" transform="rotate(190 324 391)"/><ellipse cx="298" cy="398" rx="9.6" ry="3.8" fill="#4a4a4a" opacity="0.90" transform="rotate(190 298 398)"/><ellipse cx="264" cy="406" rx="9.9" ry="4.1" fill="#8a3a6a" opacity="0.59" transform="rotate(190 264 406)"/><ellipse cx="232" cy="415" rx="14.3" ry="4.7" fill="#d06020" opacity="0.48" transform="rotate(190 232 415)"/><ellipse cx="187" cy="426" rx="12.4" ry="4.1" fill="#d06020" opacity="0.76" transform="rotate(190 187 426)"/><ellipse cx="131" cy="440" rx="12.8" ry="6.3" fill="#2a8ab0" opacity="0.73" transform="rotate(190 131 440)"/><ellipse cx="67" cy="457" rx="21.5" ry="6.4" fill="#2a4aa0" opacity="0.86" transform="rotate(190 67 457)"/><ellipse cx="453" cy="363" rx="3.9" ry="1.5" fill="#e0b020" opacity="0.84" transform="rotate(187 453 363)"/><ellipse cx="446" cy="365" rx="3.1" ry="1.6" fill="#333" opacity="0.87" transform="rotate(187 446 365)"/><ellipse cx="436" cy="369" rx="3.3" ry="1.5" fill="#4a4a4a" opacity="0.64" transform="rotate(187 436 369)"/><ellipse cx="410" cy="378" rx="5.0" ry="2.0" fill="#2a4aa0" opacity="0.49" transform="rotate(187 410 378)"/><ellipse cx="392" cy="384" rx="6.1" ry="2.2" fill="#7a4a2a" opacity="0.76" transform="rotate(187 392 384)"/><ellipse cx="370" cy="392" rx="5.3" ry="3.0" fill="#c83020" opacity="0.66" transform="rotate(187 370 392)"/><ellipse cx="348" cy="400" rx="7.3" ry="3.2" fill="#7a4a2a" opacity="0.61" transform="rotate(187 348 400)"/><ellipse cx="320" cy="409" rx="6.9" ry="3.7" fill="#e0b020" opacity="0.73" transform="rotate(187 320 409)"/><ellipse cx="291" cy="419" rx="11.9" ry="3.3" fill="#7a4a2a" opacity="0.77" transform="rotate(187 291 419)"/><ellipse cx="265" cy="428" rx="11.5" ry="4.7" fill="#2a4aa0" opacity="0.63" transform="rotate(187 265 428)"/><ellipse cx="225" cy="442" rx="15.2" ry="5.4" fill="#333" opacity="0.48" transform="rotate(187 225 442)"/><ellipse cx="178" cy="459" rx="13.4" ry="5.7" fill="#c83020" opacity="0.88" transform="rotate(187 178 459)"/><ellipse cx="114" cy="481" rx="13.2" ry="7.1" fill="#2a8ab0" opacity="0.62" transform="rotate(187 114 481)"/><ellipse cx="453" cy="368" rx="3.6" ry="1.4" fill="#7a4a2a" opacity="0.73" transform="rotate(185 453 368)"/><ellipse cx="444" cy="372" rx="4.1" ry="1.8" fill="#6a8a2a" opacity="0.89" transform="rotate(185 444 372)"/><ellipse cx="433" cy="377" rx="4.0" ry="1.7" fill="#3a8a3a" opacity="0.62" transform="rotate(185 433 377)"/><ellipse cx="421" cy="382" rx="5.6" ry="2.2" fill="#e0b020" opacity="0.76" transform="rotate(185 421 382)"/><ellipse cx="409" cy="387" rx="4.4" ry="2.5" fill="#4a4a4a" opacity="0.85" transform="rotate(185 409 387)"/><ellipse cx="371" cy="404" rx="6.9" ry="3.0" fill="#2a8ab0" opacity="0.61" transform="rotate(185 371 404)"/><ellipse cx="326" cy="424" rx="6.6" ry="3.1" fill="#6a8a2a" opacity="0.54" transform="rotate(185 326 424)"/><ellipse cx="294" cy="438" rx="11.3" ry="3.7" fill="#2a4aa0" opacity="0.69" transform="rotate(185 294 438)"/><ellipse cx="267" cy="450" rx="10.2" ry="4.2" fill="#e0b020" opacity="0.85" transform="rotate(185 267 450)"/><ellipse cx="230" cy="466" rx="12.9" ry="3.9" fill="#3a8a3a" opacity="0.49" transform="rotate(185 230 466)"/><ellipse cx="190" cy="484" rx="14.5" ry="4.8" fill="#4a4a4a" opacity="0.68" transform="rotate(185 190 484)"/><ellipse cx="151" cy="501" rx="19.7" ry="5.4" fill="#2a4aa0" opacity="0.62" transform="rotate(185 151 501)"/><ellipse cx="106" cy="520" rx="15.3" ry="4.8" fill="#e0b020" opacity="0.68" transform="rotate(185 106 520)"/><ellipse cx="57" cy="542" rx="24.5" ry="8.5" fill="#2a8ab0" opacity="0.71" transform="rotate(185 57 542)"/><ellipse cx="454" cy="372" rx="3.0" ry="1.4" fill="#c83020" opacity="0.62" transform="rotate(183 454 372)"/><ellipse cx="440" cy="380" rx="4.3" ry="1.6" fill="#2a4aa0" opacity="0.77" transform="rotate(183 440 380)"/><ellipse cx="431" cy="385" rx="4.0" ry="1.6" fill="#d06020" opacity="0.68" transform="rotate(183 431 385)"/><ellipse cx="417" cy="392" rx="4.8" ry="1.8" fill="#6a8a2a" opacity="0.55" transform="rotate(183 417 392)"/><ellipse cx="404" cy="399" rx="5.2" ry="2.6" fill="#7a4a2a" opacity="0.83" transform="rotate(183 404 399)"/><ellipse cx="386" cy="408" rx="7.0" ry="2.7" fill="#2a8ab0" opacity="0.48" transform="rotate(183 386 408)"/><ellipse cx="365" cy="420" rx="8.8" ry="3.0" fill="#e0b020" opacity="0.72" transform="rotate(183 365 420)"/><ellipse cx="340" cy="433" rx="8.1" ry="3.0" fill="#8a3a6a" opacity="0.51" transform="rotate(183 340 433)"/><ellipse cx="318" cy="444" rx="7.8" ry="2.9" fill="#d06020" opacity="0.85" transform="rotate(183 318 444)"/><ellipse cx="200" cy="507" rx="10.1" ry="4.1" fill="#555" opacity="0.60" transform="rotate(183 200 507)"/><ellipse cx="161" cy="528" rx="14.3" ry="5.3" fill="#6a8a2a" opacity="0.48" transform="rotate(183 161 528)"/><ellipse cx="105" cy="558" rx="14.1" ry="8.0" fill="#e0b020" opacity="0.64" transform="rotate(183 105 558)"/><ellipse cx="56" cy="584" rx="20.6" ry="6.6" fill="#4a4a4a" opacity="0.53" transform="rotate(183 56 584)"/><ellipse cx="451" cy="378" rx="3.2" ry="1.8" fill="#7a4a2a" opacity="0.73" transform="rotate(180 451 378)"/><ellipse cx="441" cy="385" rx="4.3" ry="1.9" fill="#2a4aa0" opacity="0.57" transform="rotate(180 441 385)"/><ellipse cx="432" cy="391" rx="5.6" ry="2.2" fill="#3a8a3a" opacity="0.49" transform="rotate(180 432 391)"/><ellipse cx="418" cy="400" rx="4.2" ry="2.3" fill="#e0b020" opacity="0.51" transform="rotate(180 418 400)"/><ellipse cx="404" cy="408" rx="5.8" ry="2.3" fill="#2a8ab0" opacity="0.45" transform="rotate(180 404 408)"/><ellipse cx="388" cy="418" rx="5.5" ry="2.5" fill="#8a3a6a" opacity="0.55" transform="rotate(180 388 418)"/><ellipse cx="372" cy="428" rx="6.0" ry="3.1" fill="#6a8a2a" opacity="0.53" transform="rotate(180 372 428)"/><ellipse cx="347" cy="444" rx="9.8" ry="3.5" fill="#4a4a4a" opacity="0.57" transform="rotate(180 347 444)"/><ellipse cx="321" cy="460" rx="10.3" ry="4.1" fill="#333" opacity="0.59" transform="rotate(180 321 460)"/><ellipse cx="288" cy="480" rx="10.8" ry="4.8" fill="#7a4a2a" opacity="0.68" transform="rotate(180 288 480)"/><ellipse cx="183" cy="546" rx="16.9" ry="5.9" fill="#b04040" opacity="0.45" transform="rotate(180 183 546)"/><ellipse cx="133" cy="578" rx="17.4" ry="5.2" fill="#6a8a2a" opacity="0.56" transform="rotate(180 133 578)"/><ellipse cx="61" cy="622" rx="23.6" ry="9.1" fill="#333" opacity="0.79" transform="rotate(180 61 622)"/><ellipse cx="451" cy="384" rx="3.9" ry="1.6" fill="#a06a30" opacity="0.81" transform="rotate(178 451 384)"/><ellipse cx="443" cy="389" rx="3.5" ry="1.8" fill="#c83020" opacity="0.50" transform="rotate(178 443 389)"/><ellipse cx="432" cy="398" rx="3.8" ry="1.6" fill="#6a8a2a" opacity="0.78" transform="rotate(178 432 398)"/><ellipse cx="418" cy="407" rx="5.7" ry="2.1" fill="#3a8a3a" opacity="0.77" transform="rotate(178 418 407)"/><ellipse cx="402" cy="419" rx="6.7" ry="2.0" fill="#2a4aa0" opacity="0.66" transform="rotate(178 402 419)"/><ellipse cx="383" cy="433" rx="5.6" ry="2.3" fill="#c83020" opacity="0.69" transform="rotate(178 383 433)"/><ellipse cx="366" cy="445" rx="8.3" ry="2.9" fill="#8a3a6a" opacity="0.52" transform="rotate(178 366 445)"/><ellipse cx="339" cy="464" rx="8.3" ry="3.3" fill="#b04040" opacity="0.72" transform="rotate(178 339 464)"/><ellipse cx="306" cy="488" rx="7.8" ry="3.7" fill="#8a3a6a" opacity="0.56" transform="rotate(178 306 488)"/><ellipse cx="275" cy="510" rx="14.7" ry="5.1" fill="#555" opacity="0.82" transform="rotate(178 275 510)"/><ellipse cx="247" cy="530" rx="13.0" ry="6.0" fill="#555" opacity="0.56" transform="rotate(178 247 530)"/><ellipse cx="203" cy="562" rx="13.7" ry="5.7" fill="#2a4aa0" opacity="0.60" transform="rotate(178 203 562)"/><ellipse cx="90" cy="643" rx="23.4" ry="8.9" fill="#7a4a2a" opacity="0.47" transform="rotate(178 90 643)"/><ellipse cx="455" cy="386" rx="3.5" ry="1.6" fill="#7a4a2a" opacity="0.73" transform="rotate(177 455 386)"/><ellipse cx="446" cy="392" rx="4.1" ry="2.0" fill="#e0b020" opacity="0.50" transform="rotate(177 446 392)"/><ellipse cx="439" cy="399" rx="3.7" ry="2.2" fill="#a06a30" opacity="0.86" transform="rotate(177 439 399)"/><ellipse cx="428" cy="408" rx="6.1" ry="2.0" fill="#a06a30" opacity="0.51" transform="rotate(177 428 408)"/><ellipse cx="416" cy="417" rx="5.1" ry="2.0" fill="#2a4aa0" opacity="0.78" transform="rotate(177 416 417)"/><ellipse cx="402" cy="429" rx="6.9" ry="2.2" fill="#8a3a6a" opacity="0.54" transform="rotate(177 402 429)"/><ellipse cx="386" cy="442" rx="7.2" ry="2.9" fill="#2a8ab0" opacity="0.82" transform="rotate(177 386 442)"/><ellipse cx="350" cy="471" rx="10.7" ry="3.1" fill="#555" opacity="0.67" transform="rotate(177 350 471)"/><ellipse cx="319" cy="496" rx="9.0" ry="4.4" fill="#c83020" opacity="0.70" transform="rotate(177 319 496)"/><ellipse cx="291" cy="518" rx="12.4" ry="4.4" fill="#b04040" opacity="0.65" transform="rotate(177 291 518)"/><ellipse cx="264" cy="540" rx="10.7" ry="5.9" fill="#6a8a2a" opacity="0.87" transform="rotate(177 264 540)"/><ellipse cx="222" cy="574" rx="11.6" ry="4.6" fill="#333" opacity="0.83" transform="rotate(177 222 574)"/><ellipse cx="176" cy="611" rx="19.0" ry="7.1" fill="#4a4a4a" opacity="0.90" transform="rotate(177 176 611)"/><ellipse cx="120" cy="657" rx="20.8" ry="8.0" fill="#8a3a6a" opacity="0.84" transform="rotate(177 120 657)"/><ellipse cx="457" cy="388" rx="4.5" ry="1.6" fill="#8a3a6a" opacity="0.83" transform="rotate(175 457 388)"/><ellipse cx="449" cy="396" rx="3.5" ry="1.9" fill="#6a8a2a" opacity="0.66" transform="rotate(175 449 396)"/><ellipse cx="441" cy="403" rx="4.4" ry="1.9" fill="#8a3a6a" opacity="0.74" transform="rotate(175 441 403)"/><ellipse cx="429" cy="413" rx="6.3" ry="2.0" fill="#e0b020" opacity="0.53" transform="rotate(175 429 413)"/><ellipse cx="419" cy="422" rx="5.8" ry="2.3" fill="#2a4aa0" opacity="0.82" transform="rotate(175 419 422)"/><ellipse cx="402" cy="438" rx="6.8" ry="2.3" fill="#555" opacity="0.54" transform="rotate(175 402 438)"/><ellipse cx="383" cy="455" rx="5.6" ry="2.3" fill="#333" opacity="0.85" transform="rotate(175 383 455)"/><ellipse cx="363" cy="473" rx="7.6" ry="3.4" fill="#8a3a6a" opacity="0.68" transform="rotate(175 363 473)"/><ellipse cx="338" cy="496" rx="9.0" ry="3.4" fill="#333" opacity="0.75" transform="rotate(175 338 496)"/><ellipse cx="318" cy="514" rx="8.1" ry="3.5" fill="#8a3a6a" opacity="0.62" transform="rotate(175 318 514)"/><ellipse cx="287" cy="542" rx="12.5" ry="5.4" fill="#8a3a6a" opacity="0.67" transform="rotate(175 287 542)"/><ellipse cx="250" cy="576" rx="17.7" ry="4.8" fill="#a06a30" opacity="0.79" transform="rotate(175 250 576)"/><ellipse cx="212" cy="610" rx="14.5" ry="4.6" fill="#e0b020" opacity="0.68" transform="rotate(175 212 610)"/><ellipse cx="156" cy="661" rx="20.4" ry="8.0" fill="#a06a30" opacity="0.85" transform="rotate(175 156 661)"/><ellipse cx="457" cy="393" rx="3.5" ry="1.5" fill="#d06020" opacity="0.70" transform="rotate(173 457 393)"/><ellipse cx="449" cy="401" rx="4.6" ry="1.9" fill="#6a8a2a" opacity="0.64" transform="rotate(173 449 401)"/><ellipse cx="441" cy="409" rx="5.1" ry="1.6" fill="#e0b020" opacity="0.63" transform="rotate(173 441 409)"/><ellipse cx="433" cy="417" rx="4.1" ry="1.8" fill="#4a4a4a" opacity="0.70" transform="rotate(173 433 417)"/><ellipse cx="421" cy="429" rx="5.8" ry="2.8" fill="#333" opacity="0.54" transform="rotate(173 421 429)"/><ellipse cx="410" cy="440" rx="6.4" ry="2.5" fill="#7a4a2a" opacity="0.50" transform="rotate(173 410 440)"/><ellipse cx="394" cy="455" rx="8.3" ry="2.9" fill="#4a4a4a" opacity="0.81" transform="rotate(173 394 455)"/><ellipse cx="375" cy="475" rx="8.4" ry="2.6" fill="#3a8a3a" opacity="0.61" transform="rotate(173 375 475)"/><ellipse cx="357" cy="493" rx="7.1" ry="4.1" fill="#333" opacity="0.48" transform="rotate(173 357 493)"/><ellipse cx="304" cy="545" rx="12.4" ry="3.9" fill="#7a4a2a" opacity="0.52" transform="rotate(173 304 545)"/><ellipse cx="277" cy="572" rx="9.4" ry="5.8" fill="#2a8ab0" opacity="0.59" transform="rotate(173 277 572)"/><ellipse cx="189" cy="659" rx="22.0" ry="5.6" fill="#8a3a6a" opacity="0.75" transform="rotate(173 189 659)"/><ellipse cx="548" cy="287" rx="4.7" ry="1.5" fill="#c83020" opacity="0.61" transform="rotate(-30 548 287)"/><ellipse cx="564" cy="265" rx="5.4" ry="2.4" fill="#8a3a6a" opacity="0.82" transform="rotate(-30 564 265)"/><ellipse cx="572" cy="253" rx="4.8" ry="2.0" fill="#3a8a3a" opacity="0.65" transform="rotate(-30 572 253)"/><ellipse cx="580" cy="242" rx="7.0" ry="2.1" fill="#c83020" opacity="0.49" transform="rotate(-30 580 242)"/><ellipse cx="594" cy="223" rx="5.6" ry="2.6" fill="#b04040" opacity="0.81" transform="rotate(-30 594 223)"/><ellipse cx="608" cy="205" rx="6.6" ry="2.9" fill="#d06020" opacity="0.88" transform="rotate(-30 608 205)"/><ellipse cx="652" cy="144" rx="11.0" ry="3.9" fill="#555" opacity="0.69" transform="rotate(-30 652 144)"/><ellipse cx="676" cy="112" rx="9.4" ry="5.1" fill="#d06020" opacity="0.68" transform="rotate(-30 676 112)"/><ellipse cx="700" cy="79" rx="15.4" ry="4.7" fill="#d06020" opacity="0.77" transform="rotate(-30 700 79)"/><ellipse cx="724" cy="46" rx="16.6" ry="6.1" fill="#4a4a4a" opacity="0.83" transform="rotate(-30 724 46)"/><ellipse cx="549" cy="290" rx="3.7" ry="1.5" fill="#c83020" opacity="0.82" transform="rotate(-29 549 290)"/><ellipse cx="561" cy="273" rx="4.3" ry="1.6" fill="#d06020" opacity="0.81" transform="rotate(-29 561 273)"/><ellipse cx="572" cy="259" rx="4.2" ry="2.3" fill="#2a8ab0" opacity="0.56" transform="rotate(-29 572 259)"/><ellipse cx="582" cy="247" rx="6.4" ry="2.1" fill="#2a4aa0" opacity="0.57" transform="rotate(-29 582 247)"/><ellipse cx="593" cy="233" rx="7.2" ry="2.5" fill="#333" opacity="0.52" transform="rotate(-29 593 233)"/><ellipse cx="622" cy="196" rx="7.1" ry="3.2" fill="#a06a30" opacity="0.56" transform="rotate(-29 622 196)"/><ellipse cx="643" cy="170" rx="8.7" ry="2.8" fill="#b04040" opacity="0.79" transform="rotate(-29 643 170)"/><ellipse cx="669" cy="136" rx="13.3" ry="4.4" fill="#6a8a2a" opacity="0.47" transform="rotate(-29 669 136)"/><ellipse cx="690" cy="109" rx="14.3" ry="4.0" fill="#555" opacity="0.79" transform="rotate(-29 690 109)"/><ellipse cx="723" cy="67" rx="13.3" ry="6.0" fill="#b04040" opacity="0.55" transform="rotate(-29 723 67)"/><ellipse cx="559" cy="280" rx="4.8" ry="1.9" fill="#d06020" opacity="0.76" transform="rotate(-27 559 280)"/><ellipse cx="580" cy="256" rx="5.8" ry="2.0" fill="#c83020" opacity="0.89" transform="rotate(-27 580 256)"/><ellipse cx="592" cy="242" rx="5.6" ry="2.0" fill="#555" opacity="0.61" transform="rotate(-27 592 242)"/><ellipse cx="607" cy="224" rx="5.9" ry="3.0" fill="#2a8ab0" opacity="0.75" transform="rotate(-27 607 224)"/><ellipse cx="621" cy="207" rx="8.0" ry="3.0" fill="#d06020" opacity="0.61" transform="rotate(-27 621 207)"/><ellipse cx="644" cy="181" rx="7.5" ry="3.7" fill="#555" opacity="0.73" transform="rotate(-27 644 181)"/><ellipse cx="665" cy="155" rx="12.9" ry="4.3" fill="#c83020" opacity="0.72" transform="rotate(-27 665 155)"/><ellipse cx="694" cy="121" rx="14.2" ry="3.7" fill="#e0b020" opacity="0.46" transform="rotate(-27 694 121)"/><ellipse cx="717" cy="93" rx="16.3" ry="4.5" fill="#2a4aa0" opacity="0.77" transform="rotate(-27 717 93)"/><ellipse cx="745" cy="61" rx="13.3" ry="5.5" fill="#555" opacity="0.58" transform="rotate(-27 745 61)"/><ellipse cx="552" cy="293" rx="4.4" ry="1.5" fill="#d06020" opacity="0.67" transform="rotate(-26 552 293)"/><ellipse cx="559" cy="286" rx="4.4" ry="1.5" fill="#2a4aa0" opacity="0.74" transform="rotate(-26 559 286)"/><ellipse cx="569" cy="275" rx="5.2" ry="1.8" fill="#3a8a3a" opacity="0.49" transform="rotate(-26 569 275)"/><ellipse cx="577" cy="266" rx="5.1" ry="1.8" fill="#555" opacity="0.53" transform="rotate(-26 577 266)"/><ellipse cx="590" cy="251" rx="7.3" ry="2.1" fill="#4a4a4a" opacity="0.77" transform="rotate(-26 590 251)"/><ellipse cx="605" cy="236" rx="6.4" ry="2.8" fill="#555" opacity="0.59" transform="rotate(-26 605 236)"/><ellipse cx="621" cy="218" rx="7.2" ry="3.4" fill="#3a8a3a" opacity="0.48" transform="rotate(-26 621 218)"/><ellipse cx="665" cy="170" rx="10.0" ry="3.2" fill="#e0b020" opacity="0.72" transform="rotate(-26 665 170)"/><ellipse cx="686" cy="147" rx="9.5" ry="3.5" fill="#d06020" opacity="0.89" transform="rotate(-26 686 147)"/><ellipse cx="708" cy="123" rx="11.9" ry="3.9" fill="#6a8a2a" opacity="0.62" transform="rotate(-26 708 123)"/><ellipse cx="742" cy="85" rx="16.8" ry="5.4" fill="#c83020" opacity="0.58" transform="rotate(-26 742 85)"/><ellipse cx="557" cy="293" rx="4.3" ry="1.7" fill="#a06a30" opacity="0.60" transform="rotate(-25 557 293)"/><ellipse cx="567" cy="282" rx="5.5" ry="2.2" fill="#8a3a6a" opacity="0.88" transform="rotate(-25 567 282)"/><ellipse cx="579" cy="271" rx="4.2" ry="2.3" fill="#333" opacity="0.75" transform="rotate(-25 579 271)"/><ellipse cx="590" cy="259" rx="5.5" ry="2.5" fill="#c83020" opacity="0.58" transform="rotate(-25 590 259)"/><ellipse cx="607" cy="243" rx="5.1" ry="2.3" fill="#d06020" opacity="0.78" transform="rotate(-25 607 243)"/><ellipse cx="620" cy="229" rx="7.6" ry="2.9" fill="#8a3a6a" opacity="0.61" transform="rotate(-25 620 229)"/><ellipse cx="638" cy="211" rx="7.2" ry="2.8" fill="#3a8a3a" opacity="0.70" transform="rotate(-25 638 211)"/><ellipse cx="663" cy="186" rx="8.3" ry="3.0" fill="#a06a30" opacity="0.75" transform="rotate(-25 663 186)"/><ellipse cx="685" cy="164" rx="10.4" ry="4.1" fill="#6a8a2a" opacity="0.50" transform="rotate(-25 685 164)"/><ellipse cx="715" cy="134" rx="9.3" ry="4.4" fill="#2a4aa0" opacity="0.81" transform="rotate(-25 715 134)"/><ellipse cx="563" cy="291" rx="5.1" ry="2.0" fill="#c83020" opacity="0.62" transform="rotate(-23 563 291)"/><ellipse cx="574" cy="282" rx="5.4" ry="1.6" fill="#e0b020" opacity="0.51" transform="rotate(-23 574 282)"/><ellipse cx="587" cy="270" rx="6.6" ry="2.4" fill="#7a4a2a" opacity="0.82" transform="rotate(-23 587 270)"/><ellipse cx="599" cy="259" rx="5.6" ry="2.5" fill="#7a4a2a" opacity="0.87" transform="rotate(-23 599 259)"/><ellipse cx="612" cy="247" rx="5.7" ry="2.6" fill="#b04040" opacity="0.89" transform="rotate(-23 612 247)"/><ellipse cx="632" cy="229" rx="7.6" ry="2.4" fill="#e0b020" opacity="0.53" transform="rotate(-23 632 229)"/><ellipse cx="650" cy="212" rx="9.4" ry="3.1" fill="#c83020" opacity="0.71" transform="rotate(-23 650 212)"/><ellipse cx="679" cy="186" rx="11.3" ry="3.4" fill="#2a8ab0" opacity="0.46" transform="rotate(-23 679 186)"/><ellipse cx="701" cy="165" rx="11.1" ry="5.0" fill="#4a4a4a" opacity="0.83" transform="rotate(-23 701 165)"/><ellipse cx="735" cy="134" rx="13.7" ry="5.0" fill="#b04040" opacity="0.66" transform="rotate(-23 735 134)"/><ellipse cx="778" cy="95" rx="13.9" ry="6.6" fill="#333" opacity="0.68" transform="rotate(-23 778 95)"/><ellipse cx="822" cy="54" rx="15.1" ry="5.1" fill="#333" opacity="0.47" transform="rotate(-23 822 54)"/><ellipse cx="553" cy="305" rx="3.5" ry="1.3" fill="#333" opacity="0.67" transform="rotate(-22 553 305)"/><ellipse cx="560" cy="300" rx="4.7" ry="1.7" fill="#d06020" opacity="0.52" transform="rotate(-22 560 300)"/><ellipse cx="568" cy="293" rx="4.0" ry="1.8" fill="#e0b020" opacity="0.61" transform="rotate(-22 568 293)"/><ellipse cx="578" cy="285" rx="4.1" ry="2.1" fill="#a06a30" opacity="0.86" transform="rotate(-22 578 285)"/><ellipse cx="588" cy="276" rx="5.2" ry="2.2" fill="#2a4aa0" opacity="0.61" transform="rotate(-22 588 276)"/><ellipse cx="618" cy="252" rx="6.3" ry="3.1" fill="#3a8a3a" opacity="0.61" transform="rotate(-22 618 252)"/><ellipse cx="635" cy="238" rx="5.9" ry="2.7" fill="#555" opacity="0.85" transform="rotate(-22 635 238)"/><ellipse cx="656" cy="220" rx="10.3" ry="3.8" fill="#555" opacity="0.52" transform="rotate(-22 656 220)"/><ellipse cx="684" cy="197" rx="10.8" ry="3.6" fill="#8a3a6a" opacity="0.71" transform="rotate(-22 684 197)"/><ellipse cx="708" cy="177" rx="8.4" ry="3.8" fill="#e0b020" opacity="0.56" transform="rotate(-22 708 177)"/><ellipse cx="743" cy="148" rx="15.9" ry="3.7" fill="#3a8a3a" opacity="0.71" transform="rotate(-22 743 148)"/><ellipse cx="775" cy="121" rx="14.7" ry="6.6" fill="#555" opacity="0.89" transform="rotate(-22 775 121)"/><ellipse cx="824" cy="82" rx="20.3" ry="7.2" fill="#555" opacity="0.85" transform="rotate(-22 824 82)"/><ellipse cx="868" cy="45" rx="13.3" ry="5.6" fill="#e0b020" opacity="0.56" transform="rotate(-22 868 45)"/><ellipse cx="559" cy="305" rx="3.3" ry="1.8" fill="#333" opacity="0.60" transform="rotate(-20 559 305)"/><ellipse cx="567" cy="299" rx="4.3" ry="2.0" fill="#d06020" opacity="0.60" transform="rotate(-20 567 299)"/><ellipse cx="576" cy="293" rx="5.4" ry="1.6" fill="#2a8ab0" opacity="0.63" transform="rotate(-20 576 293)"/><ellipse cx="586" cy="285" rx="4.1" ry="2.0" fill="#7a4a2a" opacity="0.49" transform="rotate(-20 586 285)"/><ellipse cx="601" cy="274" rx="7.1" ry="2.2" fill="#2a8ab0" opacity="0.84" transform="rotate(-20 601 274)"/><ellipse cx="615" cy="264" rx="6.9" ry="2.3" fill="#8a3a6a" opacity="0.73" transform="rotate(-20 615 264)"/><ellipse cx="631" cy="252" rx="5.7" ry="2.4" fill="#c83020" opacity="0.69" transform="rotate(-20 631 252)"/><ellipse cx="650" cy="238" rx="7.4" ry="2.9" fill="#d06020" opacity="0.71" transform="rotate(-20 650 238)"/><ellipse cx="675" cy="220" rx="9.5" ry="3.2" fill="#6a8a2a" opacity="0.73" transform="rotate(-20 675 220)"/><ellipse cx="732" cy="177" rx="10.2" ry="4.5" fill="#e0b020" opacity="0.51" transform="rotate(-20 732 177)"/><ellipse cx="768" cy="151" rx="14.4" ry="5.7" fill="#555" opacity="0.52" transform="rotate(-20 768 151)"/><ellipse cx="808" cy="121" rx="19.1" ry="6.9" fill="#333" opacity="0.51" transform="rotate(-20 808 121)"/><ellipse cx="857" cy="86" rx="17.7" ry="5.3" fill="#333" opacity="0.61" transform="rotate(-20 857 86)"/><ellipse cx="904" cy="51" rx="22.0" ry="8.8" fill="#c83020" opacity="0.69" transform="rotate(-20 904 51)"/><ellipse cx="560" cy="310" rx="3.4" ry="1.8" fill="#4a4a4a" opacity="0.63" transform="rotate(-18 560 310)"/><ellipse cx="570" cy="303" rx="3.4" ry="1.9" fill="#7a4a2a" opacity="0.48" transform="rotate(-18 570 303)"/><ellipse cx="591" cy="289" rx="5.5" ry="2.4" fill="#7a4a2a" opacity="0.56" transform="rotate(-18 591 289)"/><ellipse cx="604" cy="281" rx="5.0" ry="2.0" fill="#4a4a4a" opacity="0.64" transform="rotate(-18 604 281)"/><ellipse cx="645" cy="254" rx="6.6" ry="3.3" fill="#b04040" opacity="0.59" transform="rotate(-18 645 254)"/><ellipse cx="662" cy="243" rx="9.8" ry="2.8" fill="#555" opacity="0.76" transform="rotate(-18 662 243)"/><ellipse cx="687" cy="227" rx="9.7" ry="4.2" fill="#3a8a3a" opacity="0.83" transform="rotate(-18 687 227)"/><ellipse cx="739" cy="194" rx="8.5" ry="3.5" fill="#7a4a2a" opacity="0.51" transform="rotate(-18 739 194)"/><ellipse cx="776" cy="169" rx="12.0" ry="5.6" fill="#2a8ab0" opacity="0.76" transform="rotate(-18 776 169)"/><ellipse cx="816" cy="143" rx="18.3" ry="6.2" fill="#555" opacity="0.89" transform="rotate(-18 816 143)"/><ellipse cx="859" cy="115" rx="19.5" ry="6.9" fill="#7a4a2a" opacity="0.51" transform="rotate(-18 859 115)"/><ellipse cx="918" cy="77" rx="21.4" ry="8.0" fill="#7a4a2a" opacity="0.90" transform="rotate(-18 918 77)"/><ellipse cx="549" cy="320" rx="3.3" ry="1.3" fill="#8a3a6a" opacity="0.45" transform="rotate(-16 549 320)"/><ellipse cx="557" cy="316" rx="3.8" ry="1.5" fill="#2a4aa0" opacity="0.69" transform="rotate(-16 557 316)"/><ellipse cx="587" cy="299" rx="3.9" ry="2.2" fill="#555" opacity="0.57" transform="rotate(-16 587 299)"/><ellipse cx="615" cy="283" rx="6.7" ry="2.3" fill="#555" opacity="0.69" transform="rotate(-16 615 283)"/><ellipse cx="645" cy="267" rx="7.6" ry="3.4" fill="#e0b020" opacity="0.76" transform="rotate(-16 645 267)"/><ellipse cx="673" cy="251" rx="9.8" ry="3.5" fill="#2a4aa0" opacity="0.83" transform="rotate(-16 673 251)"/><ellipse cx="705" cy="233" rx="7.4" ry="4.1" fill="#555" opacity="0.76" transform="rotate(-16 705 233)"/><ellipse cx="740" cy="214" rx="10.9" ry="4.4" fill="#2a8ab0" opacity="0.79" transform="rotate(-16 740 214)"/><ellipse cx="778" cy="193" rx="13.4" ry="6.0" fill="#3a8a3a" opacity="0.82" transform="rotate(-16 778 193)"/><ellipse cx="829" cy="164" rx="13.6" ry="4.3" fill="#a06a30" opacity="0.57" transform="rotate(-16 829 164)"/><ellipse cx="889" cy="130" rx="13.0" ry="7.5" fill="#d06020" opacity="0.55" transform="rotate(-16 889 130)"/><ellipse cx="944" cy="100" rx="24.2" ry="7.2" fill="#6a8a2a" opacity="0.61" transform="rotate(-16 944 100)"/><ellipse cx="562" cy="318" rx="3.1" ry="1.7" fill="#555" opacity="0.69" transform="rotate(-14 562 318)"/><ellipse cx="572" cy="313" rx="3.7" ry="1.5" fill="#b04040" opacity="0.75" transform="rotate(-14 572 313)"/><ellipse cx="585" cy="307" rx="5.4" ry="2.0" fill="#7a4a2a" opacity="0.59" transform="rotate(-14 585 307)"/><ellipse cx="601" cy="300" rx="5.1" ry="2.0" fill="#6a8a2a" opacity="0.56" transform="rotate(-14 601 300)"/><ellipse cx="615" cy="293" rx="6.7" ry="2.3" fill="#2a8ab0" opacity="0.75" transform="rotate(-14 615 293)"/><ellipse cx="631" cy="286" rx="6.3" ry="2.1" fill="#d06020" opacity="0.67" transform="rotate(-14 631 286)"/><ellipse cx="653" cy="275" rx="6.1" ry="3.1" fill="#555" opacity="0.67" transform="rotate(-14 653 275)"/><ellipse cx="678" cy="264" rx="8.5" ry="3.7" fill="#e0b020" opacity="0.46" transform="rotate(-14 678 264)"/><ellipse cx="736" cy="237" rx="9.3" ry="3.9" fill="#a06a30" opacity="0.74" transform="rotate(-14 736 237)"/><ellipse cx="813" cy="200" rx="12.8" ry="4.0" fill="#4a4a4a" opacity="0.58" transform="rotate(-14 813 200)"/><ellipse cx="866" cy="175" rx="18.6" ry="5.5" fill="#8a3a6a" opacity="0.83" transform="rotate(-14 866 175)"/><ellipse cx="928" cy="147" rx="23.3" ry="8.1" fill="#333" opacity="0.62" transform="rotate(-14 928 147)"/><ellipse cx="556" cy="326" rx="3.8" ry="1.3" fill="#333" opacity="0.66" transform="rotate(-11 556 326)"/><ellipse cx="566" cy="322" rx="3.7" ry="1.6" fill="#2a4aa0" opacity="0.65" transform="rotate(-11 566 322)"/><ellipse cx="575" cy="318" rx="4.8" ry="1.8" fill="#6a8a2a" opacity="0.54" transform="rotate(-11 575 318)"/><ellipse cx="589" cy="313" rx="4.3" ry="1.8" fill="#8a3a6a" opacity="0.80" transform="rotate(-11 589 313)"/><ellipse cx="601" cy="309" rx="4.2" ry="2.3" fill="#2a4aa0" opacity="0.67" transform="rotate(-11 601 309)"/><ellipse cx="614" cy="304" rx="5.5" ry="2.6" fill="#3a8a3a" opacity="0.77" transform="rotate(-11 614 304)"/><ellipse cx="627" cy="299" rx="6.8" ry="2.4" fill="#333" opacity="0.51" transform="rotate(-11 627 299)"/><ellipse cx="642" cy="293" rx="7.2" ry="2.5" fill="#3a8a3a" opacity="0.68" transform="rotate(-11 642 293)"/><ellipse cx="670" cy="282" rx="6.9" ry="2.7" fill="#555" opacity="0.62" transform="rotate(-11 670 282)"/><ellipse cx="693" cy="273" rx="8.2" ry="4.0" fill="#d06020" opacity="0.47" transform="rotate(-11 693 273)"/><ellipse cx="729" cy="260" rx="11.7" ry="4.5" fill="#e0b020" opacity="0.59" transform="rotate(-11 729 260)"/><ellipse cx="760" cy="248" rx="12.2" ry="5.2" fill="#d06020" opacity="0.67" transform="rotate(-11 760 248)"/><ellipse cx="798" cy="234" rx="14.9" ry="4.1" fill="#6a8a2a" opacity="0.70" transform="rotate(-11 798 234)"/><ellipse cx="840" cy="218" rx="14.6" ry="5.2" fill="#333" opacity="0.82" transform="rotate(-11 840 218)"/><ellipse cx="886" cy="200" rx="15.6" ry="5.1" fill="#3a8a3a" opacity="0.81" transform="rotate(-11 886 200)"/><ellipse cx="946" cy="178" rx="23.1" ry="6.7" fill="#3a8a3a" opacity="0.48" transform="rotate(-11 946 178)"/><ellipse cx="548" cy="332" rx="3.5" ry="1.2" fill="#333" opacity="0.67" transform="rotate(-9 548 332)"/><ellipse cx="556" cy="330" rx="3.7" ry="1.3" fill="#3a8a3a" opacity="0.75" transform="rotate(-9 556 330)"/><ellipse cx="563" cy="328" rx="3.3" ry="1.7" fill="#c83020" opacity="0.80" transform="rotate(-9 563 328)"/><ellipse cx="573" cy="325" rx="4.0" ry="1.5" fill="#2a4aa0" opacity="0.88" transform="rotate(-9 573 325)"/><ellipse cx="600" cy="317" rx="4.2" ry="1.8" fill="#2a8ab0" opacity="0.58" transform="rotate(-9 600 317)"/><ellipse cx="616" cy="313" rx="5.2" ry="2.3" fill="#c83020" opacity="0.59" transform="rotate(-9 616 313)"/><ellipse cx="634" cy="308" rx="5.4" ry="3.0" fill="#d06020" opacity="0.89" transform="rotate(-9 634 308)"/><ellipse cx="649" cy="303" rx="6.5" ry="2.9" fill="#3a8a3a" opacity="0.74" transform="rotate(-9 649 303)"/><ellipse cx="669" cy="297" rx="6.3" ry="2.5" fill="#555" opacity="0.76" transform="rotate(-9 669 297)"/><ellipse cx="700" cy="289" rx="7.0" ry="4.1" fill="#d06020" opacity="0.87" transform="rotate(-9 700 289)"/><ellipse cx="758" cy="272" rx="9.6" ry="3.8" fill="#333" opacity="0.69" transform="rotate(-9 758 272)"/><ellipse cx="791" cy="262" rx="10.6" ry="5.5" fill="#b04040" opacity="0.86" transform="rotate(-9 791 262)"/><ellipse cx="888" cy="234" rx="11.7" ry="5.4" fill="#2a8ab0" opacity="0.67" transform="rotate(-9 888 234)"/><ellipse cx="946" cy="217" rx="13.9" ry="7.9" fill="#4a4a4a" opacity="0.48" transform="rotate(-9 946 217)"/><ellipse cx="555" cy="335" rx="3.7" ry="1.5" fill="#2a8ab0" opacity="0.47" transform="rotate(-6 555 335)"/><ellipse cx="564" cy="333" rx="3.5" ry="1.6" fill="#8a3a6a" opacity="0.71" transform="rotate(-6 564 333)"/><ellipse cx="573" cy="331" rx="4.2" ry="1.5" fill="#c83020" opacity="0.75" transform="rotate(-6 573 331)"/><ellipse cx="581" cy="330" rx="4.5" ry="2.0" fill="#e0b020" opacity="0.52" transform="rotate(-6 581 330)"/><ellipse cx="595" cy="327" rx="4.0" ry="1.9" fill="#a06a30" opacity="0.69" transform="rotate(-6 595 327)"/><ellipse cx="608" cy="324" rx="5.4" ry="1.7" fill="#e0b020" opacity="0.62" transform="rotate(-6 608 324)"/><ellipse cx="623" cy="321" rx="5.0" ry="2.0" fill="#3a8a3a" opacity="0.78" transform="rotate(-6 623 321)"/><ellipse cx="640" cy="318" rx="5.2" ry="2.1" fill="#7a4a2a" opacity="0.67" transform="rotate(-6 640 318)"/><ellipse cx="662" cy="313" rx="7.9" ry="2.5" fill="#4a4a4a" opacity="0.53" transform="rotate(-6 662 313)"/><ellipse cx="718" cy="302" rx="9.7" ry="3.1" fill="#333" opacity="0.80" transform="rotate(-6 718 302)"/><ellipse cx="757" cy="294" rx="12.6" ry="3.2" fill="#555" opacity="0.89" transform="rotate(-6 757 294)"/><ellipse cx="800" cy="286" rx="13.6" ry="5.4" fill="#555" opacity="0.49" transform="rotate(-6 800 286)"/><ellipse cx="849" cy="276" rx="11.6" ry="4.8" fill="#8a3a6a" opacity="0.80" transform="rotate(-6 849 276)"/><ellipse cx="912" cy="263" rx="13.1" ry="6.2" fill="#c83020" opacity="0.52" transform="rotate(-6 912 263)"/><ellipse cx="965" cy="253" rx="15.1" ry="5.8" fill="#555" opacity="0.77" transform="rotate(-6 965 253)"/><ellipse cx="560" cy="339" rx="2.9" ry="1.5" fill="#555" opacity="0.86" transform="rotate(-3 560 339)"/><ellipse cx="569" cy="338" rx="3.4" ry="1.7" fill="#b04040" opacity="0.61" transform="rotate(-3 569 338)"/><ellipse cx="581" cy="337" rx="5.0" ry="1.8" fill="#4a4a4a" opacity="0.88" transform="rotate(-3 581 337)"/><ellipse cx="594" cy="335" rx="4.0" ry="2.1" fill="#e0b020" opacity="0.86" transform="rotate(-3 594 335)"/><ellipse cx="611" cy="333" rx="6.1" ry="2.2" fill="#8a3a6a" opacity="0.62" transform="rotate(-3 611 333)"/><ellipse cx="648" cy="329" rx="8.2" ry="2.9" fill="#e0b020" opacity="0.79" transform="rotate(-3 648 329)"/><ellipse cx="699" cy="323" rx="6.5" ry="3.5" fill="#8a3a6a" opacity="0.81" transform="rotate(-3 699 323)"/><ellipse cx="737" cy="319" rx="11.6" ry="3.6" fill="#2a4aa0" opacity="0.55" transform="rotate(-3 737 319)"/><ellipse cx="779" cy="314" rx="12.4" ry="5.2" fill="#8a3a6a" opacity="0.81" transform="rotate(-3 779 314)"/><ellipse cx="823" cy="310" rx="9.4" ry="3.9" fill="#4a4a4a" opacity="0.66" transform="rotate(-3 823 310)"/><ellipse cx="868" cy="305" rx="11.7" ry="5.6" fill="#2a4aa0" opacity="0.61" transform="rotate(-3 868 305)"/><ellipse cx="555" cy="344" rx="3.0" ry="1.3" fill="#d06020" opacity="0.47" transform="rotate(-1 555 344)"/><ellipse cx="562" cy="344" rx="3.2" ry="1.7" fill="#555" opacity="0.53" transform="rotate(-1 562 344)"/><ellipse cx="583" cy="343" rx="5.2" ry="1.6" fill="#b04040" opacity="0.89" transform="rotate(-1 583 343)"/><ellipse cx="593" cy="343" rx="5.4" ry="1.6" fill="#3a8a3a" opacity="0.65" transform="rotate(-1 593 343)"/><ellipse cx="605" cy="343" rx="4.8" ry="1.7" fill="#a06a30" opacity="0.78" transform="rotate(-1 605 343)"/><ellipse cx="622" cy="342" rx="4.7" ry="2.5" fill="#e0b020" opacity="0.75" transform="rotate(-1 622 342)"/><ellipse cx="642" cy="342" rx="6.3" ry="3.0" fill="#555" opacity="0.59" transform="rotate(-1 642 342)"/><ellipse cx="666" cy="341" rx="8.9" ry="3.2" fill="#7a4a2a" opacity="0.86" transform="rotate(-1 666 341)"/><ellipse cx="691" cy="341" rx="10.2" ry="2.5" fill="#b04040" opacity="0.85" transform="rotate(-1 691 341)"/><ellipse cx="718" cy="340" rx="8.2" ry="3.5" fill="#c83020" opacity="0.78" transform="rotate(-1 718 340)"/><ellipse cx="745" cy="340" rx="9.1" ry="3.2" fill="#e0b020" opacity="0.52" transform="rotate(-1 745 340)"/><ellipse cx="945" cy="335" rx="21.3" ry="5.9" fill="#b04040" opacity="0.71" transform="rotate(-1 945 335)"/><ellipse cx="552" cy="348" rx="2.8" ry="1.4" fill="#7a4a2a" opacity="0.52" transform="rotate(2 552 348)"/><ellipse cx="559" cy="349" rx="3.2" ry="1.3" fill="#e0b020" opacity="0.89" transform="rotate(2 559 349)"/><ellipse cx="567" cy="349" rx="4.0" ry="1.4" fill="#2a8ab0" opacity="0.54" transform="rotate(2 567 349)"/><ellipse cx="576" cy="350" rx="3.4" ry="1.5" fill="#8a3a6a" opacity="0.59" transform="rotate(2 576 350)"/><ellipse cx="588" cy="351" rx="3.7" ry="2.1" fill="#333" opacity="0.65" transform="rotate(2 588 351)"/><ellipse cx="602" cy="352" rx="5.6" ry="1.9" fill="#c83020" opacity="0.58" transform="rotate(2 602 352)"/><ellipse cx="619" cy="353" rx="6.5" ry="2.2" fill="#2a4aa0" opacity="0.57" transform="rotate(2 619 353)"/><ellipse cx="641" cy="354" rx="6.5" ry="2.3" fill="#d06020" opacity="0.50" transform="rotate(2 641 354)"/><ellipse cx="678" cy="357" rx="6.7" ry="2.4" fill="#a06a30" opacity="0.49" transform="rotate(2 678 357)"/><ellipse cx="711" cy="359" rx="10.5" ry="3.8" fill="#e0b020" opacity="0.52" transform="rotate(2 711 359)"/><ellipse cx="885" cy="371" rx="13.8" ry="4.4" fill="#8a3a6a" opacity="0.48" transform="rotate(2 885 371)"/><ellipse cx="948" cy="375" rx="14.8" ry="6.3" fill="#3a8a3a" opacity="0.71" transform="rotate(2 948 375)"/><ellipse cx="559" cy="353" rx="3.9" ry="1.3" fill="#d06020" opacity="0.83" transform="rotate(5 559 353)"/><ellipse cx="566" cy="355" rx="3.4" ry="1.3" fill="#b04040" opacity="0.87" transform="rotate(5 566 355)"/><ellipse cx="574" cy="356" rx="4.3" ry="1.9" fill="#8a3a6a" opacity="0.73" transform="rotate(5 574 356)"/><ellipse cx="594" cy="359" rx="4.5" ry="2.0" fill="#4a4a4a" opacity="0.49" transform="rotate(5 594 359)"/><ellipse cx="609" cy="361" rx="4.4" ry="2.5" fill="#3a8a3a" opacity="0.45" transform="rotate(5 609 361)"/><ellipse cx="623" cy="363" rx="5.2" ry="1.9" fill="#2a8ab0" opacity="0.72" transform="rotate(5 623 363)"/><ellipse cx="637" cy="366" rx="6.4" ry="2.5" fill="#2a8ab0" opacity="0.55" transform="rotate(5 637 366)"/><ellipse cx="656" cy="369" rx="6.4" ry="2.8" fill="#3a8a3a" opacity="0.70" transform="rotate(5 656 369)"/><ellipse cx="678" cy="372" rx="9.7" ry="3.1" fill="#6a8a2a" opacity="0.46" transform="rotate(5 678 372)"/><ellipse cx="699" cy="375" rx="8.6" ry="3.2" fill="#2a4aa0" opacity="0.88" transform="rotate(5 699 375)"/><ellipse cx="724" cy="379" rx="7.5" ry="3.4" fill="#333" opacity="0.63" transform="rotate(5 724 379)"/><ellipse cx="848" cy="399" rx="11.5" ry="5.6" fill="#2a4aa0" opacity="0.63" transform="rotate(5 848 399)"/><ellipse cx="894" cy="406" rx="17.7" ry="5.9" fill="#2a8ab0" opacity="0.80" transform="rotate(5 894 406)"/><ellipse cx="561" cy="359" rx="4.1" ry="1.6" fill="#6a8a2a" opacity="0.46" transform="rotate(8 561 359)"/><ellipse cx="570" cy="361" rx="4.4" ry="1.7" fill="#6a8a2a" opacity="0.73" transform="rotate(8 570 361)"/><ellipse cx="579" cy="363" rx="3.7" ry="1.8" fill="#555" opacity="0.59" transform="rotate(8 579 363)"/><ellipse cx="589" cy="366" rx="4.3" ry="2.1" fill="#4a4a4a" opacity="0.77" transform="rotate(8 589 366)"/><ellipse cx="602" cy="369" rx="5.9" ry="1.9" fill="#2a8ab0" opacity="0.67" transform="rotate(8 602 369)"/><ellipse cx="616" cy="372" rx="5.1" ry="2.6" fill="#c83020" opacity="0.83" transform="rotate(8 616 372)"/><ellipse cx="654" cy="382" rx="8.5" ry="3.3" fill="#8a3a6a" opacity="0.80" transform="rotate(8 654 382)"/><ellipse cx="673" cy="386" rx="9.3" ry="2.9" fill="#c83020" opacity="0.46" transform="rotate(8 673 386)"/><ellipse cx="701" cy="393" rx="8.2" ry="2.6" fill="#b04040" opacity="0.89" transform="rotate(8 701 393)"/><ellipse cx="737" cy="402" rx="8.5" ry="4.0" fill="#2a4aa0" opacity="0.84" transform="rotate(8 737 402)"/><ellipse cx="776" cy="412" rx="11.3" ry="5.0" fill="#3a8a3a" opacity="0.45" transform="rotate(8 776 412)"/><ellipse cx="816" cy="422" rx="15.8" ry="3.9" fill="#c83020" opacity="0.88" transform="rotate(8 816 422)"/><ellipse cx="867" cy="434" rx="18.5" ry="6.1" fill="#2a8ab0" opacity="0.79" transform="rotate(8 867 434)"/><ellipse cx="932" cy="450" rx="20.9" ry="5.3" fill="#d06020" opacity="0.75" transform="rotate(8 932 450)"/><ellipse cx="557" cy="362" rx="3.7" ry="1.4" fill="#c83020" opacity="0.50" transform="rotate(10 557 362)"/><ellipse cx="565" cy="365" rx="4.0" ry="1.7" fill="#3a8a3a" opacity="0.45" transform="rotate(10 565 365)"/><ellipse cx="575" cy="369" rx="3.7" ry="1.9" fill="#d06020" opacity="0.47" transform="rotate(10 575 369)"/><ellipse cx="620" cy="384" rx="4.9" ry="1.9" fill="#4a4a4a" opacity="0.88" transform="rotate(10 620 384)"/><ellipse cx="642" cy="391" rx="5.4" ry="2.2" fill="#a06a30" opacity="0.52" transform="rotate(10 642 391)"/><ellipse cx="659" cy="397" rx="8.4" ry="3.4" fill="#7a4a2a" opacity="0.48" transform="rotate(10 659 397)"/><ellipse cx="686" cy="406" rx="6.6" ry="3.3" fill="#333" opacity="0.72" transform="rotate(10 686 406)"/><ellipse cx="709" cy="413" rx="7.0" ry="3.6" fill="#e0b020" opacity="0.66" transform="rotate(10 709 413)"/><ellipse cx="742" cy="425" rx="8.8" ry="3.4" fill="#a06a30" opacity="0.82" transform="rotate(10 742 425)"/><ellipse cx="773" cy="435" rx="12.6" ry="3.8" fill="#8a3a6a" opacity="0.89" transform="rotate(10 773 435)"/><ellipse cx="807" cy="447" rx="13.1" ry="5.3" fill="#2a4aa0" opacity="0.78" transform="rotate(10 807 447)"/><ellipse cx="864" cy="466" rx="11.7" ry="5.3" fill="#e0b020" opacity="0.59" transform="rotate(10 864 466)"/><ellipse cx="921" cy="485" rx="18.0" ry="5.9" fill="#3a8a3a" opacity="0.45" transform="rotate(10 921 485)"/><ellipse cx="576" cy="375" rx="3.5" ry="1.8" fill="#e0b020" opacity="0.65" transform="rotate(13 576 375)"/><ellipse cx="586" cy="380" rx="4.3" ry="1.8" fill="#555" opacity="0.62" transform="rotate(13 586 380)"/><ellipse cx="597" cy="384" rx="6.1" ry="2.2" fill="#2a8ab0" opacity="0.79" transform="rotate(13 597 384)"/><ellipse cx="615" cy="392" rx="6.5" ry="2.1" fill="#3a8a3a" opacity="0.46" transform="rotate(13 615 392)"/><ellipse cx="632" cy="399" rx="6.6" ry="2.4" fill="#b04040" opacity="0.60" transform="rotate(13 632 399)"/><ellipse cx="655" cy="409" rx="8.8" ry="3.2" fill="#a06a30" opacity="0.52" transform="rotate(13 655 409)"/><ellipse cx="746" cy="447" rx="11.0" ry="4.7" fill="#d06020" opacity="0.49" transform="rotate(13 746 447)"/><ellipse cx="780" cy="462" rx="15.0" ry="3.5" fill="#e0b020" opacity="0.64" transform="rotate(13 780 462)"/><ellipse cx="834" cy="485" rx="15.2" ry="5.7" fill="#c83020" opacity="0.76" transform="rotate(13 834 485)"/><ellipse cx="960" cy="539" rx="20.6" ry="7.8" fill="#6a8a2a" opacity="0.72" transform="rotate(13 960 539)"/><ellipse cx="557" cy="372" rx="3.4" ry="1.3" fill="#2a4aa0" opacity="0.69" transform="rotate(15 557 372)"/><ellipse cx="564" cy="375" rx="4.0" ry="1.7" fill="#d06020" opacity="0.89" transform="rotate(15 564 375)"/><ellipse cx="572" cy="380" rx="4.7" ry="1.5" fill="#2a4aa0" opacity="0.56" transform="rotate(15 572 380)"/><ellipse cx="584" cy="386" rx="4.0" ry="2.2" fill="#2a4aa0" opacity="0.84" transform="rotate(15 584 386)"/><ellipse cx="596" cy="392" rx="4.5" ry="2.0" fill="#4a4a4a" opacity="0.55" transform="rotate(15 596 392)"/><ellipse cx="613" cy="400" rx="6.3" ry="2.1" fill="#7a4a2a" opacity="0.83" transform="rotate(15 613 400)"/><ellipse cx="626" cy="407" rx="7.3" ry="2.7" fill="#e0b020" opacity="0.75" transform="rotate(15 626 407)"/><ellipse cx="642" cy="416" rx="5.6" ry="3.3" fill="#8a3a6a" opacity="0.56" transform="rotate(15 642 416)"/><ellipse cx="665" cy="427" rx="6.2" ry="2.8" fill="#e0b020" opacity="0.83" transform="rotate(15 665 427)"/><ellipse cx="697" cy="444" rx="8.6" ry="3.9" fill="#c83020" opacity="0.62" transform="rotate(15 697 444)"/><ellipse cx="725" cy="458" rx="8.5" ry="4.3" fill="#b04040" opacity="0.56" transform="rotate(15 725 458)"/><ellipse cx="802" cy="498" rx="16.2" ry="4.4" fill="#2a8ab0" opacity="0.57" transform="rotate(15 802 498)"/><ellipse cx="840" cy="518" rx="14.0" ry="5.3" fill="#e0b020" opacity="0.46" transform="rotate(15 840 518)"/><ellipse cx="884" cy="540" rx="16.4" ry="7.0" fill="#2a4aa0" opacity="0.63" transform="rotate(15 884 540)"/><ellipse cx="957" cy="578" rx="24.5" ry="7.1" fill="#7a4a2a" opacity="0.50" transform="rotate(15 957 578)"/><ellipse cx="554" cy="375" rx="4.1" ry="1.5" fill="#2a4aa0" opacity="0.68" transform="rotate(17 554 375)"/><ellipse cx="561" cy="379" rx="4.0" ry="1.9" fill="#b04040" opacity="0.62" transform="rotate(17 561 379)"/><ellipse cx="570" cy="384" rx="3.4" ry="1.7" fill="#a06a30" opacity="0.84" transform="rotate(17 570 384)"/><ellipse cx="578" cy="389" rx="4.1" ry="2.1" fill="#2a8ab0" opacity="0.80" transform="rotate(17 578 389)"/><ellipse cx="591" cy="397" rx="5.4" ry="1.7" fill="#e0b020" opacity="0.75" transform="rotate(17 591 397)"/><ellipse cx="602" cy="404" rx="6.8" ry="2.2" fill="#c83020" opacity="0.68" transform="rotate(17 602 404)"/><ellipse cx="620" cy="415" rx="7.6" ry="2.7" fill="#d06020" opacity="0.78" transform="rotate(17 620 415)"/><ellipse cx="636" cy="424" rx="7.0" ry="2.9" fill="#d06020" opacity="0.61" transform="rotate(17 636 424)"/><ellipse cx="683" cy="452" rx="7.7" ry="3.6" fill="#6a8a2a" opacity="0.49" transform="rotate(17 683 452)"/><ellipse cx="704" cy="466" rx="9.5" ry="3.1" fill="#3a8a3a" opacity="0.59" transform="rotate(17 704 466)"/><ellipse cx="807" cy="527" rx="11.9" ry="6.3" fill="#3a8a3a" opacity="0.59" transform="rotate(17 807 527)"/><ellipse cx="850" cy="553" rx="20.3" ry="6.8" fill="#7a4a2a" opacity="0.63" transform="rotate(17 850 553)"/><ellipse cx="909" cy="589" rx="13.3" ry="6.4" fill="#c83020" opacity="0.56" transform="rotate(17 909 589)"/><ellipse cx="963" cy="622" rx="24.5" ry="8.1" fill="#2a8ab0" opacity="0.70" transform="rotate(17 963 622)"/><ellipse cx="557" cy="381" rx="3.5" ry="1.7" fill="#c83020" opacity="0.56" transform="rotate(19 557 381)"/><ellipse cx="578" cy="395" rx="4.2" ry="2.2" fill="#8a3a6a" opacity="0.49" transform="rotate(19 578 395)"/><ellipse cx="607" cy="416" rx="5.7" ry="2.4" fill="#b04040" opacity="0.59" transform="rotate(19 607 416)"/><ellipse cx="625" cy="429" rx="7.0" ry="2.6" fill="#2a8ab0" opacity="0.75" transform="rotate(19 625 429)"/><ellipse cx="648" cy="444" rx="9.3" ry="3.6" fill="#3a8a3a" opacity="0.65" transform="rotate(19 648 444)"/><ellipse cx="668" cy="458" rx="8.1" ry="3.9" fill="#e0b020" opacity="0.74" transform="rotate(19 668 458)"/><ellipse cx="700" cy="480" rx="8.7" ry="4.4" fill="#6a8a2a" opacity="0.78" transform="rotate(19 700 480)"/><ellipse cx="730" cy="501" rx="12.4" ry="5.0" fill="#7a4a2a" opacity="0.65" transform="rotate(19 730 501)"/><ellipse cx="771" cy="530" rx="16.5" ry="5.9" fill="#2a8ab0" opacity="0.88" transform="rotate(19 771 530)"/><ellipse cx="808" cy="555" rx="14.1" ry="6.9" fill="#3a8a3a" opacity="0.69" transform="rotate(19 808 555)"/><ellipse cx="848" cy="583" rx="18.8" ry="5.7" fill="#6a8a2a" opacity="0.61" transform="rotate(19 848 583)"/><ellipse cx="910" cy="626" rx="15.0" ry="6.1" fill="#3a8a3a" opacity="0.85" transform="rotate(19 910 626)"/><ellipse cx="975" cy="671" rx="27.0" ry="8.7" fill="#d06020" opacity="0.49" transform="rotate(19 975 671)"/><ellipse cx="556" cy="385" rx="3.6" ry="1.7" fill="#8a3a6a" opacity="0.59" transform="rotate(21 556 385)"/><ellipse cx="575" cy="400" rx="5.4" ry="2.0" fill="#d06020" opacity="0.56" transform="rotate(21 575 400)"/><ellipse cx="588" cy="410" rx="5.0" ry="2.4" fill="#d06020" opacity="0.57" transform="rotate(21 588 410)"/><ellipse cx="619" cy="434" rx="6.4" ry="2.7" fill="#7a4a2a" opacity="0.48" transform="rotate(21 619 434)"/><ellipse cx="677" cy="480" rx="8.5" ry="3.6" fill="#555" opacity="0.58" transform="rotate(21 677 480)"/><ellipse cx="710" cy="506" rx="9.9" ry="5.0" fill="#e0b020" opacity="0.52" transform="rotate(21 710 506)"/><ellipse cx="745" cy="533" rx="13.8" ry="4.1" fill="#4a4a4a" opacity="0.84" transform="rotate(21 745 533)"/><ellipse cx="783" cy="563" rx="11.3" ry="5.6" fill="#a06a30" opacity="0.81" transform="rotate(21 783 563)"/><ellipse cx="836" cy="604" rx="15.8" ry="5.5" fill="#7a4a2a" opacity="0.55" transform="rotate(21 836 604)"/><ellipse cx="896" cy="652" rx="14.7" ry="7.5" fill="#3a8a3a" opacity="0.81" transform="rotate(21 896 652)"/><ellipse cx="556" cy="390" rx="4.5" ry="1.6" fill="#8a3a6a" opacity="0.51" transform="rotate(23 556 390)"/><ellipse cx="565" cy="397" rx="3.6" ry="1.9" fill="#3a8a3a" opacity="0.79" transform="rotate(23 565 397)"/><ellipse cx="575" cy="406" rx="4.5" ry="1.6" fill="#3a8a3a" opacity="0.78" transform="rotate(23 575 406)"/><ellipse cx="585" cy="414" rx="5.6" ry="2.3" fill="#333" opacity="0.54" transform="rotate(23 585 414)"/><ellipse cx="600" cy="428" rx="7.5" ry="2.8" fill="#c83020" opacity="0.52" transform="rotate(23 600 428)"/><ellipse cx="618" cy="443" rx="8.0" ry="2.9" fill="#6a8a2a" opacity="0.81" transform="rotate(23 618 443)"/><ellipse cx="634" cy="458" rx="8.5" ry="2.4" fill="#333" opacity="0.59" transform="rotate(23 634 458)"/><ellipse cx="653" cy="474" rx="7.4" ry="2.8" fill="#d06020" opacity="0.84" transform="rotate(23 653 474)"/><ellipse cx="673" cy="492" rx="7.6" ry="3.7" fill="#a06a30" opacity="0.84" transform="rotate(23 673 492)"/><ellipse cx="700" cy="515" rx="9.7" ry="3.3" fill="#d06020" opacity="0.48" transform="rotate(23 700 515)"/><ellipse cx="731" cy="542" rx="10.6" ry="5.0" fill="#3a8a3a" opacity="0.65" transform="rotate(23 731 542)"/><ellipse cx="869" cy="663" rx="22.8" ry="8.7" fill="#a06a30" opacity="0.51" transform="rotate(23 869 663)"/><ellipse cx="549" cy="387" rx="4.0" ry="1.7" fill="#8a3a6a" opacity="0.68" transform="rotate(24 549 387)"/><ellipse cx="556" cy="394" rx="4.4" ry="1.8" fill="#7a4a2a" opacity="0.58" transform="rotate(24 556 394)"/><ellipse cx="563" cy="401" rx="3.7" ry="1.5" fill="#c83020" opacity="0.82" transform="rotate(24 563 401)"/><ellipse cx="572" cy="409" rx="4.3" ry="1.9" fill="#4a4a4a" opacity="0.64" transform="rotate(24 572 409)"/><ellipse cx="595" cy="432" rx="6.6" ry="2.3" fill="#3a8a3a" opacity="0.88" transform="rotate(24 595 432)"/><ellipse cx="608" cy="444" rx="6.5" ry="2.8" fill="#6a8a2a" opacity="0.80" transform="rotate(24 608 444)"/><ellipse cx="628" cy="463" rx="7.6" ry="3.5" fill="#a06a30" opacity="0.60" transform="rotate(24 628 463)"/><ellipse cx="645" cy="480" rx="8.3" ry="4.0" fill="#c83020" opacity="0.89" transform="rotate(24 645 480)"/><ellipse cx="665" cy="499" rx="10.7" ry="4.3" fill="#d06020" opacity="0.53" transform="rotate(24 665 499)"/><ellipse cx="695" cy="528" rx="13.2" ry="4.3" fill="#7a4a2a" opacity="0.80" transform="rotate(24 695 528)"/><ellipse cx="719" cy="551" rx="9.0" ry="5.8" fill="#3a8a3a" opacity="0.83" transform="rotate(24 719 551)"/><ellipse cx="749" cy="580" rx="12.6" ry="4.8" fill="#555" opacity="0.63" transform="rotate(24 749 580)"/><ellipse cx="454" cy="308" rx="4.1" ry="1.7" fill="#b04040" opacity="0.59" transform="rotate(20 454 308)"/><ellipse cx="447" cy="303" rx="4.0" ry="1.6" fill="#3a8a3a" opacity="0.69" transform="rotate(20 447 303)"/><ellipse cx="436" cy="295" rx="4.3" ry="2.1" fill="#b04040" opacity="0.59" transform="rotate(20 436 295)"/><ellipse cx="423" cy="286" rx="6.2" ry="2.4" fill="#a06a30" opacity="0.74" transform="rotate(20 423 286)"/><ellipse cx="407" cy="274" rx="6.0" ry="2.3" fill="#555" opacity="0.66" transform="rotate(20 407 274)"/><ellipse cx="389" cy="262" rx="7.7" ry="2.9" fill="#555" opacity="0.56" transform="rotate(20 389 262)"/><ellipse cx="373" cy="250" rx="5.6" ry="3.3" fill="#3a8a3a" opacity="0.62" transform="rotate(20 373 250)"/><ellipse cx="351" cy="234" rx="6.4" ry="3.7" fill="#d06020" opacity="0.63" transform="rotate(20 351 234)"/><ellipse cx="288" cy="189" rx="9.9" ry="5.0" fill="#333" opacity="0.86" transform="rotate(20 288 189)"/><ellipse cx="200" cy="125" rx="12.5" ry="5.2" fill="#555" opacity="0.87" transform="rotate(20 200 125)"/><ellipse cx="142" cy="84" rx="19.1" ry="6.8" fill="#2a8ab0" opacity="0.72" transform="rotate(20 142 84)"/><ellipse cx="470" cy="317" rx="3.1" ry="1.5" fill="#4a4a4a" opacity="0.79" transform="rotate(21 470 317)"/><ellipse cx="457" cy="306" rx="3.6" ry="1.7" fill="#8a3a6a" opacity="0.54" transform="rotate(21 457 306)"/><ellipse cx="450" cy="300" rx="4.4" ry="1.5" fill="#a06a30" opacity="0.79" transform="rotate(21 450 300)"/><ellipse cx="439" cy="292" rx="4.7" ry="1.8" fill="#b04040" opacity="0.70" transform="rotate(21 439 292)"/><ellipse cx="430" cy="285" rx="5.8" ry="2.0" fill="#4a4a4a" opacity="0.50" transform="rotate(21 430 285)"/><ellipse cx="421" cy="277" rx="4.3" ry="2.2" fill="#a06a30" opacity="0.83" transform="rotate(21 421 277)"/><ellipse cx="406" cy="265" rx="5.2" ry="2.4" fill="#c83020" opacity="0.70" transform="rotate(21 406 265)"/><ellipse cx="390" cy="252" rx="7.8" ry="2.6" fill="#333" opacity="0.76" transform="rotate(21 390 252)"/><ellipse cx="374" cy="239" rx="6.5" ry="3.1" fill="#7a4a2a" opacity="0.49" transform="rotate(21 374 239)"/><ellipse cx="354" cy="223" rx="9.4" ry="3.6" fill="#3a8a3a" opacity="0.69" transform="rotate(21 354 223)"/><ellipse cx="326" cy="201" rx="8.3" ry="3.2" fill="#b04040" opacity="0.54" transform="rotate(21 326 201)"/><ellipse cx="294" cy="175" rx="12.7" ry="4.7" fill="#6a8a2a" opacity="0.55" transform="rotate(21 294 175)"/><ellipse cx="262" cy="149" rx="12.8" ry="4.8" fill="#7a4a2a" opacity="0.65" transform="rotate(21 262 149)"/><ellipse cx="232" cy="124" rx="16.5" ry="5.8" fill="#c83020" opacity="0.59" transform="rotate(21 232 124)"/><ellipse cx="194" cy="94" rx="16.2" ry="5.7" fill="#6a8a2a" opacity="0.56" transform="rotate(21 194 94)"/><ellipse cx="153" cy="60" rx="16.8" ry="7.1" fill="#e0b020" opacity="0.59" transform="rotate(21 153 60)"/><ellipse cx="474" cy="316" rx="3.1" ry="1.2" fill="#e0b020" opacity="0.53" transform="rotate(23 474 316)"/><ellipse cx="469" cy="312" rx="3.8" ry="1.4" fill="#e0b020" opacity="0.66" transform="rotate(23 469 312)"/><ellipse cx="463" cy="306" rx="3.1" ry="1.4" fill="#2a4aa0" opacity="0.61" transform="rotate(23 463 306)"/><ellipse cx="457" cy="301" rx="3.2" ry="1.7" fill="#555" opacity="0.61" transform="rotate(23 457 301)"/><ellipse cx="450" cy="294" rx="3.6" ry="1.9" fill="#333" opacity="0.70" transform="rotate(23 450 294)"/><ellipse cx="440" cy="285" rx="4.6" ry="1.9" fill="#6a8a2a" opacity="0.86" transform="rotate(23 440 285)"/><ellipse cx="430" cy="276" rx="4.7" ry="2.1" fill="#d06020" opacity="0.79" transform="rotate(23 430 276)"/><ellipse cx="417" cy="264" rx="6.1" ry="2.5" fill="#8a3a6a" opacity="0.81" transform="rotate(23 417 264)"/><ellipse cx="401" cy="250" rx="6.0" ry="3.1" fill="#a06a30" opacity="0.70" transform="rotate(23 401 250)"/><ellipse cx="387" cy="236" rx="5.9" ry="3.3" fill="#7a4a2a" opacity="0.73" transform="rotate(23 387 236)"/><ellipse cx="368" cy="219" rx="7.2" ry="3.2" fill="#7a4a2a" opacity="0.61" transform="rotate(23 368 219)"/><ellipse cx="342" cy="195" rx="10.2" ry="3.6" fill="#555" opacity="0.56" transform="rotate(23 342 195)"/><ellipse cx="315" cy="170" rx="12.9" ry="3.1" fill="#4a4a4a" opacity="0.62" transform="rotate(23 315 170)"/><ellipse cx="278" cy="136" rx="12.8" ry="4.2" fill="#555" opacity="0.58" transform="rotate(23 278 136)"/><ellipse cx="233" cy="95" rx="13.7" ry="4.3" fill="#3a8a3a" opacity="0.48" transform="rotate(23 233 95)"/><ellipse cx="478" cy="316" rx="2.6" ry="1.3" fill="#2a4aa0" opacity="0.80" transform="rotate(26 478 316)"/><ellipse cx="473" cy="311" rx="2.7" ry="1.4" fill="#6a8a2a" opacity="0.62" transform="rotate(26 473 311)"/><ellipse cx="467" cy="305" rx="3.8" ry="1.5" fill="#e0b020" opacity="0.47" transform="rotate(26 467 305)"/><ellipse cx="462" cy="299" rx="3.1" ry="1.7" fill="#d06020" opacity="0.53" transform="rotate(26 462 299)"/><ellipse cx="449" cy="285" rx="4.2" ry="1.7" fill="#3a8a3a" opacity="0.67" transform="rotate(26 449 285)"/><ellipse cx="439" cy="275" rx="5.8" ry="1.7" fill="#c83020" opacity="0.81" transform="rotate(26 439 275)"/><ellipse cx="428" cy="263" rx="5.4" ry="2.3" fill="#7a4a2a" opacity="0.80" transform="rotate(26 428 263)"/><ellipse cx="413" cy="247" rx="4.8" ry="2.4" fill="#7a4a2a" opacity="0.72" transform="rotate(26 413 247)"/><ellipse cx="400" cy="233" rx="8.6" ry="3.2" fill="#4a4a4a" opacity="0.70" transform="rotate(26 400 233)"/><ellipse cx="364" cy="195" rx="10.9" ry="4.0" fill="#555" opacity="0.64" transform="rotate(26 364 195)"/><ellipse cx="313" cy="141" rx="10.4" ry="4.1" fill="#e0b020" opacity="0.90" transform="rotate(26 313 141)"/><ellipse cx="280" cy="105" rx="14.1" ry="3.8" fill="#333" opacity="0.76" transform="rotate(26 280 105)"/><ellipse cx="240" cy="62" rx="13.3" ry="6.1" fill="#c83020" opacity="0.71" transform="rotate(26 240 62)"/><ellipse cx="477" cy="309" rx="3.6" ry="1.3" fill="#b04040" opacity="0.79" transform="rotate(28 477 309)"/><ellipse cx="472" cy="303" rx="3.5" ry="1.6" fill="#333" opacity="0.68" transform="rotate(28 472 303)"/><ellipse cx="468" cy="298" rx="3.8" ry="1.4" fill="#8a3a6a" opacity="0.57" transform="rotate(28 468 298)"/><ellipse cx="461" cy="289" rx="4.0" ry="1.8" fill="#e0b020" opacity="0.49" transform="rotate(28 461 289)"/><ellipse cx="454" cy="281" rx="3.6" ry="2.0" fill="#e0b020" opacity="0.55" transform="rotate(28 454 281)"/><ellipse cx="447" cy="272" rx="4.6" ry="2.3" fill="#a06a30" opacity="0.90" transform="rotate(28 447 272)"/><ellipse cx="437" cy="259" rx="6.2" ry="2.4" fill="#2a8ab0" opacity="0.74" transform="rotate(28 437 259)"/><ellipse cx="426" cy="244" rx="6.7" ry="2.9" fill="#7a4a2a" opacity="0.79" transform="rotate(28 426 244)"/><ellipse cx="398" cy="209" rx="9.1" ry="3.5" fill="#e0b020" opacity="0.82" transform="rotate(28 398 209)"/><ellipse cx="381" cy="188" rx="6.8" ry="3.9" fill="#7a4a2a" opacity="0.55" transform="rotate(28 381 188)"/><ellipse cx="358" cy="158" rx="7.8" ry="3.5" fill="#b04040" opacity="0.87" transform="rotate(28 358 158)"/><ellipse cx="338" cy="134" rx="13.1" ry="3.5" fill="#c83020" opacity="0.83" transform="rotate(28 338 134)"/><ellipse cx="316" cy="105" rx="15.3" ry="4.1" fill="#b04040" opacity="0.80" transform="rotate(28 316 105)"/><ellipse cx="481" cy="308" rx="3.3" ry="1.4" fill="#3a8a3a" opacity="0.74" transform="rotate(32 481 308)"/><ellipse cx="478" cy="302" rx="3.0" ry="1.3" fill="#a06a30" opacity="0.76" transform="rotate(32 478 302)"/><ellipse cx="468" cy="287" rx="3.3" ry="1.6" fill="#333" opacity="0.60" transform="rotate(32 468 287)"/><ellipse cx="463" cy="280" rx="4.1" ry="1.5" fill="#c83020" opacity="0.67" transform="rotate(32 463 280)"/><ellipse cx="457" cy="271" rx="4.8" ry="1.7" fill="#4a4a4a" opacity="0.46" transform="rotate(32 457 271)"/><ellipse cx="431" cy="229" rx="6.0" ry="2.7" fill="#e0b020" opacity="0.58" transform="rotate(32 431 229)"/><ellipse cx="418" cy="208" rx="7.6" ry="2.8" fill="#3a8a3a" opacity="0.70" transform="rotate(32 418 208)"/><ellipse cx="404" cy="186" rx="6.6" ry="3.7" fill="#d06020" opacity="0.50" transform="rotate(32 404 186)"/><ellipse cx="391" cy="166" rx="7.6" ry="3.6" fill="#d06020" opacity="0.45" transform="rotate(32 391 166)"/><ellipse cx="373" cy="139" rx="12.9" ry="3.6" fill="#333" opacity="0.76" transform="rotate(32 373 139)"/><ellipse cx="353" cy="108" rx="12.9" ry="4.5" fill="#c83020" opacity="0.46" transform="rotate(32 353 108)"/><ellipse cx="487" cy="308" rx="2.9" ry="1.3" fill="#2a4aa0" opacity="0.72" transform="rotate(35 487 308)"/><ellipse cx="484" cy="303" rx="3.5" ry="1.5" fill="#a06a30" opacity="0.52" transform="rotate(35 484 303)"/><ellipse cx="481" cy="296" rx="4.0" ry="1.7" fill="#8a3a6a" opacity="0.73" transform="rotate(35 481 296)"/><ellipse cx="478" cy="289" rx="4.1" ry="1.6" fill="#555" opacity="0.86" transform="rotate(35 478 289)"/><ellipse cx="473" cy="280" rx="3.5" ry="1.5" fill="#2a4aa0" opacity="0.71" transform="rotate(35 473 280)"/><ellipse cx="469" cy="271" rx="4.5" ry="1.9" fill="#a06a30" opacity="0.67" transform="rotate(35 469 271)"/><ellipse cx="462" cy="258" rx="5.5" ry="1.8" fill="#c83020" opacity="0.56" transform="rotate(35 462 258)"/><ellipse cx="456" cy="246" rx="6.3" ry="2.0" fill="#2a4aa0" opacity="0.83" transform="rotate(35 456 246)"/><ellipse cx="449" cy="230" rx="6.0" ry="2.0" fill="#d06020" opacity="0.90" transform="rotate(35 449 230)"/><ellipse cx="438" cy="208" rx="6.1" ry="2.2" fill="#c83020" opacity="0.54" transform="rotate(35 438 208)"/><ellipse cx="425" cy="183" rx="9.0" ry="2.9" fill="#2a4aa0" opacity="0.64" transform="rotate(35 425 183)"/><ellipse cx="413" cy="156" rx="11.1" ry="3.1" fill="#c83020" opacity="0.53" transform="rotate(35 413 156)"/><ellipse cx="395" cy="120" rx="8.3" ry="4.0" fill="#c83020" opacity="0.71" transform="rotate(35 395 120)"/><ellipse cx="373" cy="75" rx="13.9" ry="5.2" fill="#b04040" opacity="0.73" transform="rotate(35 373 75)"/><ellipse cx="495" cy="314" rx="2.4" ry="1.2" fill="#6a8a2a" opacity="0.54" transform="rotate(39 495 314)"/><ellipse cx="492" cy="306" rx="2.7" ry="1.3" fill="#3a8a3a" opacity="0.63" transform="rotate(39 492 306)"/><ellipse cx="490" cy="300" rx="3.1" ry="1.3" fill="#d06020" opacity="0.75" transform="rotate(39 490 300)"/><ellipse cx="487" cy="293" rx="3.7" ry="1.4" fill="#c83020" opacity="0.49" transform="rotate(39 487 293)"/><ellipse cx="485" cy="286" rx="3.4" ry="1.6" fill="#8a3a6a" opacity="0.68" transform="rotate(39 485 286)"/><ellipse cx="482" cy="278" rx="4.3" ry="1.7" fill="#4a4a4a" opacity="0.65" transform="rotate(39 482 278)"/><ellipse cx="479" cy="267" rx="5.2" ry="1.6" fill="#2a4aa0" opacity="0.67" transform="rotate(39 479 267)"/><ellipse cx="474" cy="254" rx="5.4" ry="2.1" fill="#6a8a2a" opacity="0.47" transform="rotate(39 474 254)"/><ellipse cx="463" cy="222" rx="5.2" ry="2.8" fill="#8a3a6a" opacity="0.77" transform="rotate(39 463 222)"/><ellipse cx="455" cy="197" rx="6.9" ry="2.2" fill="#2a4aa0" opacity="0.69" transform="rotate(39 455 197)"/><ellipse cx="448" cy="177" rx="9.5" ry="3.3" fill="#e0b020" opacity="0.77" transform="rotate(39 448 177)"/><ellipse cx="439" cy="152" rx="9.6" ry="2.6" fill="#7a4a2a" opacity="0.84" transform="rotate(39 439 152)"/><ellipse cx="417" cy="87" rx="14.2" ry="4.6" fill="#b04040" opacity="0.70" transform="rotate(39 417 87)"/><ellipse cx="403" cy="45" rx="12.8" ry="4.5" fill="#555" opacity="0.61" transform="rotate(39 403 45)"/><ellipse cx="499" cy="312" rx="2.8" ry="1.1" fill="#7a4a2a" opacity="0.64" transform="rotate(44 499 312)"/><ellipse cx="498" cy="307" rx="2.9" ry="1.2" fill="#4a4a4a" opacity="0.73" transform="rotate(44 498 307)"/><ellipse cx="497" cy="301" rx="3.1" ry="1.4" fill="#b04040" opacity="0.68" transform="rotate(44 497 301)"/><ellipse cx="495" cy="295" rx="3.2" ry="1.5" fill="#b04040" opacity="0.57" transform="rotate(44 495 295)"/><ellipse cx="494" cy="287" rx="3.9" ry="1.7" fill="#6a8a2a" opacity="0.59" transform="rotate(44 494 287)"/><ellipse cx="492" cy="276" rx="4.4" ry="1.5" fill="#3a8a3a" opacity="0.89" transform="rotate(44 492 276)"/><ellipse cx="489" cy="264" rx="4.0" ry="1.7" fill="#7a4a2a" opacity="0.57" transform="rotate(44 489 264)"/><ellipse cx="485" cy="238" rx="6.1" ry="2.0" fill="#2a8ab0" opacity="0.50" transform="rotate(44 485 238)"/><ellipse cx="481" cy="219" rx="6.1" ry="2.3" fill="#e0b020" opacity="0.85" transform="rotate(44 481 219)"/><ellipse cx="478" cy="203" rx="6.2" ry="2.5" fill="#2a8ab0" opacity="0.58" transform="rotate(44 478 203)"/><ellipse cx="468" cy="153" rx="7.8" ry="3.8" fill="#7a4a2a" opacity="0.64" transform="rotate(44 468 153)"/><ellipse cx="462" cy="119" rx="9.1" ry="3.1" fill="#e0b020" opacity="0.65" transform="rotate(44 462 119)"/><ellipse cx="454" cy="81" rx="9.7" ry="3.2" fill="#8a3a6a" opacity="0.53" transform="rotate(44 454 81)"/><ellipse cx="504" cy="314" rx="2.3" ry="1.0" fill="#6a8a2a" opacity="0.53" transform="rotate(48 504 314)"/><ellipse cx="503" cy="309" rx="2.9" ry="1.2" fill="#3a8a3a" opacity="0.77" transform="rotate(48 503 309)"/><ellipse cx="503" cy="304" rx="2.9" ry="1.4" fill="#555" opacity="0.50" transform="rotate(48 503 304)"/><ellipse cx="503" cy="297" rx="3.6" ry="1.2" fill="#2a8ab0" opacity="0.51" transform="rotate(48 503 297)"/><ellipse cx="502" cy="283" rx="4.2" ry="1.4" fill="#333" opacity="0.56" transform="rotate(48 502 283)"/><ellipse cx="502" cy="273" rx="4.2" ry="1.6" fill="#2a8ab0" opacity="0.80" transform="rotate(48 502 273)"/><ellipse cx="501" cy="259" rx="3.7" ry="1.8" fill="#3a8a3a" opacity="0.72" transform="rotate(48 501 259)"/><ellipse cx="501" cy="244" rx="5.0" ry="2.4" fill="#c83020" opacity="0.81" transform="rotate(48 501 244)"/><ellipse cx="499" cy="210" rx="5.0" ry="2.9" fill="#c83020" opacity="0.62" transform="rotate(48 499 210)"/><ellipse cx="498" cy="188" rx="6.4" ry="3.0" fill="#a06a30" opacity="0.62" transform="rotate(48 498 188)"/><ellipse cx="498" cy="168" rx="8.0" ry="2.5" fill="#e0b020" opacity="0.84" transform="rotate(48 498 168)"/><ellipse cx="496" cy="134" rx="8.4" ry="3.2" fill="#333" opacity="0.70" transform="rotate(48 496 134)"/><ellipse cx="495" cy="96" rx="11.1" ry="4.4" fill="#b04040" opacity="0.50" transform="rotate(48 495 96)"/><ellipse cx="493" cy="56" rx="10.7" ry="4.1" fill="#b04040" opacity="0.50" transform="rotate(48 493 56)"/><ellipse cx="509" cy="309" rx="2.6" ry="1.1" fill="#d06020" opacity="0.54" transform="rotate(-46 509 309)"/><ellipse cx="509" cy="304" rx="2.8" ry="1.2" fill="#6a8a2a" opacity="0.66" transform="rotate(-46 509 304)"/><ellipse cx="510" cy="298" rx="3.5" ry="1.2" fill="#3a8a3a" opacity="0.85" transform="rotate(-46 510 298)"/><ellipse cx="511" cy="290" rx="2.9" ry="1.5" fill="#4a4a4a" opacity="0.54" transform="rotate(-46 511 290)"/><ellipse cx="512" cy="281" rx="4.1" ry="1.5" fill="#d06020" opacity="0.68" transform="rotate(-46 512 281)"/><ellipse cx="513" cy="269" rx="4.5" ry="2.0" fill="#e0b020" opacity="0.70" transform="rotate(-46 513 269)"/><ellipse cx="514" cy="257" rx="4.9" ry="1.6" fill="#e0b020" opacity="0.59" transform="rotate(-46 514 257)"/><ellipse cx="516" cy="240" rx="6.0" ry="2.5" fill="#b04040" opacity="0.55" transform="rotate(-46 516 240)"/><ellipse cx="518" cy="220" rx="6.2" ry="2.6" fill="#555" opacity="0.67" transform="rotate(-46 518 220)"/><ellipse cx="520" cy="204" rx="5.2" ry="3.1" fill="#2a4aa0" opacity="0.73" transform="rotate(-46 520 204)"/><ellipse cx="523" cy="176" rx="9.4" ry="3.3" fill="#e0b020" opacity="0.81" transform="rotate(-46 523 176)"/><ellipse cx="527" cy="144" rx="10.8" ry="2.6" fill="#333" opacity="0.85" transform="rotate(-46 527 144)"/><ellipse cx="531" cy="106" rx="11.1" ry="3.9" fill="#b04040" opacity="0.53" transform="rotate(-46 531 106)"/><ellipse cx="535" cy="66" rx="12.2" ry="3.6" fill="#555" opacity="0.48" transform="rotate(-46 535 66)"/><ellipse cx="512" cy="316" rx="2.3" ry="1.1" fill="#e0b020" opacity="0.59" transform="rotate(-42 512 316)"/><ellipse cx="513" cy="313" rx="2.5" ry="1.3" fill="#333" opacity="0.81" transform="rotate(-42 513 313)"/><ellipse cx="517" cy="300" rx="3.2" ry="1.4" fill="#c83020" opacity="0.62" transform="rotate(-42 517 300)"/><ellipse cx="518" cy="293" rx="3.8" ry="1.6" fill="#3a8a3a" opacity="0.58" transform="rotate(-42 518 293)"/><ellipse cx="521" cy="283" rx="3.4" ry="1.7" fill="#8a3a6a" opacity="0.47" transform="rotate(-42 521 283)"/><ellipse cx="523" cy="273" rx="4.6" ry="1.7" fill="#555" opacity="0.68" transform="rotate(-42 523 273)"/><ellipse cx="527" cy="261" rx="5.1" ry="2.1" fill="#555" opacity="0.63" transform="rotate(-42 527 261)"/><ellipse cx="530" cy="247" rx="6.1" ry="2.4" fill="#c83020" opacity="0.69" transform="rotate(-42 530 247)"/><ellipse cx="535" cy="228" rx="5.8" ry="2.3" fill="#4a4a4a" opacity="0.88" transform="rotate(-42 535 228)"/><ellipse cx="539" cy="212" rx="6.7" ry="3.0" fill="#e0b020" opacity="0.57" transform="rotate(-42 539 212)"/><ellipse cx="545" cy="191" rx="6.8" ry="2.9" fill="#3a8a3a" opacity="0.59" transform="rotate(-42 545 191)"/><ellipse cx="552" cy="161" rx="7.4" ry="3.6" fill="#c83020" opacity="0.70" transform="rotate(-42 552 161)"/><ellipse cx="560" cy="130" rx="7.6" ry="4.1" fill="#e0b020" opacity="0.75" transform="rotate(-42 560 130)"/><ellipse cx="580" cy="53" rx="9.6" ry="4.5" fill="#a06a30" opacity="0.85" transform="rotate(-42 580 53)"/><ellipse cx="518" cy="313" rx="2.6" ry="1.1" fill="#6a8a2a" opacity="0.71" transform="rotate(-37 518 313)"/><ellipse cx="520" cy="308" rx="3.0" ry="1.2" fill="#a06a30" opacity="0.67" transform="rotate(-37 520 308)"/><ellipse cx="523" cy="301" rx="3.6" ry="1.3" fill="#4a4a4a" opacity="0.74" transform="rotate(-37 523 301)"/><ellipse cx="526" cy="294" rx="3.9" ry="1.7" fill="#d06020" opacity="0.78" transform="rotate(-37 526 294)"/><ellipse cx="532" cy="278" rx="3.8" ry="1.5" fill="#4a4a4a" opacity="0.78" transform="rotate(-37 532 278)"/><ellipse cx="537" cy="266" rx="5.3" ry="1.6" fill="#3a8a3a" opacity="0.54" transform="rotate(-37 537 266)"/><ellipse cx="543" cy="251" rx="4.6" ry="1.8" fill="#7a4a2a" opacity="0.59" transform="rotate(-37 543 251)"/><ellipse cx="561" cy="206" rx="5.3" ry="3.0" fill="#8a3a6a" opacity="0.74" transform="rotate(-37 561 206)"/><ellipse cx="569" cy="187" rx="7.3" ry="3.1" fill="#4a4a4a" opacity="0.68" transform="rotate(-37 569 187)"/><ellipse cx="579" cy="162" rx="9.8" ry="3.8" fill="#2a8ab0" opacity="0.57" transform="rotate(-37 579 162)"/><ellipse cx="594" cy="127" rx="11.7" ry="3.3" fill="#7a4a2a" opacity="0.70" transform="rotate(-37 594 127)"/><ellipse cx="608" cy="91" rx="9.8" ry="4.4" fill="#b04040" opacity="0.50" transform="rotate(-37 608 91)"/><ellipse cx="628" cy="42" rx="12.7" ry="3.7" fill="#e0b020" opacity="0.73" transform="rotate(-37 628 42)"/><ellipse cx="525" cy="309" rx="2.9" ry="1.1" fill="#e0b020" opacity="0.46" transform="rotate(-34 525 309)"/><ellipse cx="528" cy="304" rx="3.3" ry="1.3" fill="#c83020" opacity="0.47" transform="rotate(-34 528 304)"/><ellipse cx="531" cy="298" rx="3.2" ry="1.6" fill="#6a8a2a" opacity="0.81" transform="rotate(-34 531 298)"/><ellipse cx="541" cy="280" rx="4.3" ry="1.8" fill="#6a8a2a" opacity="0.64" transform="rotate(-34 541 280)"/><ellipse cx="553" cy="259" rx="4.4" ry="2.0" fill="#6a8a2a" opacity="0.82" transform="rotate(-34 553 259)"/><ellipse cx="562" cy="243" rx="5.1" ry="1.9" fill="#7a4a2a" opacity="0.74" transform="rotate(-34 562 243)"/><ellipse cx="573" cy="223" rx="5.4" ry="2.4" fill="#333" opacity="0.57" transform="rotate(-34 573 223)"/><ellipse cx="583" cy="204" rx="7.0" ry="3.4" fill="#b04040" opacity="0.56" transform="rotate(-34 583 204)"/><ellipse cx="595" cy="182" rx="6.2" ry="3.1" fill="#4a4a4a" opacity="0.59" transform="rotate(-34 595 182)"/><ellipse cx="611" cy="153" rx="7.2" ry="4.3" fill="#2a4aa0" opacity="0.63" transform="rotate(-34 611 153)"/><ellipse cx="631" cy="118" rx="12.7" ry="3.9" fill="#4a4a4a" opacity="0.66" transform="rotate(-34 631 118)"/><ellipse cx="648" cy="88" rx="10.2" ry="3.6" fill="#2a4aa0" opacity="0.70" transform="rotate(-34 648 88)"/><ellipse cx="666" cy="55" rx="11.8" ry="6.3" fill="#2a8ab0" opacity="0.56" transform="rotate(-34 666 55)"/><ellipse cx="525" cy="317" rx="2.9" ry="1.1" fill="#d06020" opacity="0.63" transform="rotate(-30 525 317)"/><ellipse cx="529" cy="312" rx="2.6" ry="1.1" fill="#6a8a2a" opacity="0.55" transform="rotate(-30 529 312)"/><ellipse cx="533" cy="305" rx="3.4" ry="1.3" fill="#333" opacity="0.65" transform="rotate(-30 533 305)"/><ellipse cx="538" cy="299" rx="3.3" ry="1.4" fill="#d06020" opacity="0.68" transform="rotate(-30 538 299)"/><ellipse cx="543" cy="291" rx="3.6" ry="1.5" fill="#555" opacity="0.68" transform="rotate(-30 543 291)"/><ellipse cx="558" cy="270" rx="5.8" ry="2.3" fill="#e0b020" opacity="0.88" transform="rotate(-30 558 270)"/><ellipse cx="568" cy="256" rx="4.5" ry="2.2" fill="#c83020" opacity="0.81" transform="rotate(-30 568 256)"/><ellipse cx="587" cy="229" rx="5.5" ry="2.8" fill="#e0b020" opacity="0.75" transform="rotate(-30 587 229)"/><ellipse cx="614" cy="190" rx="9.1" ry="2.8" fill="#d06020" opacity="0.76" transform="rotate(-30 614 190)"/><ellipse cx="633" cy="164" rx="9.0" ry="3.8" fill="#a06a30" opacity="0.63" transform="rotate(-30 633 164)"/><ellipse cx="649" cy="140" rx="10.6" ry="3.7" fill="#a06a30" opacity="0.66" transform="rotate(-30 649 140)"/><ellipse cx="530" cy="316" rx="2.9" ry="1.2" fill="#2a4aa0" opacity="0.52" transform="rotate(-27 530 316)"/><ellipse cx="533" cy="312" rx="2.9" ry="1.2" fill="#c83020" opacity="0.51" transform="rotate(-27 533 312)"/><ellipse cx="539" cy="305" rx="3.8" ry="1.6" fill="#e0b020" opacity="0.59" transform="rotate(-27 539 305)"/><ellipse cx="544" cy="299" rx="3.0" ry="1.5" fill="#8a3a6a" opacity="0.66" transform="rotate(-27 544 299)"/><ellipse cx="551" cy="291" rx="4.5" ry="1.4" fill="#3a8a3a" opacity="0.63" transform="rotate(-27 551 291)"/><ellipse cx="559" cy="282" rx="4.4" ry="1.8" fill="#d06020" opacity="0.68" transform="rotate(-27 559 282)"/><ellipse cx="566" cy="273" rx="5.9" ry="1.9" fill="#7a4a2a" opacity="0.85" transform="rotate(-27 566 273)"/><ellipse cx="578" cy="260" rx="4.3" ry="2.4" fill="#4a4a4a" opacity="0.85" transform="rotate(-27 578 260)"/><ellipse cx="588" cy="248" rx="5.8" ry="2.8" fill="#2a8ab0" opacity="0.57" transform="rotate(-27 588 248)"/><ellipse cx="599" cy="235" rx="7.4" ry="2.7" fill="#4a4a4a" opacity="0.75" transform="rotate(-27 599 235)"/><ellipse cx="647" cy="179" rx="8.2" ry="3.5" fill="#a06a30" opacity="0.65" transform="rotate(-27 647 179)"/><ellipse cx="673" cy="149" rx="9.7" ry="3.3" fill="#333" opacity="0.53" transform="rotate(-27 673 149)"/><ellipse cx="703" cy="114" rx="13.6" ry="5.2" fill="#3a8a3a" opacity="0.51" transform="rotate(-27 703 114)"/><ellipse cx="732" cy="80" rx="17.6" ry="6.6" fill="#2a8ab0" opacity="0.67" transform="rotate(-27 732 80)"/><ellipse cx="540" cy="310" rx="2.8" ry="1.4" fill="#2a4aa0" opacity="0.65" transform="rotate(-25 540 310)"/><ellipse cx="546" cy="304" rx="3.5" ry="1.7" fill="#8a3a6a" opacity="0.55" transform="rotate(-25 546 304)"/><ellipse cx="551" cy="299" rx="3.7" ry="1.5" fill="#d06020" opacity="0.67" transform="rotate(-25 551 299)"/><ellipse cx="559" cy="291" rx="4.2" ry="1.6" fill="#333" opacity="0.80" transform="rotate(-25 559 291)"/><ellipse cx="566" cy="284" rx="5.6" ry="1.6" fill="#b04040" opacity="0.47" transform="rotate(-25 566 284)"/><ellipse cx="578" cy="273" rx="5.6" ry="2.5" fill="#b04040" opacity="0.49" transform="rotate(-25 578 273)"/><ellipse cx="588" cy="262" rx="6.9" ry="2.4" fill="#8a3a6a" opacity="0.73" transform="rotate(-25 588 262)"/><ellipse cx="602" cy="249" rx="6.0" ry="2.5" fill="#8a3a6a" opacity="0.75" transform="rotate(-25 602 249)"/><ellipse cx="639" cy="212" rx="9.4" ry="2.5" fill="#8a3a6a" opacity="0.75" transform="rotate(-25 639 212)"/><ellipse cx="665" cy="186" rx="11.3" ry="4.4" fill="#3a8a3a" opacity="0.61" transform="rotate(-25 665 186)"/><ellipse cx="685" cy="165" rx="11.4" ry="4.3" fill="#7a4a2a" opacity="0.60" transform="rotate(-25 685 165)"/><ellipse cx="720" cy="130" rx="12.9" ry="5.7" fill="#333" opacity="0.81" transform="rotate(-25 720 130)"/><ellipse cx="754" cy="97" rx="17.2" ry="5.7" fill="#333" opacity="0.89" transform="rotate(-25 754 97)"/><ellipse cx="793" cy="58" rx="17.3" ry="6.1" fill="#6a8a2a" opacity="0.58" transform="rotate(-25 793 58)"/><ellipse cx="544" cy="311" rx="3.6" ry="1.5" fill="#3a8a3a" opacity="0.46" transform="rotate(-23 544 311)"/><ellipse cx="552" cy="305" rx="3.3" ry="1.5" fill="#3a8a3a" opacity="0.79" transform="rotate(-23 552 305)"/><ellipse cx="561" cy="297" rx="4.6" ry="1.8" fill="#c83020" opacity="0.88" transform="rotate(-23 561 297)"/><ellipse cx="572" cy="287" rx="4.2" ry="1.9" fill="#8a3a6a" opacity="0.88" transform="rotate(-23 572 287)"/><ellipse cx="582" cy="278" rx="6.0" ry="2.4" fill="#e0b020" opacity="0.87" transform="rotate(-23 582 278)"/><ellipse cx="593" cy="268" rx="5.7" ry="2.7" fill="#c83020" opacity="0.83" transform="rotate(-23 593 268)"/><ellipse cx="610" cy="254" rx="7.0" ry="2.8" fill="#555" opacity="0.60" transform="rotate(-23 610 254)"/><ellipse cx="623" cy="242" rx="6.4" ry="3.0" fill="#333" opacity="0.85" transform="rotate(-23 623 242)"/><ellipse cx="642" cy="226" rx="9.0" ry="3.1" fill="#b04040" opacity="0.82" transform="rotate(-23 642 226)"/><ellipse cx="692" cy="183" rx="12.6" ry="3.3" fill="#2a8ab0" opacity="0.74" transform="rotate(-23 692 183)"/><ellipse cx="729" cy="151" rx="11.0" ry="5.4" fill="#c83020" opacity="0.59" transform="rotate(-23 729 151)"/><ellipse cx="768" cy="117" rx="16.7" ry="5.5" fill="#e0b020" opacity="0.81" transform="rotate(-23 768 117)"/><ellipse cx="803" cy="86" rx="16.7" ry="5.5" fill="#c83020" opacity="0.56" transform="rotate(-23 803 86)"/><ellipse cx="855" cy="41" rx="14.1" ry="7.8" fill="#4a4a4a" opacity="0.45" transform="rotate(-23 855 41)"/><ellipse cx="552" cy="309" rx="3.9" ry="1.7" fill="#a06a30" opacity="0.52" transform="rotate(-21 552 309)"/><ellipse cx="559" cy="304" rx="4.5" ry="1.5" fill="#2a4aa0" opacity="0.87" transform="rotate(-21 559 304)"/><ellipse cx="579" cy="288" rx="4.7" ry="1.6" fill="#555" opacity="0.54" transform="rotate(-21 579 288)"/><ellipse cx="591" cy="279" rx="5.0" ry="2.1" fill="#555" opacity="0.76" transform="rotate(-21 591 279)"/><ellipse cx="604" cy="269" rx="5.4" ry="2.2" fill="#6a8a2a" opacity="0.50" transform="rotate(-21 604 269)"/><ellipse cx="619" cy="257" rx="5.6" ry="3.0" fill="#4a4a4a" opacity="0.67" transform="rotate(-21 619 257)"/><ellipse cx="641" cy="241" rx="9.4" ry="2.9" fill="#333" opacity="0.65" transform="rotate(-21 641 241)"/><ellipse cx="663" cy="224" rx="8.2" ry="2.9" fill="#6a8a2a" opacity="0.80" transform="rotate(-21 663 224)"/><ellipse cx="750" cy="157" rx="11.2" ry="4.8" fill="#e0b020" opacity="0.60" transform="rotate(-21 750 157)"/><ellipse cx="822" cy="102" rx="19.7" ry="6.4" fill="#b04040" opacity="0.46" transform="rotate(-21 822 102)"/><ellipse cx="880" cy="57" rx="16.0" ry="7.0" fill="#2a8ab0" opacity="0.62" transform="rotate(-21 880 57)"/><ellipse cx="555" cy="310" rx="3.6" ry="1.5" fill="#3a8a3a" opacity="0.76" transform="rotate(-19 555 310)"/><ellipse cx="562" cy="306" rx="4.2" ry="1.9" fill="#e0b020" opacity="0.62" transform="rotate(-19 562 306)"/><ellipse cx="571" cy="300" rx="5.1" ry="2.1" fill="#d06020" opacity="0.64" transform="rotate(-19 571 300)"/><ellipse cx="592" cy="285" rx="4.9" ry="2.0" fill="#c83020" opacity="0.56" transform="rotate(-19 592 285)"/><ellipse cx="605" cy="276" rx="7.2" ry="2.2" fill="#8a3a6a" opacity="0.59" transform="rotate(-19 605 276)"/><ellipse cx="621" cy="265" rx="8.1" ry="2.7" fill="#3a8a3a" opacity="0.75" transform="rotate(-19 621 265)"/><ellipse cx="636" cy="255" rx="6.5" ry="2.3" fill="#3a8a3a" opacity="0.56" transform="rotate(-19 636 255)"/><ellipse cx="656" cy="241" rx="8.2" ry="3.2" fill="#7a4a2a" opacity="0.78" transform="rotate(-19 656 241)"/><ellipse cx="676" cy="227" rx="7.0" ry="2.9" fill="#a06a30" opacity="0.82" transform="rotate(-19 676 227)"/><ellipse cx="698" cy="212" rx="10.2" ry="4.1" fill="#3a8a3a" opacity="0.51" transform="rotate(-19 698 212)"/><ellipse cx="726" cy="193" rx="13.3" ry="4.0" fill="#6a8a2a" opacity="0.58" transform="rotate(-19 726 193)"/><ellipse cx="805" cy="138" rx="16.7" ry="4.4" fill="#6a8a2a" opacity="0.74" transform="rotate(-19 805 138)"/><ellipse cx="855" cy="104" rx="13.7" ry="7.8" fill="#d06020" opacity="0.57" transform="rotate(-19 855 104)"/><ellipse cx="919" cy="60" rx="20.2" ry="6.8" fill="#333" opacity="0.83" transform="rotate(-19 919 60)"/></g><polygon points="150,40 265,40 380,150 345,160" fill="#6ab8c8" opacity=".8"/><polygon points="215,40 265,40 380,150 360,155" fill="#9a9a50" opacity=".8"/><polygon points="770,125 860,40 888,40 800,130" fill="#3a9a3a" /><ellipse cx="950" cy="125" rx="30" ry="14" fill="#2a2a4a" transform="rotate(-25 950 125)"/><ellipse cx="752" cy="222" rx="24" ry="13" fill="#3a3a8a" transform="rotate(-25 752 222)"/><polygon points="745,265 978,175 978,285 750,330" fill="#cfcfc4" /><text x="752" y="312" font-size="64" fill="#5a6a8a" class="s" text-anchor="start" textLength="225" lengthAdjust="spacingAndGlyphs" transform="rotate(-17 752 312)" opacity=".85" font-style="italic">Google</text><ellipse cx="170" cy="297" rx="100" ry="32" fill="#f2d8b8" transform="rotate(-5 170 297)"/><text x="75" y="325" font-size="58" fill="#8a2a3a" class="s b" text-anchor="start" textLength="115" lengthAdjust="spacingAndGlyphs" >Go</text><rect x="212" y="268" width="70" height="60" fill="#5a2a8a" rx="10"/><rect x="232" y="275" width="30" height="47" fill="#d0a020" rx="6"/><ellipse cx="320" cy="283" rx="28" ry="16" fill="#7a3a2a" /><ellipse cx="160" cy="375" rx="85" ry="24" fill="#f4d838" transform="rotate(-12 160 375)"/><text x="75" y="440" font-size="50" fill="#7a4a1a" class="s b" text-anchor="start" >G</text><text x="112" y="398" font-size="16" fill="#3a3a3a" class="s b" text-anchor="start" transform="rotate(-12 112 398)">Google</text><ellipse cx="870" cy="372" rx="62" ry="20" fill="#f0cc30" transform="rotate(-6 870 372)"/><text x="812" y="383" font-size="16" fill="#3a3a3a" class="s b" text-anchor="start" transform="rotate(-6 812 383)">Google</text><rect x="682" y="315" width="46" height="27" fill="#e08a20" rx="4"/><text x="690" y="470" font-size="30" fill="#3a6ac0" class="s b" text-anchor="start" transform="rotate(12 690 470)">Google</text><polygon points="685,530 720,535 770,610 735,600" fill="#3a7ab0" /><ellipse cx="655" cy="100" rx="50" ry="38" fill="none" stroke="#8a5a2a" stroke-width="5" stroke-dasharray="14 6" transform="rotate(-25 655 100)"/><ellipse cx="300" cy="415" rx="30" ry="14" fill="#8a7a3a" transform="rotate(-15 300 415)"/><rect x="520" y="72" width="25" height="33" fill="#5a4a3a" /><text x="870" y="465" font-size="15" fill="#666" class="s" text-anchor="start" transform="rotate(8 870 465)">Google</text><text x="880" y="500" font-size="15" fill="#777" class="s" text-anchor="start" transform="rotate(10 880 500)">Google</text><text x="930" y="490" font-size="14" fill="#666" class="s" text-anchor="start" transform="rotate(8 930 490)">Google</text><text x="940" y="435" font-size="14" fill="#555" class="s" text-anchor="start" transform="rotate(6 940 435)">Google</text><text x="790" y="455" font-size="14" fill="#3a7a3a" class="s" text-anchor="start" transform="rotate(10 790 455)">Google</text><text x="60" y="545" font-size="15" fill="#777" class="s" text-anchor="start" transform="rotate(-20 60 545)">Google</text><text x="110" y="520" font-size="14" fill="#666" class="s" text-anchor="start" transform="rotate(-18 110 520)">Google</text><text x="150" y="185" font-size="14" fill="#777" class="s" text-anchor="start" transform="rotate(10 150 185)">Google</text><text x="165" y="240" font-size="13" fill="#666" class="s" text-anchor="start" transform="rotate(8 165 240)">Google</text><text x="820" y="590" font-size="30" fill="#888" class="s" text-anchor="start" transform="rotate(14 820 590)">Google</text><text x="900" y="610" font-size="24" fill="#a04030" class="s" text-anchor="start" transform="rotate(14 900 610)">Google</text><text x="945" y="330" font-size="16" fill="#555" class="s" text-anchor="start" transform="rotate(4 945 330)">Google</text><text x="950" y="600" font-size="14" fill="#666" class="s" text-anchor="start" transform="rotate(10 950 600)">Google</text><text x="230" y="611" font-size="14" fill="#e03a5a" class="c" text-anchor="start" textLength="160" lengthAdjust="spacingAndGlyphs" >喜爱创意型办公新招？</text><text x="230" y="625.482" font-size="6.45" fill="#5c5c5c" class="c" textLength="255" lengthAdjust="spacingAndGlyphs" opacity="0.72">际创意办公空间位于城市核心地段交通便利配套完善周边汇聚商业金融文化资</text><text x="230" y="635.482" font-size="6.45" fill="#5c5c5c" class="c" textLength="255" lengthAdjust="spacingAndGlyphs" opacity="0.72">让工作成为一种享受在这里每一位创业者都能找到属于自己的舞台空中花园会</text><text x="230" y="645.482" font-size="6.45" fill="#5c5c5c" class="c" textLength="255" lengthAdjust="spacingAndGlyphs" opacity="0.72">汇聚商业金融文化资源为企业提供高效舒适的办公环境项目整体规划以人为本</text><text x="230" y="655.482" font-size="6.45" fill="#5c5c5c" class="c" textLength="76.5" lengthAdjust="spacingAndGlyphs" opacity="0.72">区开放式空间布局激发</text>
</g></svg>
<svg class="t" style="left:750px;top:228px" width="250" height="175" viewBox="0 0 1024 716.8">
<defs><clipPath id="clip8"><rect x="50" y="35" width="935" height="637"/></clipPath></defs>
<g clip-path="url(#clip8)">
<defs><linearGradient id="lg21" x1="0" y1="0" x2="0" y2="1"><stop offset="0" stop-color="#4a3426"/><stop offset="0.5" stop-color="#6a3a22"/><stop offset="1" stop-color="#7a3e1e"/></linearGradient><linearGradient id="lg22" x1="0" y1="0" x2="0" y2="1"><stop offset="0" stop-color="#2c4a44"/><stop offset="0.3" stop-color="#3a6e70"/><stop offset="0.42" stop-color="#3a4a34"/><stop offset="0.7" stop-color="#45421f"/><stop offset="1" stop-color="#5a4a22"/></linearGradient><linearGradient id="lg23" x1="0" y1="0" x2="0" y2="1"><stop offset="0" stop-color="#e4c888"/><stop offset="0.3" stop-color="#d4aa5c"/><stop offset="1" stop-color="#c89a48"/></linearGradient><filter id="bl24" x="-100%" y="-100%" width="300%" height="300%" color-interpolation-filters="sRGB"><feGaussianBlur stdDeviation="5"/></filter><filter id="bl25" x="-100%" y="-100%" width="300%" height="300%" color-interpolation-filters="sRGB"><feGaussianBlur stdDeviation="2"/></filter></defs><rect x="50" y="35" width="935" height="637" fill="#2a201a" /><polygon points="380,35 985,35 985,335 440,335" fill="url(#lg21)" /><polygon points="560,70 760,85 740,130 540,118" fill="#70685c" opacity=".85"/><polygon points="800,90 985,120 985,170 770,150" fill="#70685c" opacity=".85"/><polygon points="600,40 860,40 870,65 590,60" fill="#70685c" opacity=".85"/><polygon points="520,150 700,165 690,195 510,182" fill="#70685c" opacity=".85"/><polygon points="890,40 985,40 985,95 860,80" fill="#70685c" opacity=".85"/><line x1="440" y1="210" x2="985" y2="200" stroke="#3a2418" stroke-width="5" opacity=".8"/><line x1="440" y1="226" x2="985" y2="224" stroke="#3a2418" stroke-width="4.6" opacity=".8"/><line x1="440" y1="242" x2="985" y2="248" stroke="#3a2418" stroke-width="4.2" opacity=".8"/><line x1="440" y1="258" x2="985" y2="272" stroke="#3a2418" stroke-width="3.8" opacity=".8"/><line x1="440" y1="274" x2="985" y2="296" stroke="#3a2418" stroke-width="3.4" opacity=".8"/><line x1="440" y1="290" x2="985" y2="320" stroke="#3a2418" stroke-width="3" opacity=".8"/><line x1="440" y1="306" x2="985" y2="344" stroke="#3a2418" stroke-width="2.6" opacity=".8"/><line x1="560" y1="35" x2="490" y2="300" stroke="#3a2a20" stroke-width="3" /><line x1="900" y1="40" x2="700" y2="190" stroke="#4a2a1a" stroke-width="8" /><ellipse cx="440" cy="45" rx="19.2" ry="15.6" fill="#ffe0a0" filter="url(#bl25)"/><ellipse cx="792" cy="108" rx="16" ry="13" fill="#ffe0a0" filter="url(#bl25)"/><ellipse cx="452" cy="218" rx="11.2" ry="9.1" fill="#ffe0a0" filter="url(#bl25)"/><ellipse cx="620" cy="232" rx="9.6" ry="7.8" fill="#ffe0a0" filter="url(#bl25)"/><ellipse cx="460" cy="268" rx="9.6" ry="7.8" fill="#ffe0a0" filter="url(#bl25)"/><ellipse cx="780" cy="242" rx="8" ry="6.5" fill="#ffe0a0" filter="url(#bl25)"/><ellipse cx="565" cy="270" rx="8" ry="6.5" fill="#ffe0a0" filter="url(#bl25)"/><ellipse cx="910" cy="252" rx="8" ry="6.5" fill="#ffe0a0" filter="url(#bl25)"/><ellipse cx="580" cy="300" rx="8" ry="6.5" fill="#ffe0a0" filter="url(#bl25)"/><ellipse cx="432" cy="100" rx="52" ry="36" fill="#b8a898" /><ellipse cx="440" cy="104" rx="36" ry="22" fill="#d0c4b4" /><rect x="530" y="55" width="22" height="75" fill="#c02818" filter="url(#bl25)"/><rect x="400" y="322" width="585" height="58" fill="#b07a3c" filter="url(#bl24)"/><rect x="420" y="335" width="300" height="37" fill="#d8b070" filter="url(#bl24)" opacity=".8"/><polygon points="490,375 985,340 985,672 595,672" fill="#2c2620" /><rect x="700" y="350" width="285" height="120" fill="#5a6a58" /><rect x="700" y="350" width="285" height="120" fill="#7a9a84" /><polygon points="715,358 940,358 940,440 880,470 715,430" fill="#3c9c92" filter="url(#bl25)"/><ellipse cx="800" cy="385" rx="30" ry="28" fill="#c04a28" filter="url(#bl25)"/><ellipse cx="745" cy="400" rx="22" ry="18" fill="#2a70c0" filter="url(#bl25)"/><rect x="590" y="375" width="70" height="65" fill="#5a7a88" filter="url(#bl25)"/><rect x="660" y="440" width="325" height="100" fill="#4a4030" filter="url(#bl24)"/><rect x="740" y="520" width="120" height="40" fill="#b8a088" filter="url(#bl25)"/><rect x="915" y="480" width="70" height="120" fill="#6a2420" /><rect x="700" y="460" width="34" height="18" fill="#3a90d0" filter="url(#bl25)"/><rect x="595" y="515" width="40" height="14" fill="#3a80d0" filter="url(#bl25)"/><rect x="850" y="555" width="36" height="26" fill="#2a60b0" filter="url(#bl25)"/><rect x="700" y="640" width="40" height="30" fill="#5a90e0" filter="url(#bl25)"/><rect x="790" y="470" width="20" height="14" fill="#d0c040" filter="url(#bl25)"/><rect x="960" y="610" width="25" height="40" fill="#d8d0c0" filter="url(#bl25)"/><rect x="662.681" y="598.646" width="38.1222" height="11.4562" fill="#7a6a58" opacity="0.82" filter="url(#bl25)"/><rect x="794.733" y="556.169" width="27.9144" height="8.05089" fill="#b0a080" opacity="0.87" filter="url(#bl25)"/><rect x="762.713" y="473.332" width="49.5554" height="22.7439" fill="#5a4a38" opacity="0.67" filter="url(#bl25)"/><rect x="978.242" y="617.261" width="35.0843" height="15.0694" fill="#b0a080" opacity="0.72" filter="url(#bl25)"/><rect x="863.688" y="589.228" width="57.3922" height="8.37159" fill="#6e5e4a" opacity="0.55" filter="url(#bl25)"/><rect x="952.619" y="544.219" width="41.1841" height="13.4867" fill="#7a6a58" opacity="0.56" filter="url(#bl25)"/><rect x="852.741" y="548.087" width="52.4461" height="9.19397" fill="#8a7a60" opacity="0.58" filter="url(#bl25)"/><rect x="968.132" y="645.612" width="49.7013" height="20.2047" fill="#6e5e4a" opacity="0.55" filter="url(#bl25)"/><rect x="781.004" y="630.214" width="26.4453" height="22.7707" fill="#3c5c50" opacity="0.66" filter="url(#bl25)"/><rect x="738.784" y="543.804" width="34.2027" height="23.9175" fill="#4a3a2a" opacity="0.61" filter="url(#bl25)"/><rect x="916.966" y="476.557" width="48.0719" height="23.7183" fill="#5a4a38" opacity="0.70" filter="url(#bl25)"/><rect x="809.164" y="612.08" width="27.3254" height="17.7424" fill="#3c5c50" opacity="0.89" filter="url(#bl25)"/><rect x="642.83" y="594.026" width="53.0137" height="13.3181" fill="#2a5a9a" opacity="0.60" filter="url(#bl25)"/><rect x="762.912" y="476.774" width="19.5413" height="16.3146" fill="#8a7a60" opacity="0.66" filter="url(#bl25)"/><rect x="975.862" y="661.129" width="42.8018" height="22.1307" fill="#7a6a58" opacity="0.70" filter="url(#bl25)"/><rect x="853.436" y="655.346" width="28.3266" height="16.9891" fill="#7a6a58" opacity="0.82" filter="url(#bl25)"/><rect x="894.088" y="551.13" width="53.1539" height="8.83478" fill="#2a5a9a" opacity="0.76" filter="url(#bl25)"/><rect x="613.209" y="497.177" width="34.5701" height="21.9262" fill="#3a3a40" opacity="0.89" filter="url(#bl25)"/><rect x="883.422" y="550.164" width="28.593" height="23.342" fill="#3c5c50" opacity="0.86" filter="url(#bl25)"/><rect x="782.045" y="659.151" width="33.3604" height="10.4615" fill="#b0a080" opacity="0.74" filter="url(#bl25)"/><rect x="761.911" y="573.662" width="53.6724" height="12.9276" fill="#3c5c50" opacity="0.74" filter="url(#bl25)"/><rect x="723.944" y="497.446" width="58.1384" height="14.7376" fill="#4a3a2a" opacity="0.80" filter="url(#bl25)"/><rect x="908.617" y="471.858" width="23.9626" height="14.3514" fill="#3a3a40" opacity="0.51" filter="url(#bl25)"/><rect x="769.805" y="472.39" width="54.4281" height="18.4852" fill="#3a3a40" opacity="0.62" filter="url(#bl25)"/><rect x="957.994" y="531.145" width="55.2942" height="17.9392" fill="#3a3a40" opacity="0.57" filter="url(#bl25)"/><rect x="743.568" y="603.294" width="41.1015" height="8.7389" fill="#3c5c50" opacity="0.85" filter="url(#bl25)"/><rect x="894.215" y="621.867" width="18.3286" height="15.4221" fill="#6e5e4a" opacity="0.66" filter="url(#bl25)"/><rect x="815.438" y="636.521" width="27.7993" height="23.424" fill="#b0a080" opacity="0.80" filter="url(#bl25)"/><rect x="692.99" y="475.92" width="48.498" height="23.8477" fill="#3c5c50" opacity="0.82" filter="url(#bl25)"/><rect x="786.223" y="571.786" width="40.9076" height="8.96082" fill="#b0a080" opacity="0.89" filter="url(#bl25)"/><rect x="717.86" y="600.873" width="41.5484" height="9.01958" fill="#b0a080" opacity="0.89" filter="url(#bl25)"/><rect x="734.986" y="513.163" width="59.7151" height="9.7217" fill="#6e5e4a" opacity="0.76" filter="url(#bl25)"/><rect x="838.088" y="625.765" width="59.0546" height="16.0807" fill="#5a4a38" opacity="0.77" filter="url(#bl25)"/><rect x="868.147" y="548.302" width="39.5463" height="22.0106" fill="#6e5e4a" opacity="0.59" filter="url(#bl25)"/><rect x="867.588" y="627.978" width="48.3979" height="15.2959" fill="#8a7a60" opacity="0.66" filter="url(#bl25)"/><rect x="724.45" y="492.39" width="56.4161" height="18.4694" fill="#5a4a38" opacity="0.69" filter="url(#bl25)"/><rect x="786.916" y="604.95" width="55.4004" height="20.4722" fill="#2a5a9a" opacity="0.60" filter="url(#bl25)"/><rect x="948.338" y="528.769" width="43.8178" height="21.1974" fill="#5a4a38" opacity="0.56" filter="url(#bl25)"/><rect x="676.774" y="641.403" width="21.8093" height="10.8051" fill="#3c5c50" opacity="0.62" filter="url(#bl25)"/><rect x="958.539" y="610.742" width="37.4187" height="9.73149" fill="#3a3a40" opacity="0.78" filter="url(#bl25)"/><rect x="678.211" y="517.118" width="44.9462" height="18.9061" fill="#2a5a9a" opacity="0.53" filter="url(#bl25)"/><rect x="610.864" y="558.375" width="58.6222" height="22.3955" fill="#3c5c50" opacity="0.58" filter="url(#bl25)"/><rect x="827.228" y="503.805" width="33.9178" height="23.0517" fill="#7a6a58" opacity="0.66" filter="url(#bl25)"/><rect x="775.073" y="593.124" width="46.1228" height="18.6827" fill="#2a5a9a" opacity="0.54" filter="url(#bl25)"/><rect x="970.566" y="489.494" width="32.7252" height="18.0714" fill="#b0a080" opacity="0.51" filter="url(#bl25)"/><rect x="790.457" y="449.032" width="43.5302" height="19.2065" fill="#8a7a60" opacity="0.90" filter="url(#bl25)"/><rect x="957.791" y="474.013" width="58.8593" height="11.0448" fill="#b0a080" opacity="0.86" filter="url(#bl25)"/><rect x="740.617" y="471.039" width="51.252" height="21.1575" fill="#3c5c50" opacity="0.84" filter="url(#bl25)"/><rect x="717.285" y="535.942" width="55.0666" height="11.9092" fill="#7a6a58" opacity="0.85" filter="url(#bl25)"/><rect x="941.877" y="611.793" width="49.8896" height="11.0127" fill="#5a4a38" opacity="0.70" filter="url(#bl25)"/><rect x="800.094" y="563.177" width="38.6385" height="18.8676" fill="#b0a080" opacity="0.56" filter="url(#bl25)"/><rect x="658.319" y="506.234" width="44.8788" height="8.14788" fill="#6e5e4a" opacity="0.77" filter="url(#bl25)"/><rect x="670.812" y="462.575" width="52.789" height="13.7631" fill="#b0a080" opacity="0.52" filter="url(#bl25)"/><rect x="614.116" y="553.863" width="45.4333" height="10.531" fill="#6e5e4a" opacity="0.59" filter="url(#bl25)"/><rect x="736.264" y="497.6" width="26.3568" height="11.0966" fill="#3c5c50" opacity="0.67" filter="url(#bl25)"/><rect x="723.347" y="490.385" width="39.1165" height="19.6437" fill="#3c5c50" opacity="0.75" filter="url(#bl25)"/><rect x="844.182" y="444.84" width="33.4768" height="15.6558" fill="#7a6a58" opacity="0.82" filter="url(#bl25)"/><rect x="944.42" y="596.28" width="27.1272" height="20.4428" fill="#3c5c50" opacity="0.74" filter="url(#bl25)"/><rect x="642.462" y="511.399" width="26.8263" height="15.4249" fill="#b0a080" opacity="0.50" filter="url(#bl25)"/><rect x="733.729" y="581.127" width="43.5019" height="20.0908" fill="#3a3a40" opacity="0.57" filter="url(#bl25)"/><rect x="970.307" y="555.116" width="35.327" height="11.6211" fill="#3c5c50" opacity="0.72" filter="url(#bl25)"/><rect x="894.72" y="610.191" width="55.0771" height="13.7977" fill="#6e5e4a" opacity="0.60" filter="url(#bl25)"/><rect x="827.76" y="520.935" width="46.2185" height="21.8652" fill="#3a3a40" opacity="0.90" filter="url(#bl25)"/><rect x="946.441" y="659.562" width="49.7172" height="23.7488" fill="#8a7a60" opacity="0.80" filter="url(#bl25)"/><rect x="532.217" y="578.794" width="38.4083" height="9.71645" fill="#6a5a40" opacity=".8" filter="url(#bl25)"/><rect x="650.276" y="575.71" width="27.5886" height="9.44104" fill="#6a5a40" opacity=".8" filter="url(#bl25)"/><rect x="544.452" y="528.844" width="21.2151" height="12.87" fill="#5a5048" opacity=".8" filter="url(#bl25)"/><rect x="507.11" y="622.182" width="37.5932" height="12.422" fill="#5a5048" opacity=".8" filter="url(#bl25)"/><rect x="646.167" y="668.234" width="31.3062" height="9.14889" fill="#4a4038" opacity=".8" filter="url(#bl25)"/><rect x="655.513" y="633.989" width="28.8982" height="12.6594" fill="#6a5a40" opacity=".8" filter="url(#bl25)"/><rect x="539.386" y="461.363" width="42.0243" height="12.499" fill="#6a5a40" opacity=".8" filter="url(#bl25)"/><rect x="566.756" y="495.664" width="36.8783" height="9.58352" fill="#4a4038" opacity=".8" filter="url(#bl25)"/><rect x="673.055" y="602.85" width="31.2475" height="8.00314" fill="#6a5a40" opacity=".8" filter="url(#bl25)"/><rect x="658.584" y="650.602" width="25.9637" height="12.7815" fill="#4a4038" opacity=".8" filter="url(#bl25)"/><rect x="525.977" y="602.962" width="48.0557" height="6.83377" fill="#2a3a5a" opacity=".8" filter="url(#bl25)"/><rect x="629.195" y="538.769" width="24.0173" height="12.1695" fill="#6a5a40" opacity=".8" filter="url(#bl25)"/><rect x="543.573" y="585.33" width="30.0531" height="11.1941" fill="#2a3a5a" opacity=".8" filter="url(#bl25)"/><rect x="501.834" y="627.549" width="28.5118" height="8.09959" fill="#6a5a40" opacity=".8" filter="url(#bl25)"/><rect x="512.087" y="604.162" width="38.0558" height="10.0878" fill="#5a5048" opacity=".8" filter="url(#bl25)"/><rect x="618.93" y="519.813" width="35.0189" height="13.6977" fill="#2a3a5a" opacity=".8" filter="url(#bl25)"/><line x1="490" y1="378" x2="860" y2="672" stroke="#1a1612" stroke-width="9" /><line x1="500" y1="400" x2="800" y2="672" stroke="#3a3026" stroke-width="4" /><line x1="520" y1="400" x2="520" y2="448" stroke="#1a1612" stroke-width="5" /><line x1="545" y1="425" x2="545" y2="503" stroke="#1a1612" stroke-width="5" /><line x1="580" y1="452" x2="580" y2="572" stroke="#1a1612" stroke-width="5" /><line x1="640" y1="505" x2="640" y2="697" stroke="#1a1612" stroke-width="5" /><line x1="640" y1="505" x2="640" y2="672" stroke="#1a1612" stroke-width="7" /><rect x="940" y="230" width="22" height="442" fill="#1c1410" /><line x1="590" y1="310" x2="590" y2="420" stroke="#2a2018" stroke-width="4" /><line x1="668" y1="300" x2="668" y2="440" stroke="#2a2018" stroke-width="4" /><polygon points="50,70 405,300 445,378 258,672 50,672" fill="url(#lg22)" /><line x1="62" y1="90" x2="62" y2="672" stroke="#1c2418" stroke-width="4" opacity=".55"/><line x1="84" y1="104" x2="84" y2="672" stroke="#1c2418" stroke-width="4" opacity=".55"/><line x1="106" y1="118" x2="106" y2="672" stroke="#1c2418" stroke-width="4" opacity=".55"/><line x1="128" y1="132" x2="128" y2="672" stroke="#1c2418" stroke-width="4" opacity=".55"/><line x1="150" y1="146" x2="150" y2="672" stroke="#1c2418" stroke-width="4" opacity=".55"/><line x1="172" y1="160" x2="172" y2="672" stroke="#1c2418" stroke-width="4" opacity=".55"/><line x1="194" y1="174" x2="194" y2="672" stroke="#1c2418" stroke-width="4" opacity=".55"/><line x1="216" y1="188" x2="216" y2="672" stroke="#1c2418" stroke-width="4" opacity=".55"/><line x1="238" y1="202" x2="238" y2="672" stroke="#1c2418" stroke-width="4" opacity=".55"/><line x1="260" y1="216" x2="260" y2="668.9" stroke="#1c2418" stroke-width="4" opacity=".55"/><line x1="282" y1="230" x2="282" y2="634.8" stroke="#1c2418" stroke-width="4" opacity=".55"/><line x1="304" y1="244" x2="304" y2="600.7" stroke="#1c2418" stroke-width="4" opacity=".55"/><line x1="326" y1="258" x2="326" y2="566.6" stroke="#1c2418" stroke-width="4" opacity=".55"/><line x1="348" y1="272" x2="348" y2="532.5" stroke="#1c2418" stroke-width="4" opacity=".55"/><line x1="370" y1="286" x2="370" y2="498.4" stroke="#1c2418" stroke-width="4" opacity=".55"/><line x1="392" y1="300" x2="392" y2="464.3" stroke="#1c2418" stroke-width="4" opacity=".55"/><rect x="75" y="110" width="14" height="190" fill="#7ad0e8" opacity=".42" filter="url(#bl25)"/><rect x="119" y="138" width="14" height="162" fill="#7ad0e8" opacity=".42" filter="url(#bl25)"/><rect x="163" y="166" width="14" height="134" fill="#7ad0e8" opacity=".42" filter="url(#bl25)"/><rect x="207" y="194" width="14" height="106" fill="#7ad0e8" opacity=".42" filter="url(#bl25)"/><rect x="251" y="222" width="14" height="78" fill="#7ad0e8" opacity=".42" filter="url(#bl25)"/><rect x="295" y="250" width="14" height="50" fill="#7ad0e8" opacity=".42" filter="url(#bl25)"/><rect x="339" y="278" width="14" height="22" fill="#7ad0e8" opacity=".42" filter="url(#bl25)"/><polygon points="50,300 405,318 440,378 50,330" fill="#a09060" opacity=".35"/><polygon points="50,545 380,400 400,420 50,600" fill="#1a1a12" opacity=".4"/><polygon points="50,35 390,35 420,300 405,305 50,75" fill="#3a3428" /><polygon points="50,45 300,45 405,290 400,300 50,72" fill="#4e4636" /><polygon points="270,35 365,35 385,150 300,70" fill="#c8c8c0" /><polygon points="440,375 492,375 597,672 258,672" fill="url(#lg23)" /><polygon points="455,440 500,440 540,560 400,560" fill="#b89048" opacity=".35" filter="url(#bl24)"/><text x="828" y="105" font-size="34.7222" class="c b" fill="#fff" textLength="22.8" lengthAdjust="spacingAndGlyphs">S</text><text x="852" y="89.5" font-size="13" class="c b" fill="#fff" textLength="15.6" lengthAdjust="spacingAndGlyphs">东</text><text x="852" y="103.75" font-size="13" class="c b" fill="#fff" textLength="15.6" lengthAdjust="spacingAndGlyphs">立</text><text x="871.2" y="105" font-size="34.7222" class="c b" fill="#fff" textLength="20.4" lengthAdjust="spacingAndGlyphs">h</text><text x="894" y="105" font-size="34.7222" class="c b" fill="#fff" textLength="21.6" lengthAdjust="spacingAndGlyphs">o</text><text x="918" y="105" font-size="34.7222" class="c b" fill="#fff" textLength="30" lengthAdjust="spacingAndGlyphs">w</text>
</g></svg>
<svg class="t" style="left:30px;top:396px" width="250" height="175" viewBox="0 0 1024 716.8">
<defs><clipPath id="clip9"><rect x="40" y="55" width="938" height="633"/></clipPath></defs>
<g clip-path="url(#clip9)">
<rect x="40" y="55" width="938" height="633" fill="#ffffff" /><defs><clipPath id="cp26"><rect x="40" y="97" width="468" height="513"/></clipPath><filter id="bl27" x="-100%" y="-100%" width="300%" height="300%" color-interpolation-filters="sRGB"><feGaussianBlur stdDeviation="3"/></filter><filter id="bl28" x="-100%" y="-100%" width="300%" height="300%" color-interpolation-filters="sRGB"><feGaussianBlur stdDeviation="8"/></filter></defs><g clip-path="url(#cp26)"><g transform="translate(32.8,81.9) scale(0.5682)"><rect x="10" y="20" width="830" height="920" fill="#deded8" /><rect x="10" y="20" width="830" height="280" fill="#2c2b22" /><polygon points="120,28 660,28 740,180 640,230 330,200 200,120" fill="#d6cfae" /><polygon points="15,190 330,215 620,215 625,265 340,295 15,270" fill="#b4bd1e" /><polygon points="15,245 300,275 280,300 15,290" fill="#8c961c" /><polygon points="580,300 835,280 835,370 600,360" fill="#aeb622" /><polygon points="600,330 835,315 835,345 600,355" fill="#3a3a20" /><rect x="650" y="28" width="185" height="222" fill="#2a2a28" /><polygon points="640,120 760,140 760,260 640,250" fill="#bfb98e" /><ellipse cx="60" cy="75" rx="50" ry="45" fill="#f4f4f0" /><polygon points="165,110 185,65 300,65 325,120 320,200 165,200" fill="#4e3a1c" /><ellipse cx="242" cy="192" rx="78" ry="26" fill="#f6f0cc" /><polygon points="455,28 650,28 655,170 560,200 460,160" fill="#d9b272" opacity=".9"/><ellipse cx="555" cy="100" rx="18" ry="24" fill="#fff8d0" /><polygon points="640,185 745,185 745,258 640,258" fill="#cfa060" opacity=".9"/><ellipse cx="688" cy="220" rx="10" ry="14" fill="#fff8d0" /><rect x="15" y="295" width="610" height="315" fill="#e6e6e0" /><rect x="15" y="320" width="145" height="335" fill="#f1f1ec" /><rect x="22" y="335" width="106" height="225" fill="#878d44" /><rect x="22" y="455" width="106" height="80" fill="#a8b070" /><rect x="22" y="535" width="106" height="30" fill="#2c5a40" /><rect x="160" y="455" width="140" height="123" fill="#d9cbac" /><rect x="170" y="365" width="130" height="85" fill="#c8c8c0" /><rect x="175" y="375" width="60" height="70" fill="#a0b840" /><rect x="235" y="380" width="65" height="65" fill="#c8a8d0" /><g filter="url(#bl27)"><ellipse cx="330" cy="360" rx="24" ry="45" fill="#8a4a3a" /><ellipse cx="420" cy="345" rx="26" ry="45" fill="#7a3a2a" /><ellipse cx="325" cy="450" rx="22" ry="50" fill="#6a2a5a" /><ellipse cx="375" cy="430" rx="24" ry="50" fill="#b0522a" /><ellipse cx="430" cy="430" rx="24" ry="40" fill="#3a2a5a" /><ellipse cx="490" cy="415" rx="32" ry="26" fill="#3a6a3a" /><ellipse cx="500" cy="460" rx="30" ry="24" fill="#5a3a7a" /><ellipse cx="445" cy="500" rx="34" ry="22" fill="#2a6a3a" /><ellipse cx="320" cy="540" rx="20" ry="30" fill="#7a2a4a" /><ellipse cx="375" cy="555" rx="20" ry="24" fill="#2a6a8a" /><ellipse cx="455" cy="555" rx="60" ry="20" fill="#e0c820" /><ellipse cx="410" cy="540" rx="24" ry="20" fill="#d8c020" /></g><rect x="570" y="370" width="55" height="230" fill="#f4f4f0" /><rect x="625" y="370" width="215" height="290" fill="#d0d0cc" /><rect x="760" y="250" width="40" height="390" fill="#8a8478" /><rect x="800" y="420" width="40" height="220" fill="#eef0f0" /><rect x="630" y="420" width="70" height="50" fill="#4a5a90" filter="url(#bl27)"/><polygon points="630,475 735,470 745,580 640,590" fill="#e2c41e" /><polygon points="15,650 160,640 160,585 560,572 605,600 15,765" fill="#7d634a" /><polygon points="15,765 605,600 605,640 15,825" fill="#f0f0ec" /><polygon points="15,825 605,640 700,700 130,940 15,940" fill="#8a8a50" /><polygon points="15,860 130,840 140,940 15,940" fill="#55652c" /><polygon points="540,610 620,590 660,540 700,600 740,700 700,745 600,720" fill="#78b02c" /><polygon points="70,830 300,730 430,700 620,705 700,760 840,830 840,940 130,940" fill="#bcd81f" /><polygon points="70,830 300,730 430,700 500,705 300,800 200,900 130,940" fill="#cde432" opacity=".7"/><polygon points="690,620 760,640 835,650 835,700 720,690" fill="#3a3430" /><ellipse cx="740" cy="640" rx="28" ry="22" fill="#c09070" /><polygon points="660,700 760,690 840,700 840,920 760,925 670,880" fill="#587fb2" /><polygon points="450,800 560,770 660,790 690,900 600,935 460,935" fill="#90a8cc" /><polygon points="545,660 600,640 640,720 590,760" fill="#f4f4f0" /><ellipse cx="455" cy="760" rx="45" ry="50" fill="#2a221c" /><ellipse cx="480" cy="775" rx="26" ry="30" fill="#c4946e" /></g></g><text x="550" y="294" font-size="36.3636" fill="#2b8bd2" class="s b" text-anchor="start" textLength="282" lengthAdjust="spacingAndGlyphs" >THE INFLUENCE OF</text><text x="885" y="319" font-size="22" fill="#9c9c8c" class="s" text-anchor="end" textLength="210" lengthAdjust="spacingAndGlyphs" >THE MOOD OF THE</text><text x="915" y="345" font-size="22" fill="#9c9c8c" class="s" text-anchor="end" textLength="267" lengthAdjust="spacingAndGlyphs" >OFFICE ENVIRONMENT</text><text x="553" y="399" font-size="8.5" fill="#888" class="c" text-anchor="start" textLength="195" lengthAdjust="spacingAndGlyphs" >The "successful office environment"</text><text x="553" y="414" font-size="8.5" fill="#888" class="c" text-anchor="start" textLength="185" lengthAdjust="spacingAndGlyphs" >greatly need to change some ideas</text><text x="553" y="488.483" font-size="6.45" fill="#5c5c5c" class="c" textLength="182" lengthAdjust="spacingAndGlyphs" opacity="0.72">产业园区开放式空间布局激发团队灵感促进交流协作让</text><text x="553" y="498.983" font-size="6.45" fill="#5c5c5c" class="c" textLength="182" lengthAdjust="spacingAndGlyphs" opacity="0.72">闲娱乐于一体的综合性创意产业园区开放式空间布局激</text><text x="553" y="509.483" font-size="6.45" fill="#5c5c5c" class="c" textLength="182" lengthAdjust="spacingAndGlyphs" opacity="0.72">人为本融合绿色生态与现代设计理念打造集办公展览会</text><text x="553" y="519.982" font-size="6.45" fill="#5c5c5c" class="c" textLength="182" lengthAdjust="spacingAndGlyphs" opacity="0.72">供高效舒适的办公环境项目整体规划以人为本融合绿色</text><text x="553" y="530.482" font-size="6.45" fill="#5c5c5c" class="c" textLength="182" lengthAdjust="spacingAndGlyphs" opacity="0.72">业园区开放式空间布局激发团队灵感促进交流协作让工</text><text x="553" y="540.982" font-size="6.45" fill="#5c5c5c" class="c" textLength="81.9" lengthAdjust="spacingAndGlyphs" opacity="0.72">舞台空中花园会呼吸的</text><text x="750" y="488.483" font-size="6.45" fill="#5c5c5c" class="c" textLength="182" lengthAdjust="spacingAndGlyphs" opacity="0.72">引入室内阳光空气绿植环绕让身心得到放松效率随之提</text><text x="750" y="498.983" font-size="6.45" fill="#5c5c5c" class="c" textLength="182" lengthAdjust="spacingAndGlyphs" opacity="0.72">汇聚商业金融文化资源为企业提供高效舒适的办公环境</text><text x="750" y="509.483" font-size="6.45" fill="#5c5c5c" class="c" textLength="182" lengthAdjust="spacingAndGlyphs" opacity="0.72">办公空间位于城市核心地段交通便利配套完善周边汇聚</text><text x="750" y="519.982" font-size="6.45" fill="#5c5c5c" class="c" textLength="182" lengthAdjust="spacingAndGlyphs" opacity="0.72">代设计理念打造集办公展览会议休闲娱乐于一体的综合</text><text x="750" y="530.482" font-size="6.45" fill="#5c5c5c" class="c" textLength="182" lengthAdjust="spacingAndGlyphs" opacity="0.72">融合绿色生态与现代设计理念打造集办公展览会议休闲</text><text x="750" y="540.982" font-size="6.45" fill="#5c5c5c" class="c" textLength="81.9" lengthAdjust="spacingAndGlyphs" opacity="0.72">划以人为本融合绿色生</text><text x="553" y="568.482" font-size="6.45" fill="#5c5c5c" class="c" textLength="182" lengthAdjust="spacingAndGlyphs" opacity="0.72">间位于城市核心地段交通便利配套完善周边汇聚商业金</text><text x="553" y="578.982" font-size="6.45" fill="#5c5c5c" class="c" textLength="182" lengthAdjust="spacingAndGlyphs" opacity="0.72">理念打造集办公展览会议休闲娱乐于一体的综合性创意</text><text x="553" y="589.482" font-size="6.45" fill="#5c5c5c" class="c" textLength="182" lengthAdjust="spacingAndGlyphs" opacity="0.72">资源为企业提供高效舒适的办公环境项目整体规划以人</text><text x="553" y="599.982" font-size="6.45" fill="#5c5c5c" class="c" textLength="182" lengthAdjust="spacingAndGlyphs" opacity="0.72">协作让工作成为一种享受在这里每一位创业者都能找到</text><text x="553" y="610.482" font-size="6.45" fill="#5c5c5c" class="c" textLength="81.9" lengthAdjust="spacingAndGlyphs" opacity="0.72">性创意产业园区开放式</text><text x="750" y="568.482" font-size="6.45" fill="#5c5c5c" class="c" textLength="182" lengthAdjust="spacingAndGlyphs" opacity="0.72">空间布局激发团队灵感促进交流协作让工作成为一种享</text><text x="750" y="578.982" font-size="6.45" fill="#5c5c5c" class="c" textLength="182" lengthAdjust="spacingAndGlyphs" opacity="0.72">一位创业者都能找到属于自己的舞台空中花园会呼吸的</text><text x="750" y="589.482" font-size="6.45" fill="#5c5c5c" class="c" textLength="182" lengthAdjust="spacingAndGlyphs" opacity="0.72">都能找到属于自己的舞台空中花园会呼吸的办公室将自</text><text x="750" y="599.982" font-size="6.45" fill="#5c5c5c" class="c" textLength="182" lengthAdjust="spacingAndGlyphs" opacity="0.72">聚商业金融文化资源为企业提供高效舒适的办公环境项</text><text x="750" y="610.482" font-size="6.45" fill="#5c5c5c" class="c" textLength="27.3" lengthAdjust="spacingAndGlyphs" opacity="0.72">舒适的</text><text x="62" y="634" font-size="9.5" fill="#777" class="c" text-anchor="start" textLength="270" lengthAdjust="spacingAndGlyphs" >对于“人性化办公环境”，人们需要改变一些观念</text>
</g></svg>
<svg class="t" style="left:270px;top:396px" width="250" height="175" viewBox="0 0 1024 716.8">
<defs><clipPath id="clip10"><rect x="45" y="42" width="935" height="638"/></clipPath></defs>
<g clip-path="url(#clip10)">
<rect x="45" y="42" width="935" height="638" fill="#ffffff" /><rect x="45" y="42" width="467" height="638" fill="#a89e89" /><text x="155" y="231" font-size="14" fill="#7c7466" class="c" text-anchor="start" textLength="165" lengthAdjust="spacingAndGlyphs" >混世界媒体给力之地——</text><text x="155" y="250" font-size="14" fill="#7c7466" class="c" text-anchor="start" textLength="195" lengthAdjust="spacingAndGlyphs" >创意阶层爱好的快意办公室</text><text x="152" y="322" font-size="69.697" fill="#da1a7a" class="s b" text-anchor="start" textLength="258" lengthAdjust="spacingAndGlyphs" >GOOGLE</text><text x="155" y="357" font-size="27" fill="#6c695f" class="s" text-anchor="start" textLength="253" lengthAdjust="spacingAndGlyphs" >CREATIVE OFFICE</text><text x="155" y="386.483" font-size="6.45" fill="#f4f4f0" class="c" textLength="255" lengthAdjust="spacingAndGlyphs" opacity="0.6">融合绿色生态与现代设计理念打造集办公展览会议休闲娱乐于一体的综合性创</text><text x="155" y="396.483" font-size="6.45" fill="#f4f4f0" class="c" textLength="255" lengthAdjust="spacingAndGlyphs" opacity="0.6">受在这里每一位创业者都能找到属于自己的舞台空中花园会呼吸的办公室将自</text><text x="155" y="406.483" font-size="6.45" fill="#f4f4f0" class="c" textLength="255" lengthAdjust="spacingAndGlyphs" opacity="0.6">到属于自己的舞台空中花园会呼吸的办公室将自然引入室内阳光空气绿植环绕</text><text x="155" y="416.483" font-size="6.45" fill="#f4f4f0" class="c" textLength="89.25" lengthAdjust="spacingAndGlyphs" opacity="0.6">提供高效舒适的办公环境</text><text x="155" y="429.483" font-size="6.45" fill="#f4f4f0" class="c" textLength="255" lengthAdjust="spacingAndGlyphs" opacity="0.6">与现代设计理念打造集办公展览会议休闲娱乐于一体的综合性创意产业园区开</text><text x="155" y="439.483" font-size="6.45" fill="#f4f4f0" class="c" textLength="255" lengthAdjust="spacingAndGlyphs" opacity="0.6">市核心地段交通便利配套完善周边汇聚商业金融文化资源为企业提供高效舒适</text><text x="155" y="449.483" font-size="6.45" fill="#f4f4f0" class="c" textLength="255" lengthAdjust="spacingAndGlyphs" opacity="0.6">里每一位创业者都能找到属于自己的舞台空中花园会呼吸的办公室将自然引入</text><text x="155" y="459.483" font-size="6.45" fill="#f4f4f0" class="c" textLength="255" lengthAdjust="spacingAndGlyphs" opacity="0.6">成为一种享受在这里每一位创业者都能找到属于自己的舞台空中花园会呼吸的</text><text x="155" y="469.483" font-size="6.45" fill="#f4f4f0" class="c" textLength="153" lengthAdjust="spacingAndGlyphs" opacity="0.6">性创意产业园区开放式空间布局激发团队灵感</text><text x="155" y="481.483" font-size="6.45" fill="#f4f4f0" class="c" textLength="255" lengthAdjust="spacingAndGlyphs" opacity="0.6">办公室将自然引入室内阳光空气绿植环绕让身心得到放松效率随之提升国际潮</text><text x="155" y="491.483" font-size="6.45" fill="#f4f4f0" class="c" textLength="255" lengthAdjust="spacingAndGlyphs" opacity="0.6">体规划以人为本融合绿色生态与现代设计理念打造集办公展览会议休闲娱乐于</text><text x="155" y="501.483" font-size="6.45" fill="#f4f4f0" class="c" textLength="12.75" lengthAdjust="spacingAndGlyphs" opacity="0.6">交流</text><defs><filter id="bl29" x="-100%" y="-100%" width="300%" height="300%" color-interpolation-filters="sRGB"><feGaussianBlur stdDeviation="5"/></filter></defs><g transform="translate(544.8,159.7) scale(0.4307)"><defs><clipPath id="cp30"><rect x="40" y="40" width="397" height="340"/></clipPath></defs><g clip-path="url(#cp30)"><rect x="40" y="40" width="397" height="340" fill="#c4c4c4" /><rect x="40" y="40" width="397" height="130" fill="#dcdcdc" /><polygon points="280,45 437,45 437,130 330,110" fill="#3a4a6a" /><polygon points="60,170 150,160 165,300 50,310" fill="#8a2c2a" /><rect x="75" y="195" width="65" height="65" fill="#c8b0a0" /><rect x="150" y="180" width="35" height="110" fill="#4a4a48" /><polygon points="225,190 437,170 437,350 330,350 240,290" fill="#5a4c3e" /><polygon points="225,150 290,140 290,280 225,280" fill="#3a4244" /><ellipse cx="300" cy="200" rx="16" ry="30" fill="#1c1c1c" /><ellipse cx="350" cy="200" rx="16" ry="30" fill="#1c1c1c" /><ellipse cx="400" cy="200" rx="16" ry="30" fill="#1c1c1c" /><polygon points="40,300 240,290 330,350 437,350 437,380 40,380" fill="#b4b6b8" /></g><defs><clipPath id="cp31"><rect x="480" y="40" width="395" height="340"/></clipPath></defs><g clip-path="url(#cp31)"><rect x="480" y="40" width="395" height="340" fill="#4c3c50" /><rect x="480" y="40" width="395" height="100" fill="#b4a48c" /><rect x="520" y="60" width="240" height="40" fill="#6a5a4a" /><rect x="480" y="135" width="250" height="90" fill="#3a5cb4" /><ellipse cx="540" cy="160" rx="14" ry="10" fill="#e8f0ff" /><ellipse cx="610" cy="160" rx="14" ry="10" fill="#e8f0ff" /><ellipse cx="680" cy="160" rx="14" ry="10" fill="#e8f0ff" /><rect x="480" y="225" width="280" height="25" fill="#d8b890" /><polygon points="700,110 875,60 875,330 760,330 720,230" fill="#9a50d4" /><polygon points="800,90 875,70 875,250 830,260" fill="#c870c0" /><rect x="760" y="230" width="115" height="90" fill="#5a60d0" filter="url(#bl29)"/><rect x="480" y="255" width="280" height="75" fill="#4a3850" /><rect x="480" y="335" width="395" height="45" fill="#a66a3c" /></g><defs><clipPath id="cp32"><rect x="40" y="560" width="397" height="340"/></clipPath></defs><g clip-path="url(#cp32)"><rect x="40" y="560" width="397" height="340" fill="#8a7a50" /><rect x="40" y="560" width="397" height="80" fill="#38362a" /><rect x="40" y="600" width="160" height="100" fill="#c4aa48" /><rect x="40" y="680" width="110" height="150" fill="#2a5c98" /><rect x="150" y="690" width="90" height="80" fill="#b090b0" /><rect x="275" y="590" width="75" height="110" fill="#e8e8ec" /><rect x="350" y="580" width="87" height="180" fill="#3c3850" /><polygon points="40,830 380,690 400,705 40,870" fill="#e0c828" /><polygon points="150,830 390,705 410,720 180,870" fill="#d82a78" /><polygon points="40,870 400,705 420,730 150,900 40,900" fill="#2a2a28" /><polygon points="180,900 420,730 437,740 437,900" fill="#9c7840" /></g><defs><clipPath id="cp33"><rect x="480" y="560" width="395" height="340"/></clipPath></defs><g clip-path="url(#cp33)"><rect x="480" y="560" width="395" height="340" fill="#3a9cae" /><rect x="480" y="560" width="395" height="130" fill="#2c7486" /><path d="M480,575 Q680,600 875,590" stroke="#8ad0d8" stroke-width="9" fill="none" opacity=".7"/><path d="M480,597 Q680,630 875,604" stroke="#8ad0d8" stroke-width="9" fill="none" opacity=".7"/><path d="M480,619 Q680,660 875,618" stroke="#8ad0d8" stroke-width="9" fill="none" opacity=".7"/><path d="M480,641 Q680,690 875,632" stroke="#8ad0d8" stroke-width="9" fill="none" opacity=".7"/><path d="M480,663 Q680,720 875,646" stroke="#8ad0d8" stroke-width="9" fill="none" opacity=".7"/><path d="M480,685 Q680,750 875,660" stroke="#8ad0d8" stroke-width="9" fill="none" opacity=".7"/><rect x="500" y="700" width="180" height="100" fill="#8adcec" filter="url(#bl29)"/><rect x="700" y="700" width="60" height="90" fill="#e8ecf0" filter="url(#bl29)"/><rect x="705" y="735" width="40" height="45" fill="#c08040" /><rect x="760" y="690" width="115" height="110" fill="#2c5a60" filter="url(#bl29)"/><polygon points="480,830 875,790 875,900 480,900" fill="#2a5c6c" /><ellipse cx="590" cy="805" rx="45" ry="16" fill="#e8b070" /><rect x="555" y="760" width="25" height="90" fill="#2a3440" /><rect x="610" y="760" width="25" height="90" fill="#5a3a30" /></g></g><text x="625" y="343" font-size="7.5" fill="#777" class="c" text-anchor="start" textLength="45" lengthAdjust="spacingAndGlyphs" >公司“餐车”会议室</text><text x="808" y="343" font-size="7.5" fill="#777" class="c" text-anchor="start" textLength="55" lengthAdjust="spacingAndGlyphs" >公司的休息区主题</text><text x="620" y="567" font-size="7.5" fill="#777" class="c" text-anchor="start" textLength="58" lengthAdjust="spacingAndGlyphs" >公司“餐厅”办公区</text><text x="815" y="567" font-size="7.5" fill="#777" class="c" text-anchor="start" textLength="42" lengthAdjust="spacingAndGlyphs" >公司“舞厅”</text><rect x="515" y="582" width="465" height="30" fill="#c9c9c9" /><rect x="515" y="612" width="465" height="33" fill="#ececec" /><rect x="515" y="645" width="465" height="35" fill="#c9c9c9" />
</g></svg>
<svg class="t" style="left:510px;top:396px" width="250" height="175" viewBox="0 0 1024 716.8">
<defs><clipPath id="clip11"><rect x="48" y="38" width="930" height="637"/></clipPath></defs>
<g clip-path="url(#clip11)">
<rect x="48" y="38" width="930" height="637" fill="#ffffff" /><text x="85" y="108" font-size="15.1515" fill="#2b7bc4" class="s b" text-anchor="start" textLength="205" lengthAdjust="spacingAndGlyphs" >THE TRADITIONAL OFFICE</text><text x="85" y="144" font-size="40" fill="#b4b4b4" class="s" text-anchor="start" textLength="235" lengthAdjust="spacingAndGlyphs" >ENVIRONMENT</text><text x="85" y="214" font-size="15" fill="#777" class="c" text-anchor="start" textLength="177" lengthAdjust="spacingAndGlyphs" >固化传统办公环境的弊端</text><text x="85" y="248.482" font-size="6.45" fill="#5c5c5c" class="c" textLength="185" lengthAdjust="spacingAndGlyphs" opacity="0.72">种享受在这里每一位创业者都能找到属于自己的舞台空</text><text x="85" y="258.483" font-size="6.45" fill="#5c5c5c" class="c" textLength="185" lengthAdjust="spacingAndGlyphs" opacity="0.72">适的办公环境项目整体规划以人为本融合绿色生态与现</text><text x="85" y="268.483" font-size="6.45" fill="#5c5c5c" class="c" textLength="166.5" lengthAdjust="spacingAndGlyphs" opacity="0.72">属于自己的舞台空中花园会呼吸的办公室将自然</text><text x="85" y="291" font-size="7.5" fill="#888" class="c" text-anchor="start" textLength="120" lengthAdjust="spacingAndGlyphs" >那么怎么样才能改变这种环境</text><text x="288" y="248.482" font-size="6.45" fill="#5c5c5c" class="c" textLength="185" lengthAdjust="spacingAndGlyphs" opacity="0.72">舞台空中花园会呼吸的办公室将自然引入室内阳光空气</text><text x="288" y="258.483" font-size="6.45" fill="#5c5c5c" class="c" textLength="185" lengthAdjust="spacingAndGlyphs" opacity="0.72">效舒适的办公环境项目整体规划以人为本融合绿色生态</text><text x="288" y="268.483" font-size="6.45" fill="#5c5c5c" class="c" textLength="185" lengthAdjust="spacingAndGlyphs" opacity="0.72">地段交通便利配套完善周边汇聚商业金融文化资源为企</text><text x="288" y="278.483" font-size="6.45" fill="#5c5c5c" class="c" textLength="185" lengthAdjust="spacingAndGlyphs" opacity="0.72">为本融合绿色生态与现代设计理念打造集办公展览会议</text><text x="288" y="288.483" font-size="6.45" fill="#5c5c5c" class="c" textLength="185" lengthAdjust="spacingAndGlyphs" opacity="0.72">协作让工作成为一种享受在这里每一位创业者都能找到</text><text x="288" y="298.483" font-size="6.45" fill="#5c5c5c" class="c" textLength="185" lengthAdjust="spacingAndGlyphs" opacity="0.72">公展览会议休闲娱乐于一体的综合性创意产业园区开放</text><text x="288" y="308.483" font-size="6.45" fill="#5c5c5c" class="c" textLength="185" lengthAdjust="spacingAndGlyphs" opacity="0.72">绿植环绕让身心得到放松效率随之提升国际潮流趋势引</text><text x="288" y="318.483" font-size="6.45" fill="#5c5c5c" class="c" textLength="185" lengthAdjust="spacingAndGlyphs" opacity="0.72">的综合性创意产业园区开放式空间布局激发团队灵感促</text><text x="288" y="328.483" font-size="6.45" fill="#5c5c5c" class="c" textLength="55.5" lengthAdjust="spacingAndGlyphs" opacity="0.72">高效舒适的办公</text><text x="552" y="157" font-size="15" fill="#777" class="c" text-anchor="start" textLength="158" lengthAdjust="spacingAndGlyphs" >创意型办公环境的优化</text><text x="552" y="187" font-size="27.2727" fill="#a2cb42" class="s b" text-anchor="start" textLength="213" lengthAdjust="spacingAndGlyphs" >CREATIVE OFFICE</text><text x="552" y="227" font-size="45.4545" fill="#c2102e" class="s b" text-anchor="start" textLength="298" lengthAdjust="spacingAndGlyphs" >ENVIRONMENT</text><text x="552" y="248.482" font-size="6.45" fill="#5c5c5c" class="c" textLength="185" lengthAdjust="spacingAndGlyphs" opacity="0.72">感促进交流协作让工作成为一种享受在这里每一位创业</text><text x="552" y="258.483" font-size="6.45" fill="#5c5c5c" class="c" textLength="185" lengthAdjust="spacingAndGlyphs" opacity="0.72">感促进交流协作让工作成为一种享受在这里每一位创业</text><text x="552" y="268.483" font-size="6.45" fill="#5c5c5c" class="c" textLength="185" lengthAdjust="spacingAndGlyphs" opacity="0.72">打造集办公展览会议休闲娱乐于一体的综合性创意产业</text><text x="552" y="278.483" font-size="6.45" fill="#5c5c5c" class="c" textLength="185" lengthAdjust="spacingAndGlyphs" opacity="0.72">绿色生态与现代设计理念打造集办公展览会议休闲娱乐</text><text x="552" y="288.483" font-size="6.45" fill="#5c5c5c" class="c" textLength="83.25" lengthAdjust="spacingAndGlyphs" opacity="0.72">成为一种享受在这里每</text><text x="755" y="248.482" font-size="6.45" fill="#5c5c5c" class="c" textLength="185" lengthAdjust="spacingAndGlyphs" opacity="0.72">工作成为一种享受在这里每一位创业者都能找到属于自</text><text x="755" y="258.483" font-size="6.45" fill="#5c5c5c" class="c" textLength="185" lengthAdjust="spacingAndGlyphs" opacity="0.72">业金融文化资源为企业提供高效舒适的办公环境项目整</text><text x="755" y="268.483" font-size="6.45" fill="#5c5c5c" class="c" textLength="185" lengthAdjust="spacingAndGlyphs" opacity="0.72">自然引入室内阳光空气绿植环绕让身心得到放松效率随</text><text x="755" y="278.483" font-size="6.45" fill="#5c5c5c" class="c" textLength="185" lengthAdjust="spacingAndGlyphs" opacity="0.72">的办公室将自然引入室内阳光空气绿植环绕让身心得到</text><text x="755" y="288.483" font-size="6.45" fill="#5c5c5c" class="c" textLength="64.75" lengthAdjust="spacingAndGlyphs" opacity="0.72">式空间布局激发团</text><defs><filter id="bl34" x="-100%" y="-100%" width="300%" height="300%" color-interpolation-filters="sRGB"><feGaussianBlur stdDeviation="4"/></filter></defs><g transform="translate(61.4,344) scale(0.88)"><defs><clipPath id="cp35"><rect x="25" y="28" width="265" height="252"/></clipPath></defs><g clip-path="url(#cp35)"><rect x="25" y="28" width="265" height="252" fill="#c4c6c8" /><rect x="25" y="28" width="265" height="32" fill="#d6d8da" /><rect x="50" y="60" width="220" height="15" fill="#eceef0" /><rect x="25" y="75" width="265" height="105" fill="#dfe1e3" /><rect x="130" y="90" width="70" height="90" fill="#c8ccd0" /><rect x="140" y="95" width="25" height="45" fill="#a0a8b4" /><rect x="170" y="95" width="25" height="45" fill="#a0a8b4" /><polygon points="25,185 290,180 290,280 25,280" fill="#b2b4b6" /><rect x="25" y="150" width="105" height="50" fill="#e2e4e6" /><rect x="95" y="150" width="35" height="25" fill="#6aa4dc" /><rect x="90" y="180" width="35" height="50" fill="#d4d6d8" /><rect x="205" y="150" width="85" height="45" fill="#d0d4d8" /><rect x="215" y="152" width="33" height="33" fill="#4a90d8" /><rect x="220" y="195" width="45" height="60" fill="#e6e8ea" /><ellipse cx="72" cy="205" rx="28" ry="32" fill="#2a2c30" /><rect x="25" y="235" width="70" height="45" fill="#f0f2f4" /><rect x="27" y="248" width="61" height="32" fill="#4a8cd8" /></g><defs><clipPath id="cp36"><rect x="558" y="28" width="147" height="252"/></clipPath></defs><g clip-path="url(#cp36)"><rect x="558" y="28" width="147" height="252" fill="#c9b996" /><rect x="558" y="28" width="147" height="132" fill="#5a5c48" /><polygon points="558,28 600,28 705,140 705,28" fill="#4a4a44" /><polygon points="575,28 650,28 665,130 640,135" fill="#dcc490" /><polygon points="558,40 640,135 625,140 558,70" fill="#c4a870" /><rect x="558" y="100" width="62" height="100" fill="#6a7a38" filter="url(#bl34)"/><rect x="575" y="140" width="20" height="50" fill="#e0c030" /><rect x="560" y="160" width="70" height="40" fill="#d8dce0" /><rect x="630" y="110" width="52" height="112" fill="#d81a2a" /><rect x="690" y="150" width="15" height="65" fill="#3a3a38" /><polygon points="558,225 620,220 640,250 600,280 558,280" fill="#2c3440" /></g><defs><clipPath id="cp37"><rect x="715" y="28" width="285" height="252"/></clipPath></defs><g clip-path="url(#cp37)"><rect x="715" y="28" width="285" height="252" fill="#d6c6a0" /><rect x="715" y="28" width="285" height="122" fill="#3c3c38" /><path d="M760,95 Q790,30 860,28 L1000,28 L1000,250 L900,262 Q880,245 890,232 Z" fill="#1c5cd4"/><defs><clipPath id="cw38"><path d="M800,215 L800,100 Q850,40 930,55 Q975,90 960,170 Q945,215 905,228 Z"/></clipPath></defs><g clip-path="url(#cw38)"><rect x="790" y="30" width="190" height="210" fill="#e6eedc" /><rect x="815" y="60" width="20" height="170" fill="#7c9c62" opacity=".55"/><rect x="850" y="60" width="20" height="170" fill="#7c9c62" opacity=".55"/><rect x="900" y="60" width="20" height="170" fill="#7c9c62" opacity=".55"/><rect x="935" y="60" width="20" height="170" fill="#7c9c62" opacity=".55"/><rect x="870" y="40" width="20" height="190" fill="#2a2a28" /><rect x="790" y="30" width="190" height="60" fill="#4a4a44" /><polygon points="790,112 980,70 980,92 790,135" fill="#6a6050" /></g><circle cx="800" cy="60" r="3" fill="#cfe0ff"/><circle cx="830" cy="45" r="3" fill="#cfe0ff"/><circle cx="960" cy="40" r="3" fill="#cfe0ff"/><circle cx="985" cy="120" r="3" fill="#cfe0ff"/><circle cx="975" cy="200" r="3" fill="#cfe0ff"/><circle cx="940" cy="235" r="3" fill="#cfe0ff"/><rect x="730" y="140" width="52" height="75" fill="#e8c424" /><rect x="715" y="150" width="20" height="65" fill="#c83030" filter="url(#bl34)"/><ellipse cx="770" cy="195" rx="10" ry="22" fill="#3a5a9a" filter="url(#bl34)"/><polygon points="715,215 900,205 1000,240 1000,280 715,280" fill="#d8caa6" /></g></g><text x="85" y="617" font-size="7.5" fill="#999" class="c" text-anchor="start" textLength="112" lengthAdjust="spacingAndGlyphs" >传统办公环境的办公室(图片)</text><text x="552" y="617" font-size="7.5" fill="#888" class="c" text-anchor="start" textLength="68" lengthAdjust="spacingAndGlyphs" >创意型办公室（下）</text>
</g></svg>
<svg class="t" style="left:750px;top:396px" width="250" height="175" viewBox="0 0 1024 716.8">
<defs><clipPath id="clip12"><rect x="55" y="35" width="932" height="635"/></clipPath></defs>
<g clip-path="url(#clip12)">
<defs><filter id="bl39" x="-100%" y="-100%" width="300%" height="300%" color-interpolation-filters="sRGB"><feGaussianBlur stdDeviation="30"/></filter><filter id="bl40" x="-100%" y="-100%" width="300%" height="300%" color-interpolation-filters="sRGB"><feGaussianBlur stdDeviation="4"/></filter><filter id="bl41" x="-100%" y="-100%" width="300%" height="300%" color-interpolation-filters="sRGB"><feGaussianBlur stdDeviation="1.5"/></filter><linearGradient id="lg42" x1="0" y1="0" x2="0" y2="1"><stop offset="0" stop-color="#5a5a5a"/><stop offset="0.3" stop-color="#9a968e"/><stop offset="1" stop-color="#86827a"/></linearGradient></defs><rect x="55" y="35" width="932" height="635" fill="#08080a" /><polygon points="160,170 860,170 870,460 160,460" fill="#3a3c40" filter="url(#bl39)"/><polygon points="380,190 850,200 820,440 360,440" fill="#5a5c60" filter="url(#bl39)"/><polygon points="600,210 840,220 800,420 620,420" fill="#6a6c70" filter="url(#bl39)"/><g filter="url(#bl40)"><line x1="620" y1="200" x2="860" y2="206" stroke="#8c8e92" stroke-width="8" /><line x1="640" y1="235" x2="850" y2="241" stroke="#808286" stroke-width="7" /><line x1="330" y1="260" x2="520" y2="266" stroke="#6c6e72" stroke-width="7" /><line x1="620" y1="290" x2="840" y2="296" stroke="#94969a" stroke-width="8" /><line x1="350" y1="320" x2="500" y2="326" stroke="#5e6064" stroke-width="6" /><line x1="640" y1="345" x2="860" y2="351" stroke="#84868a" stroke-width="7" /><line x1="160" y1="300" x2="330" y2="306" stroke="#3e4044" stroke-width="7" /><line x1="180" y1="360" x2="360" y2="366" stroke="#4a4c50" stroke-width="7" /><line x1="620" y1="395" x2="830" y2="401" stroke="#808286" stroke-width="7" /><line x1="200" y1="420" x2="420" y2="426" stroke="#56585c" stroke-width="7" /><line x1="600" y1="430" x2="800" y2="436" stroke="#74767a" stroke-width="6" /><line x1="380" y1="385" x2="520" y2="391" stroke="#64666a" stroke-width="6" /><line x1="340" y1="215" x2="560" y2="221" stroke="#5a5c60" stroke-width="6" /><line x1="600" y1="260" x2="840" y2="266" stroke="#6e7074" stroke-width="6" /></g><path d="M250,40 Q185,260 370,440 Q430,475 470,465 Q300,330 285,40 Z" fill="#66645e" filter="url(#bl41)"/><path d="M250,40 Q215,200 290,340 Q240,200 285,40 Z" fill="#7c7a72" filter="url(#bl41)"/><path d="M285,180 Q330,360 480,430 Q640,420 800,300" stroke="#2c2e32" stroke-width="4" fill="none"/><polygon points="560,170 610,170 625,290 600,300 585,240 545,240" fill="#1e2024" filter="url(#bl40)"/><polygon points="120,465 880,455 985,672 55,672" fill="url(#lg42)" /><polygon points="330,480 700,475 740,672 290,672" fill="#b4aea2" filter="url(#bl39)" opacity=".75"/><line x1="240" y1="480" x2="820" y2="476" stroke="#d0ccc4" stroke-width="3" opacity=".3"/><line x1="230" y1="512" x2="832" y2="508" stroke="#d0ccc4" stroke-width="3" opacity=".3"/><line x1="220" y1="544" x2="844" y2="540" stroke="#d0ccc4" stroke-width="3" opacity=".3"/><line x1="210" y1="576" x2="856" y2="572" stroke="#d0ccc4" stroke-width="3" opacity=".3"/><line x1="200" y1="608" x2="868" y2="604" stroke="#d0ccc4" stroke-width="3" opacity=".3"/><line x1="190" y1="640" x2="880" y2="636" stroke="#d0ccc4" stroke-width="3" opacity=".3"/><polygon points="55,360 150,370 260,520 320,600 300,672 55,672" fill="#0a0a0c" filter="url(#bl40)"/><polygon points="985,300 860,330 800,420 770,520 700,600 720,672 985,672" fill="#0a0a0c" filter="url(#bl40)"/><rect x="55" y="35" width="95" height="425" fill="#060608" filter="url(#bl39)"/><rect x="870" y="35" width="117" height="425" fill="#060608" filter="url(#bl39)"/><rect x="55" y="35" width="932" height="85" fill="#060608" filter="url(#bl39)"/><ellipse cx="110" cy="400" rx="14" ry="16" fill="#4a3e38" filter="url(#bl41)"/><ellipse cx="150" cy="440" rx="10" ry="12" fill="#3e342e" filter="url(#bl41)"/><ellipse cx="240" cy="570" rx="10" ry="26" fill="#a88a74" filter="url(#bl41)"/><ellipse cx="930" cy="480" rx="12" ry="16" fill="#8a7468" filter="url(#bl41)"/><ellipse cx="900" cy="540" rx="14" ry="18" fill="#786c68" filter="url(#bl41)"/><ellipse cx="920" cy="600" rx="22" ry="10" fill="#8a847e" filter="url(#bl41)"/><ellipse cx="780" cy="480" rx="12" ry="9" fill="#48485c" filter="url(#bl41)"/><ellipse cx="280" cy="600" rx="26" ry="7" fill="#a09890" filter="url(#bl41)"/><ellipse cx="547" cy="262" rx="17" ry="22" fill="#d8b89a" /><ellipse cx="547" cy="248" rx="19" ry="13" fill="#e0cfa0" /><rect x="540" y="282" width="14" height="30" fill="#d0ac90" /><polygon points="505,325 525,308 570,308 595,325 608,455 596,458 585,350 512,350 512,465 500,462" fill="#d6b496" /><path d="M518,338 L582,338 Q590,420 585,470 Q588,560 608,625 Q580,650 545,655 Q505,648 483,600 Q520,540 515,470 Q508,400 518,338 Z" fill="#16182a"/><path d="M535,350 Q560,420 552,500 Q555,580 575,630" stroke="#4a5070" stroke-width="6" fill="none" opacity=".7"/><ellipse cx="595" cy="560" rx="24" ry="55" fill="#4a4844" filter="url(#bl40)" opacity=".7"/><text x="82" y="648" font-size="41.6667" class="c b" fill="#f0e628" textLength="28.12" lengthAdjust="spacingAndGlyphs">S</text><text x="111.6" y="629.4" font-size="15.6" class="c b" fill="#fff" textLength="19.24" lengthAdjust="spacingAndGlyphs">东</text><text x="111.6" y="646.5" font-size="15.6" class="c b" fill="#fff" textLength="19.24" lengthAdjust="spacingAndGlyphs">立</text><text x="135.28" y="648" font-size="41.6667" class="c b" fill="#f07838" textLength="25.16" lengthAdjust="spacingAndGlyphs">h</text><text x="163.4" y="648" font-size="41.6667" class="c b" fill="#e0208a" textLength="26.64" lengthAdjust="spacingAndGlyphs">o</text><text x="193" y="648" font-size="41.6667" class="c b" fill="#d82424" textLength="37" lengthAdjust="spacingAndGlyphs">w</text>
</g></svg>
<svg class="t" style="left:30px;top:564px" width="250" height="175" viewBox="0 0 1024 716.8">
<defs><clipPath id="clip13"><rect x="45" y="55" width="930" height="635"/></clipPath></defs>
<g clip-path="url(#clip13)">
<rect x="45" y="55" width="930" height="635" fill="#ffffff" /><rect x="45" y="55" width="467" height="635" fill="#7b978c" /><text x="108" y="205" font-size="65.1515" fill="#f2b999" class="s b" text-anchor="start" textLength="344" lengthAdjust="spacingAndGlyphs" >WAREHOUSE</text><text x="108" y="242" font-size="19" fill="#4b5b55" class="s" text-anchor="start" textLength="344" lengthAdjust="spacingAndGlyphs" >AND FIRST STAGES SELLING REACTION</text><text x="108" y="278" font-size="15" fill="#f4f4f4" class="c" text-anchor="start" textLength="187" lengthAdjust="spacingAndGlyphs" >——花漾来金银泽中心</text><text x="105" y="542.848" font-size="6.88" fill="#eef4f0" class="c" textLength="347" lengthAdjust="spacingAndGlyphs" opacity="0.6">会议休闲娱乐于一体的综合性创意产业园区开放式空间布局激发团队灵感促进交流协作让工作成为</text><text x="105" y="556.348" font-size="6.88" fill="#eef4f0" class="c" textLength="347" lengthAdjust="spacingAndGlyphs" opacity="0.6">这里每一位创业者都能找到属于自己的舞台空中花园会呼吸的办公室将自然引入室内阳光空气绿植</text><text x="105" y="569.848" font-size="6.88" fill="#eef4f0" class="c" textLength="347" lengthAdjust="spacingAndGlyphs" opacity="0.6">国际创意办公空间位于城市核心地段交通便利配套完善周边汇聚商业金融文化资源为企业提供高效</text><text x="105" y="583.348" font-size="6.88" fill="#eef4f0" class="c" textLength="347" lengthAdjust="spacingAndGlyphs" opacity="0.6">态与现代设计理念打造集办公展览会议休闲娱乐于一体的综合性创意产业园区开放式空间布局激发</text><text x="105" y="596.848" font-size="6.88" fill="#eef4f0" class="c" textLength="34.7" lengthAdjust="spacingAndGlyphs" opacity="0.6">企业提供</text><defs><filter id="bl43" x="-100%" y="-100%" width="300%" height="300%" color-interpolation-filters="sRGB"><feGaussianBlur stdDeviation="6"/></filter><filter id="bl44" x="-100%" y="-100%" width="300%" height="300%" color-interpolation-filters="sRGB"><feGaussianBlur stdDeviation="14"/></filter></defs><g transform="translate(553,139.3) scale(0.42)"><rect x="28" y="55" width="972" height="70" fill="#cfcfcf" /><rect x="28" y="125" width="972" height="75" fill="#eeeeee" /><rect x="28" y="200" width="972" height="70" fill="#cfcfcf" /><rect x="28" y="270" width="972" height="75" fill="#eeeeee" /><rect x="28" y="345" width="972" height="75" fill="#cfcfcf" /><rect x="28" y="420" width="972" height="70" fill="#eeeeee" /><rect x="28" y="490" width="972" height="70" fill="#cfcfcf" /><rect x="28" y="560" width="972" height="75" fill="#eeeeee" /><rect x="28" y="635" width="972" height="70" fill="#cfcfcf" /><rect x="28" y="705" width="972" height="145" fill="#f6b193" /><defs><clipPath id="cp45"><rect x="278" y="58" width="602" height="792"/></clipPath></defs><g clip-path="url(#cp45)"><rect x="278" y="58" width="602" height="792" fill="#34363a" /><polygon points="600,60 880,60 880,600 760,560 640,300" fill="#6e7074" filter="url(#bl44)"/><polygon points="278,200 420,220 520,480 420,600 300,450" fill="#5e6064" filter="url(#bl44)"/><rect x="278" y="58" width="322" height="122" fill="#1e1f24" filter="url(#bl44)"/><g filter="url(#bl43)"><line x1="650" y1="110" x2="870" y2="118" stroke="#8e9094" stroke-width="16" /><line x1="640" y1="170" x2="870" y2="178" stroke="#a4a6aa" stroke-width="16" /><line x1="300" y1="250" x2="480" y2="258" stroke="#7a7c80" stroke-width="14" /><line x1="660" y1="240" x2="870" y2="248" stroke="#b4b6ba" stroke-width="16" /><line x1="300" y1="310" x2="430" y2="318" stroke="#909296" stroke-width="14" /><line x1="680" y1="310" x2="870" y2="318" stroke="#a0a2a6" stroke-width="16" /><line x1="320" y1="380" x2="460" y2="388" stroke="#b0b2b6" stroke-width="16" /><line x1="700" y1="380" x2="870" y2="388" stroke="#9a9ca0" stroke-width="14" /><line x1="340" y1="450" x2="500" y2="458" stroke="#a4a6aa" stroke-width="16" /><line x1="720" y1="450" x2="870" y2="458" stroke="#8a8c90" stroke-width="14" /><line x1="380" y1="520" x2="520" y2="528" stroke="#9a9ca0" stroke-width="14" /><line x1="760" y1="520" x2="870" y2="528" stroke="#808286" stroke-width="12" /></g><polygon points="278,560 360,600 380,700 300,850 278,850" fill="#101012" /><polygon points="820,600 880,570 880,790 840,780" fill="#151517" /><polygon points="580,400 640,395 700,520 770,680 850,795 760,830 560,840 380,830 288,790 400,650 500,500" fill="#dfe7ea" /><polygon points="580,400 620,400 640,600 600,830 480,835 420,700 520,500" fill="#eef3f5" opacity=".8"/><polygon points="640,500 700,520 740,640 690,700 650,620" fill="#c2cdd2" opacity=".8"/><rect x="278" y="800" width="602" height="50" fill="#6a6c72" opacity=".6" filter="url(#bl43)"/><polygon points="560,270 610,260 640,300 640,400 580,405 560,340" fill="#d4b8a4" /><polygon points="520,300 560,280 555,320 515,380 550,410 540,425 495,385" fill="#c8a890" /><polygon points="625,300 645,310 660,480 640,490" fill="#d0b09a" /><ellipse cx="600" cy="215" rx="30" ry="40" fill="#d8bca4" /><ellipse cx="592" cy="195" rx="36" ry="30" fill="#cdb078" /></g><text x="140" y="805" font-size="40" fill="#ffffff" class="s" text-anchor="start" textLength="95" lengthAdjust="spacingAndGlyphs" >Bride</text></g><text x="565" y="545.482" font-size="6.45" fill="#5c5c5c" class="c" textLength="363" lengthAdjust="spacingAndGlyphs" opacity="0.72">交通便利配套完善周边汇聚商业金融文化资源为企业提供高效舒适的办公环境项目整体规划以人为本融合绿色</text><text x="565" y="555.082" font-size="6.45" fill="#5c5c5c" class="c" textLength="363" lengthAdjust="spacingAndGlyphs" opacity="0.72">的办公环境项目整体规划以人为本融合绿色生态与现代设计理念打造集办公展览会议休闲娱乐于一体的综合性</text><text x="565" y="564.683" font-size="6.45" fill="#5c5c5c" class="c" textLength="199.65" lengthAdjust="spacingAndGlyphs" opacity="0.72">于一体的综合性创意产业园区开放式空间布局激发团队灵感</text><text x="565" y="582.482" font-size="6.45" fill="#5c5c5c" class="c" textLength="363" lengthAdjust="spacingAndGlyphs" opacity="0.72">设计理念打造集办公展览会议休闲娱乐于一体的综合性创意产业园区开放式空间布局激发团队灵感促进交流协</text><text x="565" y="592.082" font-size="6.45" fill="#5c5c5c" class="c" textLength="363" lengthAdjust="spacingAndGlyphs" opacity="0.72">业金融文化资源为企业提供高效舒适的办公环境项目整体规划以人为本融合绿色生态与现代设计理念打造集办</text><text x="565" y="601.683" font-size="6.45" fill="#5c5c5c" class="c" textLength="199.65" lengthAdjust="spacingAndGlyphs" opacity="0.72">受在这里每一位创业者都能找到属于自己的舞台空中花园会</text>
</g></svg>
<svg class="t" style="left:270px;top:564px" width="250" height="175" viewBox="0 0 1024 716.8">
<defs><clipPath id="clip14"><rect x="48" y="48" width="934" height="640"/></clipPath></defs>
<g clip-path="url(#clip14)">
<rect x="48" y="48" width="934" height="640" fill="#ffffff" /><text x="83" y="110" font-size="12" fill="#8a8a8a" class="s" text-anchor="start" textLength="117" lengthAdjust="spacingAndGlyphs" >ART WORKS</text><text x="83" y="146" font-size="40.9091" fill="#c667aa" class="s b" text-anchor="start" textLength="235" lengthAdjust="spacingAndGlyphs" >EXHIBITION</text><defs><filter id="bl46" x="-100%" y="-100%" width="300%" height="300%" color-interpolation-filters="sRGB"><feGaussianBlur stdDeviation="3"/></filter></defs><g transform="translate(61.4,139.3) scale(0.76)"><defs><clipPath id="cp47"><rect x="28" y="30" width="570" height="448"/></clipPath><linearGradient id="lg48" x1="0" y1="0" x2="1" y2="0"><stop offset="0" stop-color="#a4a4a0"/><stop offset="0.6" stop-color="#b2b2ae"/><stop offset="1" stop-color="#bcbab4"/></linearGradient></defs><g clip-path="url(#cp47)"><rect x="28" y="30" width="570" height="448" fill="url(#lg48)" /><polygon points="150,478 500,330 598,335 598,478" fill="#a39c92" /><polygon points="150,478 240,478 500,340 500,330" fill="#3a3632" /><rect x="498" y="190" width="100" height="145" fill="#d6d2c6" /><rect x="505" y="250" width="50" height="45" fill="#c8a8b8" /><rect x="570" y="225" width="28" height="55" fill="#b8a060" /><rect x="580" y="290" width="18" height="40" fill="#4a6a3a" /><polygon points="290,30 598,30 598,195 560,245 500,240" fill="#0e0e0e" /><ellipse cx="543" cy="70" rx="24" ry="11" fill="#f8f8f4" /><ellipse cx="568" cy="143" rx="16" ry="8" fill="#f8f8f4" /><ellipse cx="580" cy="178" rx="12" ry="6" fill="#f8f8f4" /><rect x="28" y="72" width="38" height="100" fill="#f2f2ee" /><rect x="34" y="80" width="26" height="84" fill="#e08a20" /><rect x="84" y="82" width="62" height="94" fill="#f2f2ee" /><rect x="90" y="90" width="50" height="78" fill="#c0508a" /><rect x="160" y="92" width="46" height="88" fill="#f2f2ee" /><rect x="166" y="100" width="34" height="72" fill="#38a8d0" /><rect x="28" y="184" width="38" height="98" fill="#f2f2ee" /><rect x="34" y="192" width="26" height="82" fill="#e06020" /><rect x="84" y="185" width="62" height="97" fill="#f2f2ee" /><rect x="90" y="193" width="50" height="81" fill="#3a60c0" /><rect x="160" y="186" width="46" height="96" fill="#f2f2ee" /><rect x="166" y="194" width="34" height="80" fill="#d89a30" /><rect x="28" y="294" width="38" height="94" fill="#f2f2ee" /><rect x="34" y="302" width="26" height="78" fill="#b83a8a" /><rect x="84" y="286" width="62" height="98" fill="#f2f2ee" /><rect x="90" y="294" width="50" height="82" fill="#d8d8e8" /><rect x="160" y="278" width="46" height="102" fill="#f2f2ee" /><rect x="166" y="286" width="34" height="86" fill="#e8e8e8" /><rect x="288" y="175" width="18" height="45" fill="#eeeeea" /><rect x="291" y="180" width="12" height="35" fill="#d8d8d0" /><rect x="288" y="232" width="18" height="45" fill="#eeeeea" /><rect x="291" y="237" width="12" height="35" fill="#b04a90" /><rect x="288" y="290" width="18" height="45" fill="#eeeeea" /><rect x="291" y="295" width="12" height="35" fill="#c04a5a" /><rect x="316" y="175" width="18" height="45" fill="#eeeeea" /><rect x="319" y="180" width="12" height="35" fill="#e0a040" /><rect x="316" y="232" width="18" height="45" fill="#eeeeea" /><rect x="319" y="237" width="12" height="35" fill="#3aa8c0" /><rect x="316" y="290" width="18" height="45" fill="#eeeeea" /><rect x="319" y="295" width="12" height="35" fill="#d8d8d0" /><rect x="344" y="175" width="14" height="45" fill="#eeeeea" /><rect x="347" y="180" width="8" height="35" fill="#b04a90" /><rect x="344" y="232" width="14" height="45" fill="#eeeeea" /><rect x="347" y="237" width="8" height="35" fill="#c04a5a" /><rect x="344" y="290" width="14" height="45" fill="#eeeeea" /><rect x="347" y="295" width="8" height="35" fill="#e0a040" /><rect x="398" y="205" width="10" height="35" fill="#e8c8c0" /><rect x="412" y="205" width="10" height="35" fill="#e8c8c0" /><rect x="398" y="248" width="10" height="30" fill="#e8c8c0" /><rect x="412" y="248" width="10" height="30" fill="#e8c8c0" /><rect x="398" y="286" width="10" height="26" fill="#e8c8c0" /><rect x="412" y="286" width="10" height="26" fill="#e8c8c0" /><rect x="450" y="220" width="8" height="28" fill="#e8c8c0" /><rect x="462" y="220" width="8" height="28" fill="#e8c8c0" /><rect x="450" y="254" width="8" height="24" fill="#e8c8c0" /><rect x="462" y="254" width="8" height="24" fill="#e8c8c0" /><rect x="484" y="232" width="6" height="22" fill="#e8c8c0" /><rect x="484" y="260" width="6" height="20" fill="#e8c8c0" /><ellipse cx="375" cy="135" rx="8" ry="10" fill="#d8d8d4" /><ellipse cx="452" cy="180" rx="6" ry="8" fill="#d0d0cc" /><polygon points="250,440 300,410 440,385 490,395 480,478 250,478" fill="#d78f3c" /><polygon points="300,410 440,385 490,395 330,425" fill="#e6a654" /><polygon points="478,345 540,335 552,345 545,380 480,385" fill="#d89440" /><rect x="500" y="380" width="30" height="12" fill="#3a3632" /></g><defs><clipPath id="cp49"><rect x="655" y="260" width="333" height="218"/></clipPath></defs><g clip-path="url(#cp49)"><rect x="655" y="260" width="333" height="218" fill="#dccdb0" /><rect x="655" y="260" width="333" height="30" fill="#e6dcc4" /><rect x="655" y="260" width="60" height="218" fill="#ece6d8" /><rect x="655" y="335" width="47" height="40" fill="#1a1a1a" /><rect x="663" y="345" width="27" height="20" fill="#e0e0e0" /><rect x="860" y="270" width="12" height="120" fill="#eee8d8" /><polygon points="655,390 988,385 988,478 655,478" fill="#eadfc4" /><rect x="880" y="335" width="95" height="25" fill="#7a6a30" /><rect x="745" y="345" width="60" height="20" fill="#d8a040" /><g stroke="#c48c50" stroke-width="10" fill="none" stroke-linecap="round" filter="url(#bl46)"><path d="M720,430 L750,345 L800,395 L730,440 L800,445"/><path d="M810,400 Q840,370 870,410 Q900,440 950,400 Q980,380 960,430 Q900,450 830,430"/></g></g></g><rect x="558" y="162" width="424" height="46" fill="#9baa99" /><rect x="558" y="208" width="424" height="32" fill="#c9c9c9" /><rect x="558" y="240" width="424" height="32" fill="#ececec" /><rect x="558" y="272" width="424" height="30" fill="#c9c9c9" /><text x="578" y="193" font-size="14" fill="#fff" class="c" text-anchor="start" textLength="80" lengthAdjust="spacingAndGlyphs" >艺术的征途</text><text x="83" y="529.482" font-size="6.45" fill="#5c5c5c" class="c" textLength="240" lengthAdjust="spacingAndGlyphs" opacity="0.72">在这里每一位创业者都能找到属于自己的舞台空中花园会呼吸的办公室将</text><text x="83" y="549.982" font-size="6.45" fill="#5c5c5c" class="c" textLength="330" lengthAdjust="spacingAndGlyphs" opacity="0.72">源为企业提供高效舒适的办公环境项目整体规划以人为本融合绿色生态与现代设计理念打造集办公展</text><text x="83" y="570.482" font-size="6.45" fill="#5c5c5c" class="c" textLength="130" lengthAdjust="spacingAndGlyphs" opacity="0.72">享受在这里每一位创业者都能找到属于</text><text x="83" y="590.982" font-size="6.45" fill="#5c5c5c" class="c" textLength="225" lengthAdjust="spacingAndGlyphs" opacity="0.72">计理念打造集办公展览会议休闲娱乐于一体的综合性创意产业园区开</text><text x="558" y="533.482" font-size="6.45" fill="#5c5c5c" class="c" textLength="190" lengthAdjust="spacingAndGlyphs" opacity="0.72">境项目整体规划以人为本融合绿色生态与现代设计理念打</text><text x="558" y="543.082" font-size="6.45" fill="#5c5c5c" class="c" textLength="190" lengthAdjust="spacingAndGlyphs" opacity="0.72">办公室将自然引入室内阳光空气绿植环绕让身心得到放松</text><text x="558" y="552.683" font-size="6.45" fill="#5c5c5c" class="c" textLength="190" lengthAdjust="spacingAndGlyphs" opacity="0.72">边汇聚商业金融文化资源为企业提供高效舒适的办公环境</text><text x="558" y="562.282" font-size="6.45" fill="#5c5c5c" class="c" textLength="190" lengthAdjust="spacingAndGlyphs" opacity="0.72">会议休闲娱乐于一体的综合性创意产业园区开放式空间布</text><text x="558" y="571.882" font-size="6.45" fill="#5c5c5c" class="c" textLength="190" lengthAdjust="spacingAndGlyphs" opacity="0.72">公环境项目整体规划以人为本融合绿色生态与现代设计理</text><text x="558" y="581.482" font-size="6.45" fill="#5c5c5c" class="c" textLength="190" lengthAdjust="spacingAndGlyphs" opacity="0.72">规划以人为本融合绿色生态与现代设计理念打造集办公展</text><text x="558" y="591.082" font-size="6.45" fill="#5c5c5c" class="c" textLength="114" lengthAdjust="spacingAndGlyphs" opacity="0.72">协作让工作成为一种享受在这里每</text><text x="765" y="533.482" font-size="6.45" fill="#5c5c5c" class="c" textLength="190" lengthAdjust="spacingAndGlyphs" opacity="0.72">公空间位于城市核心地段交通便利配套完善周边汇聚商业</text><text x="765" y="543.082" font-size="6.45" fill="#5c5c5c" class="c" textLength="190" lengthAdjust="spacingAndGlyphs" opacity="0.72">属于自己的舞台空中花园会呼吸的办公室将自然引入室内</text><text x="765" y="552.683" font-size="6.45" fill="#5c5c5c" class="c" textLength="190" lengthAdjust="spacingAndGlyphs" opacity="0.72">览会议休闲娱乐于一体的综合性创意产业园区开放式空间</text><text x="765" y="562.282" font-size="6.45" fill="#5c5c5c" class="c" textLength="190" lengthAdjust="spacingAndGlyphs" opacity="0.72">际创意办公空间位于城市核心地段交通便利配套完善周边</text><text x="765" y="571.882" font-size="6.45" fill="#5c5c5c" class="c" textLength="190" lengthAdjust="spacingAndGlyphs" opacity="0.72">段交通便利配套完善周边汇聚商业金融文化资源为企业提</text><text x="765" y="581.482" font-size="6.45" fill="#5c5c5c" class="c" textLength="133" lengthAdjust="spacingAndGlyphs" opacity="0.72">受在这里每一位创业者都能找到属于自</text>
</g></svg>
<svg class="t" style="left:510px;top:564px" width="250" height="175" viewBox="0 0 1024 716.8">
<defs><clipPath id="clip15"><rect x="58" y="50" width="932" height="640"/></clipPath></defs>
<g clip-path="url(#clip15)">
<rect x="58" y="50" width="932" height="640" fill="#ffffff" /><text x="90" y="117" font-size="18.1818" fill="#2b5b9c" class="s b" text-anchor="start" textLength="190" lengthAdjust="spacingAndGlyphs" >PRODUCT RELEASE</text><text x="90" y="151" font-size="42.4242" fill="#6b3b82" class="s b" text-anchor="start" textLength="267" lengthAdjust="spacingAndGlyphs" >CONFERENCE</text><defs><filter id="bl50" x="-100%" y="-100%" width="300%" height="300%" color-interpolation-filters="sRGB"><feGaussianBlur stdDeviation="5"/></filter><filter id="bl51" x="-100%" y="-100%" width="300%" height="300%" color-interpolation-filters="sRGB"><feGaussianBlur stdDeviation="12"/></filter></defs><g transform="translate(81.2,159) scale(0.4406 0.4417)"><defs><clipPath id="cp52"><rect x="20" y="18" width="985" height="772"/></clipPath><linearGradient id="lg53" x1="0" y1="0" x2="0" y2="1"><stop offset="0" stop-color="#4a30b0"/><stop offset="0.3" stop-color="#5a40c0"/><stop offset="0.45" stop-color="#2c1c90"/><stop offset="0.62" stop-color="#2a1a70"/><stop offset="1" stop-color="#150c2c"/></linearGradient><filter id="bl54" x="-100%" y="-100%" width="300%" height="300%" color-interpolation-filters="sRGB"><feGaussianBlur stdDeviation="30"/></filter><filter id="bl55" x="-100%" y="-100%" width="300%" height="300%" color-interpolation-filters="sRGB"><feGaussianBlur stdDeviation="8"/></filter></defs><g clip-path="url(#cp52)"><rect x="20" y="18" width="985" height="772" fill="url(#lg53)" /><ellipse cx="720" cy="130" rx="300" ry="110" fill="#8062e4" filter="url(#bl54)" opacity=".85"/><ellipse cx="160" cy="230" rx="180" ry="90" fill="#1c1060" filter="url(#bl54)"/><ellipse cx="640" cy="330" rx="260" ry="50" fill="#1e1268" filter="url(#bl54)" opacity=".8"/><line x1="110" y1="30" x2="300" y2="180" stroke="#cdbcf6" stroke-width="5" opacity=".7"/><line x1="330" y1="25" x2="470" y2="200" stroke="#cdbcf6" stroke-width="5" opacity=".7"/><line x1="540" y1="25" x2="640" y2="230" stroke="#cdbcf6" stroke-width="5" opacity=".7"/><line x1="770" y1="25" x2="760" y2="240" stroke="#cdbcf6" stroke-width="5" opacity=".7"/><line x1="990" y1="30" x2="880" y2="250" stroke="#cdbcf6" stroke-width="5" opacity=".7"/><line x1="30" y1="90" x2="1000" y2="60" stroke="#cdbcf6" stroke-width="5" opacity=".7"/><line x1="60" y1="190" x2="260" y2="160" stroke="#cdbcf6" stroke-width="5" opacity=".7"/><line x1="520" y1="320" x2="1000" y2="250" stroke="#cdbcf6" stroke-width="5" opacity=".7"/><line x1="250" y1="70" x2="200" y2="160" stroke="#cdbcf6" stroke-width="5" opacity=".7"/><polygon points="306,312 334,312 335,200 329,200" fill="#f0eaff" opacity=".8" filter="url(#bl55)"/><polygon points="352,316 380,316 423,215 417,215" fill="#f0eaff" opacity=".8" filter="url(#bl55)"/><polygon points="391,321 419,321 503,235 497,235" fill="#f0eaff" opacity=".8" filter="url(#bl55)"/><polygon points="438,326 466,326 563,262 557,262" fill="#f0eaff" opacity=".8" filter="url(#bl55)"/><polygon points="486,331 514,331 643,292 637,292" fill="#f0eaff" opacity=".8" filter="url(#bl55)"/><rect x="20" y="370" width="230" height="160" fill="#2c40dc" /><rect x="20" y="350" width="210" height="35" fill="#48b4fa" filter="url(#bl55)"/><rect x="34" y="385" width="12" height="135" fill="#dcdcff" opacity=".85"/><rect x="61" y="385" width="12" height="135" fill="#dcdcff" opacity=".85"/><rect x="88" y="385" width="12" height="135" fill="#dcdcff" opacity=".85"/><rect x="115" y="385" width="12" height="135" fill="#dcdcff" opacity=".85"/><rect x="142" y="385" width="12" height="135" fill="#dcdcff" opacity=".85"/><rect x="169" y="385" width="12" height="135" fill="#dcdcff" opacity=".85"/><rect x="196" y="385" width="12" height="135" fill="#dcdcff" opacity=".85"/><rect x="223" y="385" width="12" height="135" fill="#dcdcff" opacity=".85"/><rect x="790" y="390" width="215" height="140" fill="#2222c4" /><rect x="840" y="370" width="165" height="30" fill="#38a4f4" filter="url(#bl55)"/><rect x="670" y="400" width="120" height="120" fill="#4a48d8" /><rect x="684" y="405" width="10" height="105" fill="#d0d0ff" opacity=".75"/><rect x="705" y="405" width="10" height="105" fill="#d0d0ff" opacity=".75"/><rect x="726" y="405" width="10" height="105" fill="#d0d0ff" opacity=".75"/><rect x="747" y="405" width="10" height="105" fill="#d0d0ff" opacity=".75"/><rect x="768" y="405" width="10" height="105" fill="#d0d0ff" opacity=".75"/><rect x="300" y="345" width="240" height="73" fill="#3a2894" /><rect x="345" y="372" width="165" height="33" fill="#e07cc4" filter="url(#bl55)"/><rect x="250" y="418" width="410" height="122" fill="#faf0fc" filter="url(#bl55)"/><rect x="330" y="430" width="310" height="105" fill="#ffffff" filter="url(#bl55)"/><rect x="258" y="425" width="77" height="95" fill="#58d0e0" filter="url(#bl55)"/><rect x="20" y="540" width="985" height="250" fill="#1a1230" /><rect x="20" y="520" width="985" height="40" fill="#7040a8" filter="url(#bl55)" opacity=".55"/><ellipse cx="634.215" cy="728.357" rx="41.4524" ry="31.8865" fill="#8676a8" opacity="0.38" filter="url(#bl55)"/><ellipse cx="747.702" cy="764.465" rx="47.5546" ry="36.5804" fill="#54447a" opacity="0.25" filter="url(#bl55)"/><ellipse cx="945.056" cy="709.795" rx="38.3153" ry="29.4733" fill="#8676a8" opacity="0.15" filter="url(#bl55)"/><ellipse cx="484.997" cy="629.315" rx="24.7142" ry="19.0109" fill="#54447a" opacity="0.28" filter="url(#bl55)"/><ellipse cx="42.7208" cy="623.346" rx="23.7055" ry="18.235" fill="#54447a" opacity="0.38" filter="url(#bl55)"/><ellipse cx="772.754" cy="611.921" rx="21.7746" ry="16.7497" fill="#8676a8" opacity="0.16" filter="url(#bl55)"/><ellipse cx="628.929" cy="605.34" rx="20.6624" ry="15.8942" fill="#54447a" opacity="0.36" filter="url(#bl55)"/><ellipse cx="233.173" cy="623.096" rx="23.6633" ry="18.2025" fill="#8676a8" opacity="0.36" filter="url(#bl55)"/><ellipse cx="310.626" cy="772.296" rx="48.878" ry="37.5984" fill="#54447a" opacity="0.31" filter="url(#bl55)"/><ellipse cx="228.636" cy="768.195" rx="48.185" ry="37.0654" fill="#54447a" opacity="0.39" filter="url(#bl55)"/><ellipse cx="896.929" cy="639.758" rx="26.4791" ry="20.3685" fill="#54447a" opacity="0.17" filter="url(#bl55)"/><ellipse cx="171.331" cy="593.028" rx="18.5817" ry="14.2936" fill="#54447a" opacity="0.29" filter="url(#bl55)"/><ellipse cx="33.2816" cy="715.587" rx="39.2942" ry="30.2263" fill="#54447a" opacity="0.21" filter="url(#bl55)"/><ellipse cx="823.963" cy="676.149" rx="32.6292" ry="25.0994" fill="#54447a" opacity="0.25" filter="url(#bl55)"/><ellipse cx="713.529" cy="591.4" rx="18.3066" ry="14.082" fill="#8676a8" opacity="0.13" filter="url(#bl55)"/><ellipse cx="757.301" cy="748.976" rx="44.937" ry="34.5669" fill="#54447a" opacity="0.34" filter="url(#bl55)"/><ellipse cx="385.199" cy="695.704" rx="35.9339" ry="27.6415" fill="#54447a" opacity="0.13" filter="url(#bl55)"/><ellipse cx="205.492" cy="771.036" rx="48.6651" ry="37.4347" fill="#54447a" opacity="0.33" filter="url(#bl55)"/><ellipse cx="931.766" cy="768.409" rx="48.2211" ry="37.0931" fill="#54447a" opacity="0.22" filter="url(#bl55)"/><ellipse cx="538.961" cy="735.121" rx="42.5954" ry="32.7657" fill="#54447a" opacity="0.33" filter="url(#bl55)"/><ellipse cx="803.31" cy="751.939" rx="45.4377" ry="34.9521" fill="#54447a" opacity="0.38" filter="url(#bl55)"/><ellipse cx="118.444" cy="648.148" rx="27.897" ry="21.4593" fill="#54447a" opacity="0.38" filter="url(#bl55)"/><ellipse cx="359.761" cy="764.84" rx="47.6179" ry="36.6291" fill="#54447a" opacity="0.21" filter="url(#bl55)"/><ellipse cx="337.296" cy="615.496" rx="22.3787" ry="17.2144" fill="#54447a" opacity="0.16" filter="url(#bl55)"/><ellipse cx="698.499" cy="779.345" rx="50.0694" ry="38.5149" fill="#54447a" opacity="0.13" filter="url(#bl55)"/><ellipse cx="987.098" cy="686.706" rx="34.4133" ry="26.4718" fill="#54447a" opacity="0.19" filter="url(#bl55)"/><ellipse cx="606.141" cy="745.259" rx="44.3088" ry="34.0837" fill="#54447a" opacity="0.24" filter="url(#bl55)"/><ellipse cx="84.036" cy="763.214" rx="47.3431" ry="36.4178" fill="#54447a" opacity="0.26" filter="url(#bl55)"/><ellipse cx="843.276" cy="606.114" rx="20.7933" ry="15.9949" fill="#8676a8" opacity="0.39" filter="url(#bl55)"/><ellipse cx="641.487" cy="737.602" rx="43.0147" ry="33.0882" fill="#54447a" opacity="0.24" filter="url(#bl55)"/><ellipse cx="174.768" cy="748.947" rx="44.932" ry="34.5631" fill="#54447a" opacity="0.25" filter="url(#bl55)"/><ellipse cx="999.321" cy="750.451" rx="45.1861" ry="34.7586" fill="#8676a8" opacity="0.25" filter="url(#bl55)"/><ellipse cx="503.514" cy="725.901" rx="41.0373" ry="31.5671" fill="#54447a" opacity="0.20" filter="url(#bl55)"/><ellipse cx="421.676" cy="609.301" rx="21.3319" ry="16.4092" fill="#54447a" opacity="0.40" filter="url(#bl55)"/><ellipse cx="961.021" cy="705.393" rx="37.5714" ry="28.9011" fill="#54447a" opacity="0.21" filter="url(#bl55)"/><ellipse cx="116.463" cy="634.462" rx="25.5841" ry="19.6801" fill="#8676a8" opacity="0.36" filter="url(#bl55)"/><ellipse cx="380.486" cy="737.205" rx="42.9476" ry="33.0366" fill="#8676a8" opacity="0.31" filter="url(#bl55)"/><ellipse cx="674.098" cy="731.928" rx="42.0558" ry="32.3506" fill="#54447a" opacity="0.32" filter="url(#bl55)"/><ellipse cx="302.426" cy="677.137" rx="32.7962" ry="25.2278" fill="#8676a8" opacity="0.31" filter="url(#bl55)"/><ellipse cx="315.036" cy="769.11" rx="48.3395" ry="37.1842" fill="#54447a" opacity="0.28" filter="url(#bl55)"/><ellipse cx="41.2332" cy="689.398" rx="34.8683" ry="26.8218" fill="#54447a" opacity="0.31" filter="url(#bl55)"/><ellipse cx="479.051" cy="743.336" rx="43.9838" ry="33.8337" fill="#54447a" opacity="0.34" filter="url(#bl55)"/><ellipse cx="367.448" cy="708.813" rx="38.1493" ry="29.3456" fill="#8676a8" opacity="0.35" filter="url(#bl55)"/><ellipse cx="369.544" cy="748.576" rx="44.8693" ry="34.5149" fill="#8676a8" opacity="0.31" filter="url(#bl55)"/><ellipse cx="976.839" cy="771.303" rx="48.7103" ry="37.4694" fill="#54447a" opacity="0.27" filter="url(#bl55)"/><ellipse cx="191.187" cy="747.324" rx="44.6578" ry="34.3521" fill="#8676a8" opacity="0.25" filter="url(#bl55)"/></g></g><g transform="translate(73.7,147.5) scale(0.76)"><defs><clipPath id="cp56"><rect x="650" y="255" width="335" height="220"/></clipPath></defs><g clip-path="url(#cp56)"><rect x="650" y="255" width="335" height="220" fill="#1a1412" /><line x1="650" y1="270" x2="985" y2="262" stroke="#3a2a24" stroke-width="3" /><line x1="650" y1="282" x2="985" y2="278" stroke="#3a2a24" stroke-width="3" /><line x1="650" y1="294" x2="985" y2="294" stroke="#3a2a24" stroke-width="3" /><line x1="650" y1="306" x2="985" y2="310" stroke="#3a2a24" stroke-width="3" /><line x1="650" y1="318" x2="985" y2="326" stroke="#3a2a24" stroke-width="3" /><polygon points="650,330 700,312 790,320 790,450 650,455" fill="#d4cccc" /><rect x="655" y="360" width="35" height="50" fill="#a83a30" /><rect x="720" y="335" width="50" height="65" fill="#c04030" /><rect x="735" y="345" width="25" height="50" fill="#e8d8c8" /><polygon points="768,255 815,262 815,335 768,320" fill="#dfe8f4" /><polygon points="775,268 810,274 810,315 775,305" fill="#3a70c0" /><ellipse cx="905" cy="355" rx="25" ry="18" fill="#e0a040" filter="url(#bl50)"/><ellipse cx="870" cy="375" rx="20" ry="12" fill="#d8c8e8" filter="url(#bl50)"/><polygon points="650,445 740,440 760,475 650,475" fill="#c2301e" /><polygon points="880,440 985,435 985,475 880,475" fill="#a02818" /><ellipse cx="703" cy="407" rx="10.8333" ry="14" fill="#0e0c0c" /><rect x="690" y="413" width="26" height="62" fill="#0e0c0c" rx="8"/><ellipse cx="757" cy="387" rx="14.1667" ry="14" fill="#0e0c0c" /><rect x="740" y="393" width="34" height="82" fill="#0e0c0c" rx="8"/><ellipse cx="797" cy="382" rx="14.1667" ry="14" fill="#0e0c0c" /><rect x="780" y="388" width="34" height="87" fill="#0e0c0c" rx="8"/><ellipse cx="840" cy="377" rx="20.8333" ry="14" fill="#0e0c0c" /><rect x="815" y="383" width="50" height="92" fill="#0e0c0c" rx="8"/><ellipse cx="887" cy="392" rx="14.1667" ry="14" fill="#0e0c0c" /><rect x="870" y="398" width="34" height="77" fill="#0e0c0c" rx="8"/><ellipse cx="927.5" cy="377" rx="18.75" ry="14" fill="#0e0c0c" /><rect x="905" y="383" width="45" height="92" fill="#0e0c0c" rx="8"/><ellipse cx="967.5" cy="382" rx="14.5833" ry="14" fill="#0e0c0c" /><rect x="950" y="388" width="35" height="87" fill="#0e0c0c" rx="8"/><ellipse cx="885" cy="392" rx="9" ry="11" fill="#b08060" /></g></g><rect x="567" y="167" width="423" height="46" fill="#9990c2" /><rect x="567" y="213" width="423" height="32" fill="#c9c9c9" /><rect x="567" y="245" width="423" height="32" fill="#ececec" /><rect x="567" y="277" width="423" height="30" fill="#c9c9c9" /><text x="587" y="197" font-size="14" fill="#fff" class="c" text-anchor="start" textLength="80" lengthAdjust="spacingAndGlyphs" >产品发布会</text><text x="90" y="580.848" font-size="6.88" fill="#5b8bc4" class="c" textLength="288" lengthAdjust="spacingAndGlyphs" opacity="0.72">利配套完善周边汇聚商业金融文化资源为企业提供高效舒适的办公环境项目整体规</text><text x="90" y="597.848" font-size="6.88" fill="#5b8bc4" class="c" textLength="279.36" lengthAdjust="spacingAndGlyphs" opacity="0.72">花园会呼吸的办公室将自然引入室内阳光空气绿植环绕让身心得到放松效率随</text><text x="567" y="538.482" font-size="6.45" fill="#5c5c5c" class="c" textLength="190" lengthAdjust="spacingAndGlyphs" opacity="0.72">局激发团队灵感促进交流协作让工作成为一种享受在这里</text><text x="567" y="548.082" font-size="6.45" fill="#5c5c5c" class="c" textLength="190" lengthAdjust="spacingAndGlyphs" opacity="0.72">每一位创业者都能找到属于自己的舞台空中花园会呼吸的</text><text x="567" y="557.683" font-size="6.45" fill="#5c5c5c" class="c" textLength="190" lengthAdjust="spacingAndGlyphs" opacity="0.72">自己的舞台空中花园会呼吸的办公室将自然引入室内阳光</text><text x="567" y="567.282" font-size="6.45" fill="#5c5c5c" class="c" textLength="190" lengthAdjust="spacingAndGlyphs" opacity="0.72">找到属于自己的舞台空中花园会呼吸的办公室将自然引入</text><text x="567" y="576.882" font-size="6.45" fill="#5c5c5c" class="c" textLength="190" lengthAdjust="spacingAndGlyphs" opacity="0.72">属于自己的舞台空中花园会呼吸的办公室将自然引入室内</text><text x="567" y="586.482" font-size="6.45" fill="#5c5c5c" class="c" textLength="190" lengthAdjust="spacingAndGlyphs" opacity="0.72">中花园会呼吸的办公室将自然引入室内阳光空气绿植环绕</text><text x="567" y="596.082" font-size="6.45" fill="#5c5c5c" class="c" textLength="190" lengthAdjust="spacingAndGlyphs" opacity="0.72">与现代设计理念打造集办公展览会议休闲娱乐于一体的综</text><text x="567" y="605.683" font-size="6.45" fill="#5c5c5c" class="c" textLength="142.5" lengthAdjust="spacingAndGlyphs" opacity="0.72">植环绕让身心得到放松效率随之提升国际</text><text x="772" y="538.482" font-size="6.45" fill="#5c5c5c" class="c" textLength="190" lengthAdjust="spacingAndGlyphs" opacity="0.72">种享受在这里每一位创业者都能找到属于自己的舞台空中</text><text x="772" y="548.082" font-size="6.45" fill="#5c5c5c" class="c" textLength="190" lengthAdjust="spacingAndGlyphs" opacity="0.72">自己的舞台空中花园会呼吸的办公室将自然引入室内阳光</text><text x="772" y="557.683" font-size="6.45" fill="#5c5c5c" class="c" textLength="190" lengthAdjust="spacingAndGlyphs" opacity="0.72">体的综合性创意产业园区开放式空间布局激发团队灵感促</text><text x="772" y="567.282" font-size="6.45" fill="#5c5c5c" class="c" textLength="28.5" lengthAdjust="spacingAndGlyphs" opacity="0.72">聚商业</text><text x="772" y="576.482" font-size="6.45" fill="#5c5c5c" class="c" textLength="190" lengthAdjust="spacingAndGlyphs" opacity="0.72">能找到属于自己的舞台空中花园会呼吸的办公室将自然引</text><text x="772" y="586.082" font-size="6.45" fill="#5c5c5c" class="c" textLength="123.5" lengthAdjust="spacingAndGlyphs" opacity="0.72">适的办公环境项目整体规划以人为本</text>
</g></svg>
<svg class="t" style="left:750px;top:564px" width="250" height="175" viewBox="0 0 1024 716.8">
<defs><clipPath id="clip16"><rect x="57" y="40" width="933" height="635"/></clipPath></defs>
<g clip-path="url(#clip16)">
<rect x="57" y="40" width="933" height="635" fill="#ffffff" /><defs><filter id="bl57" x="-100%" y="-100%" width="300%" height="300%" color-interpolation-filters="sRGB"><feGaussianBlur stdDeviation="3"/></filter><filter id="bl58" x="-100%" y="-100%" width="300%" height="300%" color-interpolation-filters="sRGB"><feGaussianBlur stdDeviation="9"/></filter></defs><defs><clipPath id="cp59"><rect x="57" y="40" width="465" height="635"/></clipPath></defs><g clip-path="url(#cp59)"><rect x="57" y="40" width="465" height="635" fill="#050508" /><g transform="translate(49.2,32.8) scale(0.6894)"><circle cx="276" cy="227" r="2" fill="#3a3a5a"/><circle cx="346" cy="249" r="2" fill="#3a3a5a"/><circle cx="482" cy="45" r="2" fill="#3a3a5a"/><circle cx="157" cy="338" r="2" fill="#3a3a5a"/><circle cx="287" cy="109" r="2" fill="#3a3a5a"/><circle cx="678" cy="199" r="2" fill="#3a3a5a"/><circle cx="593" cy="201" r="2" fill="#3a3a5a"/><circle cx="489" cy="77" r="2" fill="#3a3a5a"/><circle cx="486" cy="350" r="2" fill="#3a3a5a"/><circle cx="427" cy="302" r="2" fill="#3a3a5a"/><circle cx="506" cy="44" r="2" fill="#3a3a5a"/><circle cx="552" cy="245" r="2" fill="#3a3a5a"/><circle cx="310" cy="32" r="2" fill="#3a3a5a"/><circle cx="609" cy="200" r="2" fill="#3a3a5a"/><circle cx="531" cy="354" r="2" fill="#3a3a5a"/><circle cx="528" cy="370" r="2" fill="#3a3a5a"/><circle cx="359" cy="324" r="2" fill="#3a3a5a"/><circle cx="386" cy="376" r="2" fill="#3a3a5a"/><circle cx="616" cy="57" r="2" fill="#3a3a5a"/><circle cx="222" cy="102" r="2" fill="#3a3a5a"/><circle cx="662" cy="186" r="2" fill="#3a3a5a"/><circle cx="482" cy="134" r="2" fill="#3a3a5a"/><circle cx="419" cy="167" r="2" fill="#3a3a5a"/><circle cx="336" cy="242" r="2" fill="#3a3a5a"/><circle cx="460" cy="364" r="2" fill="#3a3a5a"/><circle cx="511" cy="373" r="2" fill="#3a3a5a"/><circle cx="604" cy="397" r="2" fill="#3a3a5a"/><circle cx="506" cy="82" r="2" fill="#3a3a5a"/><circle cx="606" cy="387" r="2" fill="#3a3a5a"/><circle cx="629" cy="236" r="2" fill="#3a3a5a"/><circle cx="528" cy="100" r="2" fill="#3a3a5a"/><circle cx="591" cy="238" r="2" fill="#3a3a5a"/><circle cx="301" cy="44" r="2" fill="#3a3a5a"/><circle cx="603" cy="396" r="2" fill="#3a3a5a"/><circle cx="197" cy="324" r="2" fill="#3a3a5a"/><circle cx="368" cy="77" r="2" fill="#3a3a5a"/><circle cx="306" cy="312" r="2" fill="#3a3a5a"/><circle cx="613" cy="37" r="2" fill="#3a3a5a"/><circle cx="476" cy="37" r="2" fill="#3a3a5a"/><circle cx="531" cy="146" r="2" fill="#3a3a5a"/><circle cx="617" cy="393" r="2" fill="#3a3a5a"/><circle cx="418" cy="399" r="2" fill="#3a3a5a"/><circle cx="314" cy="49" r="2" fill="#3a3a5a"/><circle cx="468" cy="32" r="2" fill="#3a3a5a"/><circle cx="255" cy="175" r="2" fill="#3a3a5a"/><circle cx="474" cy="79" r="2" fill="#3a3a5a"/><circle cx="172" cy="350" r="2" fill="#3a3a5a"/><circle cx="316" cy="384" r="2" fill="#3a3a5a"/><circle cx="625" cy="164" r="2" fill="#3a3a5a"/><circle cx="394" cy="218" r="2" fill="#3a3a5a"/><circle cx="491" cy="246" r="2" fill="#3a3a5a"/><circle cx="446" cy="256" r="2" fill="#3a3a5a"/><circle cx="649" cy="213" r="2" fill="#3a3a5a"/><circle cx="379" cy="294" r="2" fill="#3a3a5a"/><circle cx="276" cy="134" r="2" fill="#3a3a5a"/><circle cx="668" cy="218" r="2" fill="#3a3a5a"/><circle cx="441" cy="24" r="2" fill="#3a3a5a"/><circle cx="370" cy="240" r="2" fill="#3a3a5a"/><circle cx="161" cy="254" r="2" fill="#3a3a5a"/><circle cx="485" cy="43" r="2" fill="#3a3a5a"/><g filter="url(#bl57)"><rect x="300" y="640" width="160" height="10" fill="#6a6a70" /><rect x="275" y="690" width="195" height="10" fill="#6a6a70" /><rect x="250" y="740" width="230" height="10" fill="#6a6a70" /><rect x="225" y="790" width="265" height="10" fill="#6a6a70" /><rect x="200" y="840" width="300" height="10" fill="#6a6a70" /><polygon points="15,440 120,440 150,520 120,650 15,650" fill="#1c2430" /><polygon points="15,650 110,640 160,760 150,900 15,900" fill="#1a2238" /><ellipse cx="45" cy="705" rx="28" ry="24" fill="#3a90f0" /><ellipse cx="45" cy="705" rx="12" ry="10" fill="#c0e0ff" /><polygon points="20,300 110,290 130,420 20,430" fill="#223052" /><ellipse cx="60" cy="285" rx="40" ry="16" fill="#1e2a44" /><ellipse cx="62" cy="310" rx="20" ry="20" fill="#d8ac8c" /><polygon points="50,110 70,40 85,40 75,110" fill="#d8ac8c" /><polygon points="95,120 105,50 122,55 120,130 105,165" fill="#d8ac8c" /><ellipse cx="75" cy="105" rx="24" ry="28" fill="#e8c8a0" /><ellipse cx="72" cy="95" rx="26" ry="18" fill="#e0c070" /><polygon points="35,160 100,150 110,290 25,300" fill="#1c3cc4" /><polygon points="255,200 245,135 262,130 285,200" fill="#d8ac8c" /><ellipse cx="255" cy="235" rx="38" ry="50" fill="#c8a060" /><ellipse cx="250" cy="240" rx="18" ry="22" fill="#d8ac8c" /><polygon points="200,295 290,285 300,400 195,405" fill="#1a6a4c" /><polygon points="170,290 240,270 250,300 180,320" fill="#d8ac8c" /><polygon points="330,140 350,135 375,210 350,230" fill="#2c3c6c" /><ellipse cx="390" cy="185" rx="32" ry="14" fill="#1c2440" /><ellipse cx="392" cy="205" rx="18" ry="20" fill="#d8ac8c" /><polygon points="345,230 440,220 450,330 350,340" fill="#2a3a6a" /><polygon points="430,180 445,175 460,225 448,230" fill="#888888" /><ellipse cx="345" cy="255" rx="30" ry="14" fill="#1a8a6a" /><ellipse cx="345" cy="280" rx="18" ry="20" fill="#d8ac8c" /><polygon points="300,300 390,300 380,380 300,380" fill="#1a5a4a" /><ellipse cx="300" cy="315" rx="36" ry="18" fill="#1c2438" /><ellipse cx="590" cy="270" rx="20" ry="24" fill="#b88050" /><ellipse cx="590" cy="252" rx="20" ry="12" fill="#1a1a1a" /><polygon points="548,310 640,300 650,400 555,400" fill="#c8902c" /><polygon points="548,320 570,310 640,335 632,352" fill="#d8a070" /><line x1="630" y1="335" x2="690" y2="310" stroke="#d8d8d8" stroke-width="4" /><ellipse cx="600" cy="430" rx="70" ry="34" fill="#d8801c" /><ellipse cx="660" cy="450" rx="24" ry="30" fill="#e0a030" /><polygon points="235,430 320,430 330,600 300,770 240,770" fill="#1c2436" /><ellipse cx="270" cy="420" rx="22" ry="22" fill="#1a1e28" /><ellipse cx="150" cy="425" rx="34" ry="42" fill="#e03028" /><ellipse cx="152" cy="440" rx="16" ry="20" fill="#d8ac8c" /><polygon points="125,480 200,470 225,600 215,700 120,700 130,600" fill="#a8a01c" /><polygon points="140,520 190,510 200,640 150,650" fill="#d8c830" opacity=".7"/><polygon points="125,480 140,480 135,600 120,610" fill="#d8ac8c" /><polygon points="195,480 215,470 222,590 205,600" fill="#d8ac8c" /><polygon points="140,700 165,700 185,830 165,835" fill="#d8ac8c" /><polygon points="200,700 220,700 235,820 215,825" fill="#d8ac8c" /><ellipse cx="360" cy="445" rx="34" ry="40" fill="#ecdcc4" /><ellipse cx="360" cy="455" rx="16" ry="20" fill="#d8ac8c" /><polygon points="330,490 395,485 400,560 340,560" fill="#c85a20" /><polygon points="335,495 350,495 345,600 325,600" fill="#d8ac8c" /><polygon points="380,495 395,495 390,600 375,590" fill="#d8ac8c" /><polygon points="335,560 400,560 415,700 405,770 300,760 310,650" fill="#c04c1c" /><polygon points="330,620 390,620 400,740 320,740" fill="#e8903c" opacity=".7"/><polygon points="320,770 345,765 290,880 265,875" fill="#d8ac8c" /><polygon points="370,770 395,765 385,880 365,880" fill="#d8ac8c" /><ellipse cx="487" cy="455" rx="36" ry="44" fill="#e8dcc8" /><polygon points="470,500 530,490 545,600 470,610" fill="#d8ac8c" /><polygon points="480,410 500,370 515,380 505,440" fill="#d8ac8c" /><polygon points="455,600 560,595 570,720 540,775 455,760" fill="#a4a4c4" /><polygon points="470,640 540,630 545,740 475,740" fill="#d8d8f0" opacity=".6"/><polygon points="480,775 505,770 500,880 470,885" fill="#d8ac8c" /><ellipse cx="610" cy="450" rx="28" ry="34" fill="#1e1a1e" /><ellipse cx="608" cy="460" rx="14" ry="18" fill="#d8ac8c" /><polygon points="575,500 650,495 655,590 570,590" fill="#2a2040" /><polygon points="540,540 620,560 615,580 535,565" fill="#d8ac8c" /><polygon points="565,585 650,580 660,740 560,740" fill="#4a2cd4" /><polygon points="580,620 640,615 645,720 585,720" fill="#7a60f0" opacity=".6"/><polygon points="600,745 625,745 650,880 630,885" fill="#d8ac8c" /></g></g><rect x="57" y="40" width="465" height="635" fill="#000" opacity=".24"/></g><text x="583" y="111" font-size="13" fill="#7a4a9a" class="c b" text-anchor="start" textLength="82" lengthAdjust="spacingAndGlyphs" >LIVE音乐会</text><text x="583" y="163" font-size="52" fill="#5b2b82" class="s b" text-anchor="start" textLength="185" lengthAdjust="spacingAndGlyphs" >Concert</text><line x1="583" y1="186" x2="800" y2="186" stroke="#e8a0d8" stroke-width="1.5" /><line x1="583" y1="194" x2="810" y2="194" stroke="#d8d0e8" stroke-width="1.5" /><text x="583" y="248.482" font-size="6.45" fill="#5c5c5c" class="c" textLength="152" lengthAdjust="spacingAndGlyphs" opacity="0.72">台空中花园会呼吸的办公室将自然引入室内阳</text><text x="583" y="258.783" font-size="6.45" fill="#5c5c5c" class="c" textLength="152" lengthAdjust="spacingAndGlyphs" opacity="0.72">公环境项目整体规划以人为本融合绿色生态与</text><text x="583" y="269.083" font-size="6.45" fill="#5c5c5c" class="c" textLength="152" lengthAdjust="spacingAndGlyphs" opacity="0.72">都能找到属于自己的舞台空中花园会呼吸的办</text><text x="583" y="279.382" font-size="6.45" fill="#5c5c5c" class="c" textLength="152" lengthAdjust="spacingAndGlyphs" opacity="0.72">的综合性创意产业园区开放式空间布局激发团</text><text x="583" y="289.683" font-size="6.45" fill="#5c5c5c" class="c" textLength="106.4" lengthAdjust="spacingAndGlyphs" opacity="0.72">作让工作成为一种享受在这里每</text><text x="742" y="248.482" font-size="6.45" fill="#5c5c5c" class="c" textLength="148" lengthAdjust="spacingAndGlyphs" opacity="0.72">源为企业提供高效舒适的办公环境项目整体</text><text x="742" y="258.783" font-size="6.45" fill="#5c5c5c" class="c" textLength="148" lengthAdjust="spacingAndGlyphs" opacity="0.72">环绕让身心得到放松效率随之提升国际潮流</text><text x="742" y="269.083" font-size="6.45" fill="#5c5c5c" class="c" textLength="148" lengthAdjust="spacingAndGlyphs" opacity="0.72">办公室将自然引入室内阳光空气绿植环绕让</text><text x="742" y="279.382" font-size="6.45" fill="#5c5c5c" class="c" textLength="148" lengthAdjust="spacingAndGlyphs" opacity="0.72">的综合性创意产业园区开放式空间布局激发</text><text x="742" y="289.683" font-size="6.45" fill="#5c5c5c" class="c" textLength="22.2" lengthAdjust="spacingAndGlyphs" opacity="0.72">高效</text><defs><clipPath id="cp60"><rect x="583" y="312" width="309" height="196"/></clipPath></defs><g clip-path="url(#cp60)"><rect x="583" y="312" width="309" height="196" fill="#12123c" /><rect x="583" y="312" width="309" height="48" fill="#0c0c2c" /><ellipse cx="740" cy="400" rx="130" ry="60" fill="#2a2a7a" filter="url(#bl58)"/><ellipse cx="680" cy="386" rx="16" ry="14" fill="#ffffff" filter="url(#bl57)"/><ellipse cx="724" cy="392" rx="18" ry="15" fill="#ffffff" filter="url(#bl57)"/><ellipse cx="700" cy="390" rx="50" ry="30" fill="#a0a0e0" filter="url(#bl58)" opacity=".6"/><ellipse cx="815" cy="420" rx="22" ry="18" fill="#4a80e0" filter="url(#bl58)" opacity=".8"/><ellipse cx="612" cy="428" rx="7" ry="6" fill="#e83060" filter="url(#bl57)"/><ellipse cx="630" cy="408" rx="7" ry="6" fill="#e83060" filter="url(#bl57)"/><ellipse cx="672" cy="425" rx="7" ry="6" fill="#e83060" filter="url(#bl57)"/><ellipse cx="700" cy="448" rx="7" ry="6" fill="#e83060" filter="url(#bl57)"/><ellipse cx="748" cy="415" rx="7" ry="6" fill="#e83060" filter="url(#bl57)"/><ellipse cx="770" cy="440" rx="7" ry="6" fill="#e83060" filter="url(#bl57)"/><ellipse cx="800" cy="410" rx="7" ry="6" fill="#e83060" filter="url(#bl57)"/><ellipse cx="828" cy="415" rx="7" ry="6" fill="#e83060" filter="url(#bl57)"/><ellipse cx="852" cy="355" rx="7" ry="6" fill="#e83060" filter="url(#bl57)"/><ellipse cx="735" cy="450" rx="7" ry="6" fill="#e83060" filter="url(#bl57)"/><ellipse cx="660" cy="455" rx="7" ry="6" fill="#e83060" filter="url(#bl57)"/><polygon points="583,470 640,455 720,465 800,455 892,465 892,508 583,508" fill="#08081c" filter="url(#bl57)"/></g><rect x="525" y="533" width="465" height="44" fill="#e2a2d2" /><rect x="525" y="577" width="465" height="31" fill="#c9c9c9" /><rect x="525" y="608" width="465" height="32" fill="#ececec" /><rect x="525" y="640" width="465" height="35" fill="#c9c9c9" />
</g></svg>
<svg class="t" style="left:30px;top:735px" width="250" height="175" viewBox="0 0 1024 716.8">
<defs><clipPath id="clip17"><rect x="45" y="42" width="935" height="638"/></clipPath></defs>
<g clip-path="url(#clip17)">
<defs><filter id="bl61" x="-100%" y="-100%" width="300%" height="300%" color-interpolation-filters="sRGB"><feGaussianBlur stdDeviation="4"/></filter><filter id="bl62" x="-100%" y="-100%" width="300%" height="300%" color-interpolation-filters="sRGB"><feGaussianBlur stdDeviation="12"/></filter><filter id="bl63" x="-100%" y="-100%" width="300%" height="300%" color-interpolation-filters="sRGB"><feGaussianBlur stdDeviation="2"/></filter></defs><rect x="45" y="42" width="935" height="638" fill="#1c120c" /><polygon points="200,45 950,45 840,250 520,290" fill="#2e1c12" /><polygon points="480,45 940,45 830,240 600,250" fill="#4a3020" filter="url(#bl61)"/><ellipse cx="690" cy="170" rx="110" ry="70" fill="#8a6038" filter="url(#bl62)" opacity=".8"/><line x1="520" y1="50" x2="560" y2="260" stroke="#1c100a" stroke-width="3" opacity=".7"/><line x1="590" y1="50" x2="608" y2="260" stroke="#1c100a" stroke-width="3" opacity=".7"/><line x1="660" y1="50" x2="656" y2="260" stroke="#1c100a" stroke-width="3" opacity=".7"/><line x1="730" y1="50" x2="704" y2="260" stroke="#1c100a" stroke-width="3" opacity=".7"/><line x1="800" y1="50" x2="752" y2="260" stroke="#1c100a" stroke-width="3" opacity=".7"/><line x1="870" y1="50" x2="800" y2="260" stroke="#1c100a" stroke-width="3" opacity=".7"/><line x1="470" y1="60" x2="930" y2="55" stroke="#1c100a" stroke-width="3" opacity=".6"/><line x1="460" y1="100" x2="908" y2="95" stroke="#1c100a" stroke-width="3" opacity=".6"/><line x1="450" y1="140" x2="886" y2="135" stroke="#1c100a" stroke-width="3" opacity=".6"/><line x1="440" y1="180" x2="864" y2="175" stroke="#1c100a" stroke-width="3" opacity=".6"/><line x1="430" y1="220" x2="842" y2="215" stroke="#1c100a" stroke-width="3" opacity=".6"/><polygon points="490,120 640,115 650,140 560,150" fill="#6a4a2a" /><polygon points="560,150 600,210 580,215 480,190" fill="#7a5a38" /><polygon points="985,45 940,60 835,240 845,470 985,530" fill="#7e5e3a" /><polygon points="985,45 940,60 900,130 985,160" fill="#a07c4c" filter="url(#bl61)"/><polygon points="845,400 985,440 985,530 845,470" fill="#6a4a30" /><rect x="870" y="310" width="42" height="80" fill="#2a2420" /><rect x="876" y="318" width="30" height="64" fill="#5a5a60" /><polygon points="935,120 985,100 985,300 950,290" fill="#141a18" /><polygon points="545,275 835,245 845,470 545,470" fill="#74542e" /><polygon points="545,275 835,245 838,330 545,340" fill="#93703f" filter="url(#bl63)"/><rect x="545" y="335" width="300" height="27" fill="#3a2214" /><rect x="560" y="365" width="275" height="105" fill="#5a3a20" /><ellipse cx="690" cy="395" rx="80" ry="40" fill="#c88a40" filter="url(#bl62)" opacity=".8"/><ellipse cx="620" cy="298" rx="18" ry="18" fill="#6a2a1a" /><rect x="556" y="292" width="28" height="36" fill="#2a1e18" /><polygon points="215,150 520,290 545,470 300,520 165,560" fill="#6e5234" /><polygon points="225,170 420,250 430,320 215,290" fill="#94744a" filter="url(#bl63)"/><polygon points="215,300 370,335 370,365 215,340" fill="#3a2a1c" /><rect x="345" y="248" width="60" height="77" fill="#2c241c" /><rect x="352" y="256" width="46" height="62" fill="#8a5a48" /><polygon points="240,360 300,370 300,500 240,520" fill="#1a1410" /><polygon points="315,370 360,375 360,470 315,480" fill="#b88a40" /><polygon points="430,330 530,345 535,400 430,400" fill="#6a4a30" /><rect x="385" y="340" width="45" height="35" fill="#b04a50" /><polygon points="45,45 180,130 195,310 45,260" fill="#16329a" /><polygon points="45,45 130,100 140,230 45,220" fill="#2f5fd0" filter="url(#bl61)"/><polygon points="45,260 195,310 165,560 45,600" fill="#100c0a" /><rect x="70" y="300" width="35" height="65" fill="#c8b8a0" opacity=".8"/><rect x="48" y="392" width="37" height="73" fill="#8a8680" opacity=".8"/><rect x="172" y="355" width="16" height="95" fill="#b8b8a0" filter="url(#bl63)"/><rect x="215" y="390" width="25" height="70" fill="#6a6258" /><ellipse cx="690" cy="180" rx="35.2" ry="51" fill="#f8c878" filter="url(#bl61)" opacity=".7"/><ellipse cx="690" cy="180" rx="15.4" ry="23.8" fill="#fff4d0" filter="url(#bl63)"/><ellipse cx="705" cy="240" rx="22.4" ry="18" fill="#f8c878" filter="url(#bl61)" opacity=".7"/><ellipse cx="705" cy="240" rx="9.8" ry="8.4" fill="#fff4d0" filter="url(#bl63)"/><ellipse cx="715" cy="315" rx="19.2" ry="21" fill="#f8c878" filter="url(#bl61)" opacity=".7"/><ellipse cx="715" cy="315" rx="8.4" ry="9.8" fill="#fff4d0" filter="url(#bl63)"/><ellipse cx="725" cy="360" rx="16" ry="15" fill="#f8c878" filter="url(#bl61)" opacity=".7"/><ellipse cx="725" cy="360" rx="7" ry="7" fill="#fff4d0" filter="url(#bl63)"/><ellipse cx="820" cy="352" rx="16" ry="15" fill="#f8c878" filter="url(#bl61)" opacity=".7"/><ellipse cx="820" cy="352" rx="7" ry="7" fill="#fff4d0" filter="url(#bl63)"/><polygon points="300,520 545,470 845,470 985,530 985,680 45,680 45,600 165,560" fill="#24160e" /><polygon points="700,500 830,500 860,680 660,680" fill="#5a3e2a" filter="url(#bl61)"/><polygon points="365,475 450,465 620,495 600,530 540,540" fill="#8a2a20" /><polygon points="450,468 600,492 590,512 470,490" fill="#4a7a60" filter="url(#bl63)"/><polygon points="365,480 540,540 500,680 380,680" fill="#3a2014" /><polygon points="600,450 660,455 685,530 600,540" fill="#5e7a74" /><ellipse cx="620" cy="435" rx="16" ry="18" fill="#5a4030" /><polygon points="600,535 680,530 690,600 640,610" fill="#2a2a30" /><ellipse cx="648" cy="575" rx="10" ry="12" fill="#c8c8c8" /><ellipse cx="690" cy="440" rx="14" ry="16" fill="#2a5a6a" /><rect x="676" y="452" width="34" height="48" fill="#1e3a4a" /><polygon points="45,620 165,575 300,500 315,520 250,680 45,680" fill="#8a5226" /><polygon points="120,600 170,575 200,680 130,680" fill="#a06a38" /><polygon points="200,560 245,535 270,600 215,640" fill="#a87440" /><polygon points="845,490 985,530 985,680 880,680" fill="#5a3420" /><polygon points="880,520 940,540 950,600 890,590" fill="#8a5030" /><polygon points="45,560 140,548 140,580 45,610" fill="#a8a8b0" opacity=".8"/><defs><radialGradient id="rg64" cx="0.62" cy="0.5" r="0.62"><stop offset="0" stop-color="#1a0e06" stop-opacity="0"/><stop offset="0.45" stop-color="#1a0e06" stop-opacity="0.15"/><stop offset="1" stop-color="#120a05" stop-opacity="0.62"/></radialGradient></defs><rect x="45" y="42" width="935" height="638" fill="url(#rg64)" /><rect x="384.118" y="188.171" width="21.9212" height="6.92983" fill="#24160c" opacity="0.26"/><rect x="628.533" y="257.069" width="33.8005" height="6.35308" fill="#24160c" opacity="0.44"/><rect x="415.812" y="213.886" width="16.1237" height="7.2864" fill="#24160c" opacity="0.54"/><rect x="350.88" y="264.644" width="26.5395" height="10.3914" fill="#c49058" opacity="0.28"/><rect x="594.644" y="215.782" width="23.4718" height="6.53608" fill="#24160c" opacity="0.54"/><rect x="205.625" y="258.018" width="28.0981" height="7.87057" fill="#24160c" opacity="0.32"/><rect x="530.51" y="256.635" width="23.0274" height="7.39935" fill="#c49058" opacity="0.53"/><rect x="233.726" y="167.139" width="26.527" height="7.6826" fill="#24160c" opacity="0.48"/><rect x="746.685" y="203.673" width="27.4756" height="6.39863" fill="#33200f" opacity="0.47"/><rect x="544.099" y="217.97" width="22.7185" height="9.53261" fill="#24160c" opacity="0.32"/><rect x="452.357" y="460.588" width="28.1632" height="7.66487" fill="#24160c" opacity="0.47"/><rect x="385.185" y="272.495" width="17.5508" height="8.75411" fill="#24160c" opacity="0.37"/><rect x="264.436" y="506.856" width="19.7137" height="10.0513" fill="#c49058" opacity="0.26"/><rect x="425.417" y="507.423" width="29.5048" height="8.46257" fill="#24160c" opacity="0.49"/><rect x="260.65" y="378.56" width="31.8817" height="7.75197" fill="#c49058" opacity="0.38"/><rect x="950.215" y="272.584" width="14.1879" height="6.26878" fill="#33200f" opacity="0.38"/><rect x="645.735" y="312.551" width="18.1447" height="11.4992" fill="#24160c" opacity="0.27"/><rect x="243.111" y="212.408" width="27.5365" height="6.89784" fill="#24160c" opacity="0.44"/><rect x="654.479" y="268.93" width="14.7115" height="11.0091" fill="#c49058" opacity="0.52"/><rect x="519.271" y="515.433" width="23.5552" height="7.45117" fill="#4e3218" opacity="0.42"/><rect x="370.868" y="314.096" width="26.9487" height="8.56702" fill="#33200f" opacity="0.42"/><rect x="224.687" y="244.126" width="18.8478" height="7.24839" fill="#33200f" opacity="0.40"/><rect x="404.116" y="270.255" width="31.8205" height="7.8871" fill="#24160c" opacity="0.60"/><rect x="514.31" y="483.352" width="27.0795" height="10.7451" fill="#24160c" opacity="0.42"/><rect x="272.469" y="228.041" width="31.4761" height="11.3986" fill="#33200f" opacity="0.37"/><rect x="735.049" y="249.271" width="32.456" height="11.7377" fill="#24160c" opacity="0.55"/><rect x="418.463" y="382.309" width="17.8252" height="8.3688" fill="#24160c" opacity="0.29"/><rect x="955.457" y="396.86" width="15.2097" height="7.00359" fill="#4e3218" opacity="0.45"/><rect x="370.462" y="151.211" width="32.4472" height="6.07866" fill="#c49058" opacity="0.29"/><rect x="884.745" y="353.725" width="31.5741" height="7.21002" fill="#24160c" opacity="0.37"/><rect x="895.565" y="436.222" width="23.4302" height="9.15845" fill="#24160c" opacity="0.28"/><rect x="742.433" y="191.779" width="25.2161" height="7.54171" fill="#33200f" opacity="0.26"/><rect x="262.158" y="475.257" width="32.1007" height="7.78163" fill="#c49058" opacity="0.54"/><rect x="266.41" y="351.05" width="21.6232" height="10.7243" fill="#c49058" opacity="0.39"/><rect x="512.045" y="178.562" width="32.3151" height="10.7901" fill="#c49058" opacity="0.43"/><rect x="538.484" y="467.402" width="29.5317" height="6.40151" fill="#33200f" opacity="0.47"/><rect x="925.205" y="327.111" width="16.3634" height="9.34975" fill="#c49058" opacity="0.56"/><rect x="337.554" y="205.244" width="23.8851" height="8.03151" fill="#24160c" opacity="0.59"/><rect x="203.806" y="212.422" width="26.9621" height="6.72572" fill="#24160c" opacity="0.42"/><rect x="758.158" y="329.172" width="15.5137" height="7.47265" fill="#c49058" opacity="0.37"/><rect x="675.437" y="265.911" width="32.2558" height="8.80218" fill="#24160c" opacity="0.36"/><rect x="876.67" y="441.134" width="26.26" height="8.65239" fill="#33200f" opacity="0.34"/><rect x="465.234" y="310.358" width="26.1124" height="10.0523" fill="#24160c" opacity="0.31"/><rect x="903.492" y="287.636" width="25.5196" height="8.10265" fill="#24160c" opacity="0.56"/><rect x="260.108" y="388.902" width="32.0857" height="7.97789" fill="#c49058" opacity="0.36"/><rect x="434.453" y="158.573" width="14.402" height="11.6964" fill="#24160c" opacity="0.53"/><rect x="323.603" y="366.142" width="23.9048" height="9.44319" fill="#24160c" opacity="0.52"/><rect x="955.409" y="193.225" width="27.0311" height="10.0524" fill="#33200f" opacity="0.47"/><rect x="848.385" y="262.06" width="32.5564" height="8.43667" fill="#24160c" opacity="0.33"/><rect x="582.072" y="231.814" width="21.3523" height="10.474" fill="#24160c" opacity="0.47"/><rect x="977.23" y="482.637" width="22.0043" height="8.40396" fill="#c49058" opacity="0.35"/><rect x="521.02" y="154.878" width="17.6778" height="9.24119" fill="#24160c" opacity="0.47"/><rect x="484.155" y="501.894" width="26.4646" height="6.93632" fill="#24160c" opacity="0.41"/><rect x="952.747" y="383.313" width="20.9481" height="10.7774" fill="#24160c" opacity="0.51"/><rect x="251.704" y="491.88" width="15.3816" height="6.79586" fill="#24160c" opacity="0.31"/><rect x="404.622" y="344.016" width="17.1504" height="6.58058" fill="#24160c" opacity="0.58"/><rect x="263.916" y="250.133" width="31.5743" height="9.86003" fill="#24160c" opacity="0.56"/><rect x="885.215" y="416.19" width="25.1992" height="10.1626" fill="#24160c" opacity="0.30"/><rect x="521.298" y="229.571" width="19.9624" height="9.04556" fill="#4e3218" opacity="0.31"/><rect x="882.331" y="244.746" width="21.8265" height="10.0928" fill="#4e3218" opacity="0.36"/><rect x="501.708" y="306.542" width="14.561" height="11.2599" fill="#24160c" opacity="0.36"/><rect x="815.782" y="181.753" width="16.3193" height="9.65605" fill="#24160c" opacity="0.33"/><rect x="631.75" y="326.38" width="28.3709" height="7.11057" fill="#4e3218" opacity="0.60"/><rect x="930.956" y="290.4" width="30.9501" height="11.0026" fill="#24160c" opacity="0.32"/><rect x="478.293" y="494.27" width="30.6368" height="8.48047" fill="#24160c" opacity="0.54"/><rect x="365.361" y="364.221" width="30.0456" height="9.5462" fill="#4e3218" opacity="0.47"/><rect x="464.534" y="458.643" width="31.8324" height="11.3592" fill="#24160c" opacity="0.48"/><rect x="475.386" y="180.159" width="28.2702" height="8.98851" fill="#24160c" opacity="0.54"/><rect x="754.585" y="164.418" width="27.5192" height="8.01835" fill="#24160c" opacity="0.57"/><rect x="743.434" y="193.209" width="33.5703" height="10.9601" fill="#24160c" opacity="0.54"/><rect x="255.764" y="233.667" width="19.4844" height="11.7268" fill="#24160c" opacity="0.25"/><rect x="744.191" y="228.863" width="18.9842" height="10.4306" fill="#c49058" opacity="0.54"/><rect x="432.539" y="293.73" width="26.0961" height="6.20425" fill="#4e3218" opacity="0.42"/><rect x="249.858" y="338.932" width="24.1786" height="9.35909" fill="#c49058" opacity="0.53"/><rect x="749.56" y="311.839" width="17.4974" height="6.10767" fill="#4e3218" opacity="0.58"/><rect x="415.237" y="429.64" width="22.1423" height="9.76512" fill="#4e3218" opacity="0.36"/><rect x="683.691" y="244.716" width="24.2224" height="6.1805" fill="#c49058" opacity="0.46"/><rect x="678.08" y="265.728" width="32.7046" height="10.6935" fill="#24160c" opacity="0.28"/><rect x="365.051" y="495.233" width="27.3751" height="11.3433" fill="#4e3218" opacity="0.52"/><rect x="703.486" y="152.943" width="25.4015" height="7.22241" fill="#24160c" opacity="0.34"/><rect x="857.733" y="192.182" width="33.4279" height="7.77962" fill="#24160c" opacity="0.45"/><rect x="317.596" y="426.118" width="27.2341" height="11.9614" fill="#24160c" opacity="0.51"/><rect x="405.084" y="369.656" width="26.6275" height="10.4157" fill="#24160c" opacity="0.55"/><rect x="969.306" y="210.072" width="29.1085" height="6.29708" fill="#24160c" opacity="0.58"/><rect x="244.84" y="484.318" width="28.0864" height="10.0085" fill="#4e3218" opacity="0.29"/><rect x="355.671" y="200.986" width="23.5755" height="9.27694" fill="#24160c" opacity="0.36"/><rect x="535.4" y="300.149" width="14.7242" height="11.5115" fill="#33200f" opacity="0.30"/><rect x="371.015" y="238.161" width="25.4764" height="7.16723" fill="#24160c" opacity="0.49"/><rect x="499.281" y="348.162" width="16.2374" height="7.34704" fill="#c49058" opacity="0.31"/><rect x="616.91" y="157.843" width="16.3556" height="7.78123" fill="#c49058" opacity="0.58"/><rect x="587.918" y="165.301" width="20.1247" height="10.3152" fill="#4e3218" opacity="0.31"/><rect x="976.293" y="378.416" width="21.0128" height="6.03511" fill="#33200f" opacity="0.41"/><rect x="758.697" y="228.245" width="20.6101" height="9.58561" fill="#24160c" opacity="0.56"/><rect x="611.051" y="217.008" width="26.3014" height="9.60055" fill="#24160c" opacity="0.26"/><rect x="715.57" y="291.638" width="18.6271" height="9.51176" fill="#24160c" opacity="0.26"/><rect x="342.71" y="255.657" width="22.7029" height="7.88625" fill="#c49058" opacity="0.31"/><rect x="469.515" y="400.027" width="24.8869" height="11.7523" fill="#c49058" opacity="0.34"/><rect x="461.361" y="348.921" width="24.8816" height="8.19492" fill="#33200f" opacity="0.42"/><rect x="846.368" y="177.357" width="26.553" height="7.17647" fill="#33200f" opacity="0.30"/><rect x="240.12" y="453.415" width="31.4838" height="6.48318" fill="#24160c" opacity="0.52"/><rect x="405.256" y="171.193" width="23.5092" height="11.1957" fill="#33200f" opacity="0.47"/><rect x="787.789" y="173.104" width="16.8089" height="11.5127" fill="#24160c" opacity="0.25"/><rect x="858.937" y="176.657" width="22.6676" height="6.48024" fill="#4e3218" opacity="0.53"/><rect x="225.313" y="223.57" width="27.5517" height="7.17581" fill="#33200f" opacity="0.32"/><rect x="916.212" y="491.456" width="33.9717" height="6.06355" fill="#24160c" opacity="0.58"/><rect x="250.558" y="343.615" width="20.7705" height="7.01115" fill="#33200f" opacity="0.43"/><rect x="250.276" y="311.412" width="16.7099" height="6.62412" fill="#24160c" opacity="0.36"/><rect x="464.707" y="252.521" width="25.7449" height="6.70914" fill="#24160c" opacity="0.27"/><rect x="945.059" y="208.11" width="29.3533" height="9.2715" fill="#4e3218" opacity="0.52"/><rect x="319.036" y="284.125" width="23.1401" height="11.9134" fill="#4e3218" opacity="0.31"/><rect x="644.728" y="221.736" width="33.1536" height="10.103" fill="#24160c" opacity="0.58"/><rect x="552.308" y="273.104" width="20.0807" height="7.89762" fill="#c49058" opacity="0.55"/><rect x="681.453" y="249.558" width="31.2077" height="6.99496" fill="#24160c" opacity="0.55"/><rect x="822.053" y="271.552" width="30.6885" height="7.05896" fill="#24160c" opacity="0.59"/><rect x="441.901" y="342.808" width="14.9294" height="11.6581" fill="#24160c" opacity="0.31"/><rect x="915.564" y="287.968" width="26.8931" height="8.31861" fill="#4e3218" opacity="0.58"/><rect x="537.209" y="337.885" width="20.874" height="6.26185" fill="#33200f" opacity="0.27"/><rect x="203.672" y="517.588" width="22.6835" height="10.4236" fill="#24160c" opacity="0.33"/><rect x="491.69" y="338.108" width="31.5672" height="6.7958" fill="#c49058" opacity="0.38"/><rect x="537.563" y="420.423" width="21.8484" height="6.51858" fill="#4e3218" opacity="0.43"/><rect x="785.956" y="184.078" width="16.0089" height="6.76201" fill="#4e3218" opacity="0.51"/><rect x="447.821" y="397.72" width="31.783" height="8.37536" fill="#24160c" opacity="0.53"/><rect x="465.774" y="288.963" width="24.1855" height="6.46119" fill="#4e3218" opacity="0.40"/><rect x="920.982" y="255.327" width="20.7042" height="6.21323" fill="#33200f" opacity="0.46"/><rect x="804.79" y="235.619" width="24.3593" height="11.5425" fill="#4e3218" opacity="0.40"/><rect x="858.667" y="195.851" width="31.3122" height="6.07048" fill="#4e3218" opacity="0.52"/><polygon points="215,150 520,290 545,470 300,520 165,560" fill="#1a0e06" opacity=".28"/><polygon points="985,45 940,60 835,240 845,470 985,530" fill="#2a1606" opacity=".18"/><polygon points="45,45 150,110 165,300 45,255" fill="#2a52c8" opacity=".75" filter="url(#bl61)"/><polygon points="45,60 100,95 110,200 45,190" fill="#5a8af0" opacity=".55" filter="url(#bl61)"/><line x1="60" y1="260" x2="95" y2="70" stroke="#0a0a1a" stroke-width="5" /><line x1="110" y1="285" x2="75" y2="120" stroke="#0a0a1a" stroke-width="4" /><line x1="140" y1="295" x2="150" y2="140" stroke="#0a0a1a" stroke-width="4" /><line x1="50" y1="150" x2="165" y2="215" stroke="#0a0a1a" stroke-width="4" /><ellipse cx="690" cy="300" rx="150" ry="110" fill="#c87828" opacity=".22" filter="url(#bl62)"/><text x="77" y="122" font-size="41.6667" class="c b" fill="#f0e628" textLength="27.55" lengthAdjust="spacingAndGlyphs">S</text><text x="106" y="103.4" font-size="15.6" class="c b" fill="#fff" textLength="18.85" lengthAdjust="spacingAndGlyphs">东</text><text x="106" y="120.5" font-size="15.6" class="c b" fill="#fff" textLength="18.85" lengthAdjust="spacingAndGlyphs">立</text><text x="129.2" y="122" font-size="41.6667" class="c b" fill="#f07838" textLength="24.65" lengthAdjust="spacingAndGlyphs">h</text><text x="156.75" y="122" font-size="41.6667" class="c b" fill="#e0208a" textLength="26.1" lengthAdjust="spacingAndGlyphs">o</text><text x="185.75" y="122" font-size="41.6667" class="c b" fill="#d82424" textLength="36.25" lengthAdjust="spacingAndGlyphs">w</text>
</g></svg>
<svg class="t" style="left:270px;top:735px" width="250" height="175" viewBox="0 0 1024 716.8">
<defs><clipPath id="clip18"><rect x="50" y="40" width="933" height="638"/></clipPath></defs>
<g clip-path="url(#clip18)">
<rect x="50" y="40" width="933" height="638" fill="#ffffff" /><rect x="50" y="40" width="467" height="638" fill="#3d424f" /><text x="143" y="196" font-size="58" fill="#ffffff" class="s b" text-anchor="start" textLength="154" lengthAdjust="spacingAndGlyphs" >JAZZ</text><text x="187" y="262" font-size="58" fill="#ffffff" class="s b" text-anchor="start" textLength="236" lengthAdjust="spacingAndGlyphs" >PALACE</text><text x="150" y="304" font-size="7.5" fill="#d0d0d0" class="c" text-anchor="start" textLength="120" lengthAdjust="spacingAndGlyphs" >THE PARK OF JAZZ MUSIC"</text><text x="165" y="319" font-size="7.5" fill="#d0d0d0" class="c" text-anchor="start" textLength="230" lengthAdjust="spacingAndGlyphs" >TO THE LIFE, CREATIVE MUSIC BE MANY LOVELY</text><text x="100" y="492" font-size="15" fill="#b28a42" class="c" text-anchor="start" textLength="235" lengthAdjust="spacingAndGlyphs" >东立SHOW——爵士音乐的殿堂</text><text x="100" y="525.482" font-size="6.45" fill="#dddddd" class="c" textLength="177" lengthAdjust="spacingAndGlyphs" opacity="0.72">整体规划以人为本融合绿色生态与现代设计理念打造</text><text x="100" y="535.482" font-size="6.45" fill="#dddddd" class="c" textLength="177" lengthAdjust="spacingAndGlyphs" opacity="0.72">展览会议休闲娱乐于一体的综合性创意产业园区开放</text><text x="100" y="545.482" font-size="6.45" fill="#dddddd" class="c" textLength="177" lengthAdjust="spacingAndGlyphs" opacity="0.72">种享受在这里每一位创业者都能找到属于自己的舞台</text><text x="100" y="555.482" font-size="6.45" fill="#dddddd" class="c" textLength="177" lengthAdjust="spacingAndGlyphs" opacity="0.72">公环境项目整体规划以人为本融合绿色生态与现代设</text><text x="100" y="565.482" font-size="6.45" fill="#dddddd" class="c" textLength="53.1" lengthAdjust="spacingAndGlyphs" opacity="0.72">开放式空间布</text><text x="290" y="525.482" font-size="6.45" fill="#dddddd" class="c" textLength="175" lengthAdjust="spacingAndGlyphs" opacity="0.72">成为一种享受在这里每一位创业者都能找到属于自己</text><text x="290" y="535.482" font-size="6.45" fill="#dddddd" class="c" textLength="175" lengthAdjust="spacingAndGlyphs" opacity="0.72">气绿植环绕让身心得到放松效率随之提升国际潮流趋</text><text x="290" y="545.482" font-size="6.45" fill="#dddddd" class="c" textLength="175" lengthAdjust="spacingAndGlyphs" opacity="0.72">台空中花园会呼吸的办公室将自然引入室内阳光空气</text><text x="290" y="555.482" font-size="6.45" fill="#dddddd" class="c" textLength="175" lengthAdjust="spacingAndGlyphs" opacity="0.72">公室将自然引入室内阳光空气绿植环绕让身心得到放</text><text x="290" y="565.482" font-size="6.45" fill="#dddddd" class="c" textLength="61.25" lengthAdjust="spacingAndGlyphs" opacity="0.72">造集办公展览会议</text><rect x="558" y="140" width="424" height="32" fill="#c9962b" /><rect x="558" y="172" width="424" height="30" fill="#c9c9c9" /><rect x="558" y="202" width="424" height="31" fill="#ececec" /><rect x="558" y="233" width="424" height="31" fill="#c9c9c9" /><defs><filter id="bl65" x="-100%" y="-100%" width="300%" height="300%" color-interpolation-filters="sRGB"><feGaussianBlur stdDeviation="5"/></filter><filter id="bl66" x="-100%" y="-100%" width="300%" height="300%" color-interpolation-filters="sRGB"><feGaussianBlur stdDeviation="14"/></filter><clipPath id="cp67"><rect x="558" y="265" width="424" height="277"/></clipPath><radialGradient id="rg68" cx="0.5" cy="0.5" r="0.5"><stop offset="0" stop-color="#ffffff"/><stop offset="0.35" stop-color="#fde8a8"/><stop offset="0.7" stop-color="#e8a848" stop-opacity="0.85"/><stop offset="1" stop-color="#a05a18" stop-opacity="0"/></radialGradient></defs><g clip-path="url(#cp67)"><rect x="558" y="265" width="424" height="277" fill="#1a0c06" /><g transform="translate(532.5,245.8) scale(0.46)"><polygon points="60,470 420,350 900,290 975,300 975,420 500,470 100,600 60,600" fill="#5a2e18" filter="url(#bl66)"/><polygon points="440,360 900,300 930,340 470,410" fill="#7a4426" filter="url(#bl66)"/><ellipse cx="900" cy="420" rx="120" ry="120" fill="#6a3a1c" filter="url(#bl66)" opacity=".7"/><ellipse cx="220" cy="520" rx="150" ry="80" fill="#5a3018" filter="url(#bl66)" opacity=".8"/><polygon points="250,495 400,470 540,490 400,525" fill="#c49858" filter="url(#bl65)"/><polygon points="415,450 560,425 675,445 540,480" fill="#c49858" filter="url(#bl65)"/><polygon points="575,402 690,385 795,400 680,428" fill="#c49858" filter="url(#bl65)"/><polygon points="685,365 800,352 885,368 780,388" fill="#c49858" filter="url(#bl65)"/><polygon points="120,585 280,555 380,575 230,610" fill="#c49858" filter="url(#bl65)"/><rect x="525" y="380" width="47" height="70" fill="#141008" filter="url(#bl65)"/><rect x="765" y="330" width="40" height="40" fill="#141008" filter="url(#bl65)"/><rect x="349" y="110" width="16" height="180" fill="#d4d0cc" filter="url(#bl65)" opacity=".85"/><rect x="498" y="130" width="16" height="132" fill="#d4d0cc" filter="url(#bl65)" opacity=".85"/><rect x="633" y="80" width="16" height="132" fill="#d4d0cc" filter="url(#bl65)" opacity=".85"/><ellipse cx="185" cy="75" rx="42" ry="42" fill="url(#rg68)" /><ellipse cx="250" cy="95" rx="48" ry="48" fill="url(#rg68)" /><ellipse cx="465" cy="95" rx="64" ry="64" fill="url(#rg68)" /><ellipse cx="590" cy="155" rx="50" ry="50" fill="url(#rg68)" /><ellipse cx="840" cy="175" rx="160" ry="160" fill="url(#rg68)" /><ellipse cx="222" cy="405" rx="95" ry="95" fill="url(#rg68)" /></g></g><text x="558" y="565.848" font-size="6.88" fill="#5c5c5c" class="c" textLength="372" lengthAdjust="spacingAndGlyphs" opacity="0.72">公空间位于城市核心地段交通便利配套完善周边汇聚商业金融文化资源为企业提供高效舒适的办公环境项</text>
</g></svg>
<svg class="t" style="left:510px;top:735px" width="250" height="175" viewBox="0 0 1024 716.8">
<defs><clipPath id="clip19"><rect x="58" y="42" width="932" height="636"/></clipPath></defs>
<g clip-path="url(#clip19)">
<rect x="58" y="42" width="932" height="636" fill="#ffffff" /><defs><filter id="bl69" x="-100%" y="-100%" width="300%" height="300%" color-interpolation-filters="sRGB"><feGaussianBlur stdDeviation="4"/></filter><filter id="bl70" x="-100%" y="-100%" width="300%" height="300%" color-interpolation-filters="sRGB"><feGaussianBlur stdDeviation="10"/></filter><filter id="bl71" x="-100%" y="-100%" width="300%" height="300%" color-interpolation-filters="sRGB"><feGaussianBlur stdDeviation="2"/></filter></defs><defs><clipPath id="cp72"><rect x="58" y="42" width="464" height="636"/></clipPath></defs><g clip-path="url(#cp72)"><g transform="translate(49.2,32.8) scale(0.6894)"><rect x="10" y="10" width="680" height="930" fill="#3a3028" /><rect x="10" y="10" width="90" height="280" fill="#f0f0ec" /><polygon points="75,40 240,40 240,620 90,620" fill="#8a4628" /><polygon points="120,300 200,300 200,600 120,600" fill="#b05a2a" /><rect x="180" y="320" width="30" height="280" fill="#4a5a60" /><polygon points="320,10 690,10 690,60 540,345 420,380 340,250" fill="#17100b" /><line x1="350" y1="30" x2="680" y2="25" stroke="#2c2018" stroke-width="4" /><line x1="360" y1="70" x2="662" y2="65" stroke="#2c2018" stroke-width="4" /><line x1="370" y1="110" x2="644" y2="105" stroke="#2c2018" stroke-width="4" /><line x1="380" y1="150" x2="626" y2="145" stroke="#2c2018" stroke-width="4" /><line x1="390" y1="190" x2="608" y2="185" stroke="#2c2018" stroke-width="4" /><line x1="400" y1="230" x2="590" y2="225" stroke="#2c2018" stroke-width="4" /><line x1="410" y1="270" x2="572" y2="265" stroke="#2c2018" stroke-width="4" /><line x1="420" y1="310" x2="554" y2="305" stroke="#2c2018" stroke-width="4" /><ellipse cx="458" cy="215" rx="14" ry="18" fill="#9a9a88" /><ellipse cx="462" cy="322" rx="10" ry="12" fill="#8a8a78" /><polygon points="690,50 540,340 540,570 690,720" fill="#a08c6a" /><polygon points="690,50 610,200 610,380 690,380" fill="#8a7658" /><polygon points="600,400 640,380 640,640 600,600" fill="#3a3028" /><polygon points="650,370 690,350 690,690 650,650" fill="#4a4038" /><polygon points="555,440 585,420 585,590 555,560" fill="#3c3228" /><rect x="640" y="120" width="25" height="170" fill="#2c241c" /><polygon points="225,250 350,330 350,620 225,640" fill="#20150e" /><polygon points="268,380 330,400 330,600 268,615" fill="#b06c30" /><polygon points="240,270 350,345 350,400 240,340" fill="#7a4a28" /><polygon points="352,290 408,335 408,485 352,510" fill="#b09444" /><polygon points="375,300 395,320 395,480 375,490" fill="#5a4020" /><rect x="415" y="370" width="130" height="190" fill="#6a4a28" /><rect x="425" y="400" width="115" height="120" fill="#e4bc78" filter="url(#bl69)"/><rect x="415" y="440" width="130" height="30" fill="#c48a3c" /><ellipse cx="475" cy="415" rx="40" ry="22" fill="#f4e8d0" filter="url(#bl69)"/><rect x="420" y="520" width="60" height="60" fill="#3a5a9a" filter="url(#bl69)"/><ellipse cx="390" cy="520" rx="28" ry="40" fill="#3a6a30" filter="url(#bl69)"/><polygon points="350,600 540,560 690,720 690,940 200,940" fill="#504c46" /><polygon points="470,580 560,590 690,800 690,940 480,940" fill="#68645e" filter="url(#bl70)"/><polygon points="300,700 460,760 440,940 200,940" fill="#38322c" filter="url(#bl70)"/><rect x="640" y="490" width="32" height="130" fill="#2a2420" rx="8"/><rect x="640" y="615" width="28" height="75" fill="#3a5a9a" /><ellipse cx="657" cy="485" rx="10" ry="12" fill="#3a2a20" /><polygon points="575,580 630,570 640,650 590,650" fill="#6a6a68" filter="url(#bl71)"/><polygon points="15,650 150,640 150,700 15,740" fill="#c02222" /><polygon points="160,648 240,635 292,645 215,680" fill="#dcb880" /><polygon points="40,715 130,672 235,690 150,755" fill="#d8b078" /><polygon points="15,740 110,770 30,830 15,830" fill="#d4ac74" /><polygon points="15,830 100,790 170,830 140,880 15,880" fill="#5a544c" /><polygon points="80,900 240,890 260,940 80,940" fill="#b8905c" /><ellipse cx="240" cy="900" rx="14" ry="24" fill="#e8a030" /><polygon points="190,730 290,650 300,700 215,900 180,900" fill="#2a1e18" /><polygon points="300,640 360,600 350,820 310,840" fill="#2a1e18" /><polygon points="345,620 400,595 400,690 350,700" fill="#2a1e18" /><polygon points="230,780 330,760 360,860 250,880" fill="#2a1e18" /><polygon points="400,600 490,580 480,680 410,690" fill="#2a1e18" /><g filter="url(#bl71)"><ellipse cx="270" cy="75" rx="38" ry="65" fill="#5c9a3c" transform="rotate(10 270 75)"/><ellipse cx="380" cy="45" rx="35" ry="22" fill="#6aa840" transform="rotate(30 380 45)"/><ellipse cx="200" cy="75" rx="24" ry="40" fill="#4a8a30" transform="rotate(-10 200 75)"/><ellipse cx="320" cy="200" rx="26" ry="70" fill="#4f8f34" transform="rotate(-10 320 200)"/><ellipse cx="170" cy="230" rx="26" ry="50" fill="#3f7a2a" transform="rotate(30 170 230)"/><ellipse cx="250" cy="170" rx="22" ry="50" fill="#3a7028" transform="rotate(20 250 170)"/><ellipse cx="60" cy="100" rx="40" ry="30" fill="#3a6a28" transform="rotate(0 60 100)"/><ellipse cx="110" cy="170" rx="30" ry="30" fill="#477a30" transform="rotate(0 110 170)"/><ellipse cx="350" cy="150" rx="18" ry="40" fill="#3a7028" transform="rotate(-30 350 150)"/><ellipse cx="50" cy="250" rx="35" ry="25" fill="#356a26" transform="rotate(0 50 250)"/><ellipse cx="130" cy="500" rx="40" ry="50" fill="#58a03a" transform="rotate(30 130 500)"/><ellipse cx="60" cy="420" rx="50" ry="40" fill="#3f7a2a" transform="rotate(10 60 420)"/><ellipse cx="70" cy="580" rx="55" ry="40" fill="#4f9434" transform="rotate(20 70 580)"/><ellipse cx="180" cy="550" rx="22" ry="45" fill="#4a8a30" transform="rotate(-20 180 550)"/><ellipse cx="30" cy="340" rx="30" ry="40" fill="#477a30" transform="rotate(0 30 340)"/><ellipse cx="100" cy="330" rx="40" ry="30" fill="#2f5a22" transform="rotate(0 100 330)"/><ellipse cx="30" cy="600" rx="24" ry="50" fill="#5aa03c" transform="rotate(0 30 600)"/><ellipse cx="160" cy="420" rx="30" ry="22" fill="#3a7028" transform="rotate(0 160 420)"/><ellipse cx="60" cy="880" rx="50" ry="20" fill="#2a5a22" transform="rotate(0 60 880)"/></g></g></g><text x="583" y="131" font-size="14" fill="#777" class="c" text-anchor="start" textLength="162" lengthAdjust="spacingAndGlyphs" >东立SHOW的商业配套</text><text x="580" y="166" font-size="31" fill="#e2712f" class="s b" text-anchor="start" textLength="282" lengthAdjust="spacingAndGlyphs" >Commercial facilities</text><text x="583" y="217.482" font-size="6.45" fill="#5c5c5c" class="c" textLength="305" lengthAdjust="spacingAndGlyphs" opacity="0.72">配套完善周边汇聚商业金融文化资源为企业提供高效舒适的办公环境项目整体规划以人为本</text><text x="583" y="228.482" font-size="6.45" fill="#5c5c5c" class="c" textLength="122" lengthAdjust="spacingAndGlyphs" opacity="0.72">体规划以人为本融合绿色生态与现代</text><text x="583" y="247.482" font-size="6.45" fill="#5c5c5c" class="c" textLength="305" lengthAdjust="spacingAndGlyphs" opacity="0.72">这里每一位创业者都能找到属于自己的舞台空中花园会呼吸的办公室将自然引入室内阳光空</text><text x="583" y="258.483" font-size="6.45" fill="#5c5c5c" class="c" textLength="305" lengthAdjust="spacingAndGlyphs" opacity="0.72">整体规划以人为本融合绿色生态与现代设计理念打造集办公展览会议休闲娱乐于一体的综合</text><text x="583" y="269.483" font-size="6.45" fill="#5c5c5c" class="c" textLength="289.75" lengthAdjust="spacingAndGlyphs" opacity="0.72">园会呼吸的办公室将自然引入室内阳光空气绿植环绕让身心得到放松效率随之提升国际</text><g transform="translate(565.2,286.7) scale(0.336)"><defs><clipPath id="cp73"><rect x="55" y="50" width="440" height="590"/></clipPath></defs><g clip-path="url(#cp73)"><rect x="55" y="50" width="440" height="590" fill="#a4a8ac" /><rect x="55" y="50" width="440" height="70" fill="#d0d4d8" /><polygon points="85,60 280,90 280,350 85,330" fill="#8e949c" /><polygon points="250,120 440,60 495,60 495,330 250,330" fill="#d4ccae" /><rect x="400" y="100" width="50" height="70" fill="#5a5a50" /><rect x="300" y="120" width="40" height="50" fill="#6a6a58" /><polygon points="130,245 300,205 495,225 495,300 250,295 130,270" fill="#e2481e" /><polygon points="130,245 300,205 495,225 495,250 300,232 140,262" fill="#f0a078" /><rect x="150" y="300" width="345" height="180" fill="#3c2c2a" /><rect x="350" y="300" width="30" height="180" fill="#e0dcd0" /><rect x="420" y="310" width="30" height="120" fill="#d0c8b0" /><ellipse cx="110" cy="375" rx="55" ry="50" fill="#6a6a50" filter="url(#bl70)"/><polygon points="110,480 495,440 495,640 110,640" fill="#5a2c24" /><rect x="120" y="560" width="120" height="40" fill="#c8381e" /><rect x="200" y="480" width="90" height="35" fill="#c8381e" /><rect x="370" y="520" width="125" height="50" fill="#c8381e" /><rect x="380" y="590" width="110" height="40" fill="#c8381e" /><polygon points="55,420 110,480 110,640 55,640" fill="#a8acb0" /></g><defs><clipPath id="cp74"><rect x="525" y="50" width="450" height="590"/></clipPath></defs><g clip-path="url(#cp74)"><rect x="525" y="50" width="450" height="590" fill="#cacaca" /><polygon points="700,110 975,55 975,330 700,260" fill="#8c8680" /><polygon points="620,180 700,240 880,330 880,520 620,610" fill="#4c4c52" /><line x1="700" y1="230" x2="700" y2="590" stroke="#2a2a2e" stroke-width="10" /><line x1="760" y1="260" x2="760" y2="563" stroke="#2a2a2e" stroke-width="10" /><line x1="820" y1="290" x2="820" y2="536" stroke="#2a2a2e" stroke-width="10" /><line x1="860" y1="310" x2="860" y2="518" stroke="#2a2a2e" stroke-width="10" /><polygon points="880,230 975,220 975,500 880,510" fill="#a65c50" /><rect x="900" y="330" width="75" height="60" fill="#6a4a90" /><polygon points="620,610 880,500 975,490 975,640 620,640" fill="#c9b5a2" /><rect x="525" y="50" width="95" height="590" fill="#c65a28" /><rect x="598" y="50" width="24" height="590" fill="#6a3018" /><rect x="545" y="220" width="40" height="40" fill="#f4e8e0" /><rect x="545" y="275" width="40" height="40" fill="#f4e8e0" /><rect x="545" y="330" width="40" height="40" fill="#f4e8e0" /><rect x="545" y="385" width="40" height="40" fill="#f4e8e0" /><rect x="545" y="440" width="40" height="40" fill="#f4e8e0" /><rect x="545" y="495" width="40" height="40" fill="#f4e8e0" /><rect x="545" y="550" width="40" height="40" fill="#f4e8e0" /></g></g><text x="583" y="530.482" font-size="6.45" fill="#5c5c5c" class="c" textLength="305" lengthAdjust="spacingAndGlyphs" opacity="0.72">市核心地段交通便利配套完善周边汇聚商业金融文化资源为企业提供高效舒适的办公环境项</text><text x="583" y="541.482" font-size="6.45" fill="#5c5c5c" class="c" textLength="183" lengthAdjust="spacingAndGlyphs" opacity="0.72">与现代设计理念打造集办公展览会议休闲娱乐于一体的</text><text x="583" y="558.482" font-size="6.45" fill="#5c5c5c" class="c" textLength="305" lengthAdjust="spacingAndGlyphs" opacity="0.72">设计理念打造集办公展览会议休闲娱乐于一体的综合性创意产业园区开放式空间布局激发团</text><text x="583" y="569.482" font-size="6.45" fill="#5c5c5c" class="c" textLength="183" lengthAdjust="spacingAndGlyphs" opacity="0.72">找到属于自己的舞台空中花园会呼吸的办公室将自然引</text><text x="583" y="591.482" font-size="6.45" fill="#5c5c5c" class="c" textLength="305" lengthAdjust="spacingAndGlyphs" opacity="0.72">融合绿色生态与现代设计理念打造集办公展览会议休闲娱乐于一体的综合性创意产业园区开</text><text x="583" y="602.482" font-size="6.45" fill="#5c5c5c" class="c" textLength="274.5" lengthAdjust="spacingAndGlyphs" opacity="0.72">规划以人为本融合绿色生态与现代设计理念打造集办公展览会议休闲娱乐于一体的</text>
</g></svg>
<div id="wm"><span style="font-size:20px;font-family:'Liberation Serif','Noto Serif CJK SC',serif;font-weight:900;letter-spacing:.3px;vertical-align:-1px">昵图网</span> <span style="font-size:16.8px;letter-spacing:-.15px;margin-left:1px">www.nipic.com</span></div>
<div id="id">ID:20331957 NO:20150609015710111742</div>
</body></html>
